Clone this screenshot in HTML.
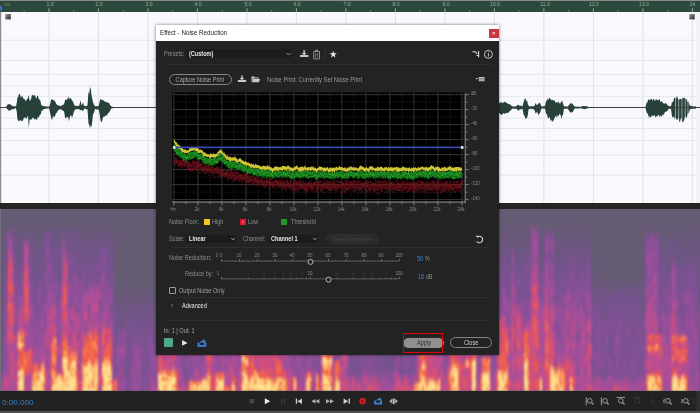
<!DOCTYPE html>
<html lang="en"><head><meta charset="utf-8"><title>Effect - Noise Reduction</title>
<style>
html,body{margin:0;padding:0}
body{width:700px;height:413px;overflow:hidden;position:relative;background:#222;font-family:"Liberation Sans",sans-serif;}
.abs{position:absolute}
.t{position:absolute;white-space:nowrap;line-height:1;transform:scaleX(.87);transform-origin:0 0}
svg{position:absolute;left:0;top:0;overflow:visible}
#ruler{left:0;top:0;width:700px;height:12px;background:#2b493d;border-top:1px solid #8a8a8a;box-sizing:border-box}
#ruler .t{font-size:5.6px;color:#9db0a8;top:1.4px;transform:translateX(-50%) scaleX(.9);transform-origin:50% 0}
#wave{left:0;top:12px;width:700px;height:191px;background:#f8f8fd}
#band{left:0;top:203px;width:700px;height:6px;background:#242424}
#spec{left:0;top:208.5px;width:700px;height:182.5px;background:#655b73;overflow:hidden}
#bar{left:0;top:391px;width:700px;height:22px;background:#222;border-bottom:2px solid #505050;box-sizing:border-box}
#time{left:1.5px;top:398.5px;font-size:8px;color:#2f7fd2;transform:scaleX(1.01)}
#dlg{left:155.7px;top:24.7px;width:343.5px;height:330.3px;background:#232323;box-shadow:0 0 3px rgba(0,0,0,.55)}
#title{left:0;top:0;width:343.5px;height:16px;background:#fff}
#title .t{left:4.4px;top:4.4px;font-size:7.4px;color:#222;transform:scaleX(.845)}
#close{right:0.6px;top:4.2px;width:9.8px;height:9.6px;background:#c8373f;color:#fff;font-size:6px;line-height:9.6px;text-align:center}
.lab{font-size:6.4px;color:#8e8e8e}
.val{font-size:6.4px;color:#e6e6e6;font-weight:bold}
.sep{position:absolute;height:1px;background:#2e2e2e}
.dd{position:absolute;background:#1c1c1c;border-radius:1px}
.pill{position:absolute;box-sizing:border-box;border:1px solid #858585;border-radius:6px;text-align:center;font-size:6.4px;white-space:nowrap}
.pill span{display:inline-block;transform:scaleX(.87)}
.tick{font-size:4.8px;color:#8a8a8a;transform:translateX(-50%) scaleX(.9);transform-origin:50% 0}
#spec i{position:absolute;top:0;width:2px;height:182.5px}
#spec i.h{top:143px;height:39.5px}
</style></head><body>

<div id="ruler" class="abs">
<span class="t" style="left:7px;color:#6f857c">ms</span>
<span class="t" style="left:49.7px">1.0</span>
<span class="t" style="left:99.2px">2.0</span>
<span class="t" style="left:148.7px">3.0</span>
<span class="t" style="left:198.2px">4.0</span>
<span class="t" style="left:247.7px">5.0</span>
<span class="t" style="left:297.2px">6.0</span>
<span class="t" style="left:346.7px">7.0</span>
<span class="t" style="left:396.2px">8.0</span>
<span class="t" style="left:445.7px">9.0</span>
<span class="t" style="left:495.2px">10.0</span>
<span class="t" style="left:544.7px">11.0</span>
<span class="t" style="left:594.2px">12.0</span>
<span class="t" style="left:643.7px">13.0</span>
<span class="t" style="left:693.2px">14.</span>
</div>
<svg width="700" height="13" viewBox="0 0 700 13">
<rect x="0" y="6" width="2" height="4.5" fill="#2f6fd6"/>
<rect x="23.6" y="10" width="1" height="1.7" fill="#6f8a80"/>
<rect x="48.4" y="8.3" width="1" height="3.4" fill="#9db0a8"/>
<rect x="73.2" y="10" width="1" height="1.7" fill="#6f8a80"/>
<rect x="97.9" y="8.3" width="1" height="3.4" fill="#9db0a8"/>
<rect x="122.7" y="10" width="1" height="1.7" fill="#6f8a80"/>
<rect x="147.4" y="8.3" width="1" height="3.4" fill="#9db0a8"/>
<rect x="172.2" y="10" width="1" height="1.7" fill="#6f8a80"/>
<rect x="196.9" y="8.3" width="1" height="3.4" fill="#9db0a8"/>
<rect x="221.7" y="10" width="1" height="1.7" fill="#6f8a80"/>
<rect x="246.4" y="8.3" width="1" height="3.4" fill="#9db0a8"/>
<rect x="271.1" y="10" width="1" height="1.7" fill="#6f8a80"/>
<rect x="295.9" y="8.3" width="1" height="3.4" fill="#9db0a8"/>
<rect x="320.6" y="10" width="1" height="1.7" fill="#6f8a80"/>
<rect x="345.4" y="8.3" width="1" height="3.4" fill="#9db0a8"/>
<rect x="370.1" y="10" width="1" height="1.7" fill="#6f8a80"/>
<rect x="394.9" y="8.3" width="1" height="3.4" fill="#9db0a8"/>
<rect x="419.6" y="10" width="1" height="1.7" fill="#6f8a80"/>
<rect x="444.4" y="8.3" width="1" height="3.4" fill="#9db0a8"/>
<rect x="469.1" y="10" width="1" height="1.7" fill="#6f8a80"/>
<rect x="493.9" y="8.3" width="1" height="3.4" fill="#9db0a8"/>
<rect x="518.6" y="10" width="1" height="1.7" fill="#6f8a80"/>
<rect x="543.4" y="8.3" width="1" height="3.4" fill="#9db0a8"/>
<rect x="568.1" y="10" width="1" height="1.7" fill="#6f8a80"/>
<rect x="592.9" y="8.3" width="1" height="3.4" fill="#9db0a8"/>
<rect x="617.6" y="10" width="1" height="1.7" fill="#6f8a80"/>
<rect x="642.4" y="8.3" width="1" height="3.4" fill="#9db0a8"/>
<rect x="667.1" y="10" width="1" height="1.7" fill="#6f8a80"/>
<rect x="691.9" y="8.3" width="1" height="3.4" fill="#9db0a8"/>
</svg>
<div id="wave" class="abs">
<svg width="700" height="191" viewBox="0 12 700 191">
<rect x="48.4" y="12" width="1" height="191" fill="#dfe2ec"/>
<rect x="97.9" y="12" width="1" height="191" fill="#dfe2ec"/>
<rect x="147.4" y="12" width="1" height="191" fill="#dfe2ec"/>
<rect x="196.9" y="12" width="1" height="191" fill="#dfe2ec"/>
<rect x="246.4" y="12" width="1" height="191" fill="#dfe2ec"/>
<rect x="295.9" y="12" width="1" height="191" fill="#dfe2ec"/>
<rect x="345.4" y="12" width="1" height="191" fill="#dfe2ec"/>
<rect x="394.9" y="12" width="1" height="191" fill="#dfe2ec"/>
<rect x="444.4" y="12" width="1" height="191" fill="#dfe2ec"/>
<rect x="493.9" y="12" width="1" height="191" fill="#dfe2ec"/>
<rect x="543.4" y="12" width="1" height="191" fill="#dfe2ec"/>
<rect x="592.9" y="12" width="1" height="191" fill="#dfe2ec"/>
<rect x="642.4" y="12" width="1" height="191" fill="#dfe2ec"/>
<rect x="691.9" y="12" width="1" height="191" fill="#dfe2ec"/>
<rect x="0" y="39.7" width="700" height="1" fill="#e3e5ef"/>
<rect x="0" y="59.9" width="700" height="1" fill="#e3e5ef"/>
<rect x="0" y="73.9" width="700" height="1" fill="#e3e5ef"/>
<rect x="0" y="85.4" width="700" height="1" fill="#e3e5ef"/>
<rect x="0" y="95.8" width="700" height="1" fill="#e3e5ef"/>
<rect x="0" y="117.6" width="700" height="1" fill="#e3e5ef"/>
<rect x="0" y="128.0" width="700" height="1" fill="#e3e5ef"/>
<rect x="0" y="140.1" width="700" height="1" fill="#e3e5ef"/>
<rect x="0" y="154.6" width="700" height="1" fill="#e3e5ef"/>
<rect x="0" y="174.6" width="700" height="1" fill="#e3e5ef"/>
<rect x="0" y="12" width="1.2" height="191" fill="#8d8d8d"/>
<rect x="696.5" y="12" width="3.5" height="191" fill="#f1f1f6"/>
<defs><linearGradient id="ci" x1="0" y1="0" x2="1" y2="1"><stop offset="0" stop-color="#9a9a9a"/><stop offset="1" stop-color="#2a2a2a"/></linearGradient></defs>
<rect x="5.2" y="14" width="5.6" height="5.4" fill="url(#ci)"/>
<rect x="689.3" y="14" width="5.4" height="5.4" fill="url(#ci)"/>
<rect x="0" y="107" width="700" height="1" fill="#3a3f3c"/>
<polygon fill="#25413a" points="6.0,107.1 7.0,105.4 8.0,104.0 9.0,104.4 10.0,104.1 11.0,105.1 12.0,105.8 12.8,106.2 13.6,106.0 14.4,106.2 15.2,106.2 16.0,106.5 16.8,102.5 17.5,97.2 18.2,97.2 19.0,93.6 20.0,94.6 21.0,97.9 22.0,95.2 23.0,98.0 24.0,99.0 25.0,99.6 25.8,101.2 26.5,100.0 27.2,99.0 28.0,97.9 28.8,95.0 29.6,101.0 31.0,99.4 31.8,95.5 32.5,94.7 33.2,95.4 34.0,95.8 34.8,94.6 35.5,96.8 36.2,99.1 37.0,96.3 37.8,95.7 38.5,98.0 39.2,100.0 40.0,99.5 40.8,102.7 41.5,105.4 42.3,105.4 43.2,106.1 44.0,106.2 44.7,106.1 45.4,106.4 46.1,106.5 46.9,106.2 47.6,106.7 48.3,106.7 49.0,106.6 49.8,105.2 50.5,102.6 51.2,99.5 52.0,99.6 53.0,99.9 54.0,100.2 55.0,101.3 56.0,103.4 57.0,104.7 58.0,105.4 58.8,105.4 59.5,105.5 60.2,106.0 61.0,106.1 61.8,105.8 62.5,104.7 63.2,104.8 64.0,104.2 65.0,100.4 66.0,98.9 66.8,100.2 67.5,98.7 68.2,95.9 69.0,99.5 70.0,97.8 71.0,98.6 72.0,100.4 73.0,101.4 74.0,104.4 75.0,106.0 75.8,105.8 76.6,106.1 77.4,105.8 78.2,105.9 79.0,106.0 79.8,103.5 80.5,100.2 81.5,105.5 82.2,104.4 83.0,102.2 84.0,105.9 84.7,105.8 85.4,106.2 86.1,106.2 86.8,105.7 87.5,105.5 88.5,91.6 89.2,94.6 90.0,86.7 90.8,89.5 91.5,95.0 92.2,98.7 93.0,102.2 94.0,104.8 95.0,106.1 95.7,106.4 96.4,105.9 97.1,106.4 97.8,105.9 98.5,106.3 99.5,102.5 100.2,99.0 101.0,99.6 102.0,100.3 103.0,99.4 104.0,101.4 105.0,101.4 106.0,101.7 107.0,102.5 108.0,102.6 109.0,103.0 110.0,104.8 111.0,106.2 111.8,106.4 112.5,106.7 113.2,107.0 114.0,107.0 114.0,108.0 113.2,108.2 112.5,108.2 111.8,108.3 111.0,108.8 110.0,110.9 109.0,112.7 108.0,113.0 107.0,115.8 106.0,115.0 105.0,116.6 104.0,116.5 103.0,117.2 102.0,121.4 101.0,122.2 100.2,118.2 99.5,113.5 98.5,109.3 97.8,109.4 97.1,109.5 96.4,109.5 95.7,108.9 95.0,109.0 94.0,112.8 93.0,114.1 92.2,121.4 91.5,127.3 90.8,125.1 90.0,128.3 89.2,124.8 88.5,123.4 87.5,109.2 86.8,109.5 86.1,108.8 85.4,108.8 84.7,108.8 84.0,109.1 83.0,110.9 82.2,110.8 81.5,109.8 80.5,110.2 79.8,109.9 79.0,109.0 78.2,109.1 77.4,109.3 76.6,108.9 75.8,109.4 75.0,109.5 74.0,111.6 73.0,115.1 72.0,117.7 71.0,114.9 70.0,116.2 69.0,121.3 68.2,117.0 67.5,117.5 66.8,116.6 66.0,118.7 65.0,117.2 64.0,111.1 63.2,110.9 62.5,110.0 61.8,110.3 61.0,109.1 60.2,109.3 59.5,109.5 58.8,110.0 58.0,110.3 57.0,112.6 56.0,113.3 55.0,116.0 54.0,117.4 53.0,115.7 52.0,120.4 51.2,118.0 50.5,114.7 49.8,111.3 49.0,108.3 48.3,108.4 47.6,108.4 46.9,108.4 46.1,108.8 45.4,108.6 44.7,109.0 44.0,109.0 43.2,109.5 42.3,110.7 41.5,110.6 40.8,114.4 40.0,114.6 39.2,116.5 38.5,117.8 37.8,116.5 37.0,120.4 36.2,119.0 35.5,118.8 34.8,120.2 34.0,117.7 33.2,118.6 32.5,117.4 31.8,119.0 31.0,119.7 29.6,119.6 28.8,128.0 28.0,116.0 27.2,116.7 26.5,119.3 25.8,117.6 25.0,118.0 24.0,117.3 23.0,120.2 22.0,120.9 21.0,120.9 20.0,119.5 19.0,121.4 18.2,120.6 17.5,119.5 16.8,112.1 16.0,108.3 15.2,108.3 14.4,108.7 13.6,109.2 12.8,108.9 12.0,109.5 11.0,109.6 10.0,110.9 9.0,110.6 8.0,109.9 7.0,108.7 6.0,107.9"/>
<polygon fill="#25413a" points="499.0,103.8 500.0,102.2 501.0,102.7 501.8,102.1 502.5,103.3 503.2,102.9 504.0,101.6 504.8,102.3 505.5,101.8 506.2,102.7 507.0,103.1 507.8,103.7 508.5,104.1 509.2,104.2 510.0,104.3 511.0,105.5 512.0,106.0 512.8,106.5 513.6,106.5 514.4,106.6 515.2,106.3 516.0,106.6 517.0,105.5 518.0,104.4 519.0,105.6 520.0,105.8 520.8,105.5 521.7,106.3 522.5,106.2 523.8,101.6 524.6,98.8 525.5,98.6 526.2,101.5 527.0,100.1 527.8,104.1 528.5,105.5 529.3,106.2 530.2,106.4 531.0,106.3 531.8,106.2 532.5,106.0 533.2,106.4 534.0,106.2 534.8,105.2 535.5,102.8 536.2,104.7 537.0,104.7 537.8,104.4 538.5,103.4 539.2,102.8 540.0,103.0 540.8,105.0 541.5,106.2 542.2,106.4 542.9,106.5 543.6,106.3 544.3,106.0 545.0,106.2 546.0,101.1 547.0,100.6 548.0,97.8 548.8,100.3 549.5,97.5 550.2,98.2 551.0,99.7 551.8,100.3 552.5,99.4 553.2,100.9 554.0,99.8 554.8,101.1 555.5,102.4 556.2,102.5 557.0,102.1 557.8,103.0 558.5,101.3 559.2,103.2 560.0,103.6 560.8,102.8 561.5,101.3 562.2,100.6 563.0,103.7 564.0,106.3 564.8,106.5 565.6,106.2 566.4,106.4 567.2,106.5 568.0,106.5 569.0,104.8 570.0,104.0 571.0,103.0 572.0,103.6 573.0,104.6 574.0,105.9 575.0,106.4 575.8,106.6 576.5,106.9 577.2,106.5 578.0,106.6 578.8,106.9 579.5,106.8 580.2,106.7 581.0,106.8 582.0,106.2 583.0,106.0 583.8,106.2 584.5,106.3 585.2,106.0 586.0,106.1 586.8,106.4 587.5,106.5 588.2,106.8 589.0,106.9 589.0,108.1 588.2,108.2 587.5,108.5 586.8,108.3 586.0,108.9 585.2,109.0 584.5,109.3 583.8,109.0 583.0,108.8 582.0,108.8 581.0,108.3 580.2,108.3 579.5,108.4 578.8,108.3 578.0,108.4 577.2,108.4 576.5,108.5 575.8,108.4 575.0,108.2 574.0,109.5 573.0,111.6 572.0,112.2 571.0,112.8 570.0,111.7 569.0,110.8 568.0,108.7 567.2,108.7 566.4,108.8 565.6,108.8 564.8,108.7 564.0,108.7 563.0,115.0 562.2,115.5 561.5,119.2 560.8,115.5 560.0,114.3 559.2,114.0 558.5,116.0 557.8,117.1 557.0,114.8 556.2,117.9 555.5,115.7 554.8,117.4 554.0,119.6 553.2,120.9 552.5,122.0 551.8,119.5 551.0,121.6 550.2,118.9 549.5,116.7 548.8,118.2 548.0,118.2 547.0,114.5 546.0,113.5 545.0,108.6 544.3,108.7 543.6,108.7 542.9,108.6 542.2,108.6 541.5,108.6 540.8,110.2 540.0,113.8 539.2,113.1 538.5,115.7 537.8,113.6 537.0,111.5 536.2,113.3 535.5,113.4 534.8,110.6 534.0,109.4 533.2,109.5 532.5,108.8 531.8,109.2 531.0,108.6 530.2,109.1 529.3,108.9 528.5,109.6 527.8,115.0 527.0,118.0 526.2,117.9 525.5,119.3 524.6,115.5 523.8,115.4 522.5,108.7 521.7,108.9 520.8,109.4 520.0,109.2 519.0,110.2 518.0,110.7 517.0,109.0 516.0,108.7 515.2,108.8 514.4,108.7 513.6,108.6 512.8,108.7 512.0,108.6 511.0,110.4 510.0,110.6 509.2,112.1 508.5,112.8 507.8,112.4 507.0,113.2 506.2,113.0 505.5,113.0 504.8,114.1 504.0,113.6 503.2,113.1 502.5,114.2 501.8,115.2 501.0,114.5 500.0,113.8 499.0,112.7"/>
<polygon fill="#25413a" points="645.5,106.9 646.5,102.7 647.2,103.0 648.0,99.8 648.8,99.5 649.5,100.1 650.2,100.0 651.0,98.7 651.8,99.1 652.6,101.0 653.4,98.8 654.2,99.4 655.0,101.3 655.8,99.2 656.6,99.4 657.4,100.1 658.2,100.5 659.0,99.2 659.8,99.4 660.6,102.7 661.4,100.7 662.2,102.1 663.0,103.0 663.8,103.4 664.5,103.9 665.2,102.7 666.0,103.5 666.8,104.1 667.7,105.5 668.5,105.8 669.3,106.3 670.2,106.1 671.0,106.4 672.0,102.0 673.0,102.2 674.0,98.4 674.8,97.5 675.5,97.1 676.2,98.9 677.0,95.6 677.8,98.6 678.5,99.0 679.2,99.8 680.0,98.9 680.8,99.3 681.5,98.3 682.2,99.1 683.0,97.2 683.8,98.5 684.5,97.5 685.2,98.6 686.0,98.8 686.8,99.7 687.7,102.0 688.5,101.2 689.2,104.1 690.0,105.9 690.8,105.5 691.5,105.9 692.2,106.0 693.0,106.4 693.8,106.5 694.5,106.4 695.2,106.3 696.0,106.5 696.0,108.5 695.2,108.7 694.5,108.4 693.8,108.9 693.0,108.6 692.2,108.8 691.5,108.9 690.8,108.9 690.0,109.4 689.2,111.5 688.5,113.2 687.7,113.9 686.8,117.4 686.0,117.7 685.2,116.0 684.5,119.1 683.8,121.6 683.0,121.5 682.2,122.4 681.5,117.9 680.8,118.3 680.0,122.2 679.2,121.6 678.5,117.0 677.8,119.3 677.0,120.2 676.2,118.6 675.5,117.7 674.8,119.5 674.0,116.0 673.0,117.7 672.0,116.6 671.0,108.7 670.2,108.8 669.3,109.1 668.5,108.8 667.7,110.6 666.8,111.3 666.0,111.9 665.2,111.6 664.5,113.2 663.8,114.1 663.0,116.0 662.2,114.0 661.4,116.9 660.6,115.3 659.8,117.6 659.0,114.9 658.2,114.7 657.4,116.4 656.6,115.8 655.8,117.8 655.0,116.0 654.2,114.8 653.4,116.2 652.6,115.9 651.8,115.1 651.0,117.6 650.2,117.4 649.5,115.7 648.8,117.7 648.0,114.2 647.2,113.3 646.5,112.1 645.5,107.9"/>
<rect x="675.2" y="96" width="0.7" height="26" fill="#f8f8fd" opacity="0.75"/>
<rect x="678.4" y="96" width="0.7" height="26" fill="#f8f8fd" opacity="0.75"/>
<rect x="681.6" y="96" width="0.7" height="26" fill="#f8f8fd" opacity="0.75"/>
<rect x="684.8" y="96" width="0.7" height="26" fill="#f8f8fd" opacity="0.75"/>
<rect x="687.6" y="96" width="0.7" height="26" fill="#f8f8fd" opacity="0.75"/>
<rect x="0" y="107" width="700" height="1" fill="#3a3f3c"/>
</svg></div>
<div id="band" class="abs"></div>
<div id="spec" class="abs">
<div class="abs" style="left:0;top:0;width:700px;height:182.5px;filter:blur(.8px)"><i style="left:0px;background:linear-gradient(#655b73 0.3%,#665a75 76.1%,#685979 80.5%,#655b73 87.6%,#665a75 88.7%,#7d5095 92.0%,#875097 95.3%,#b54e93 98.1%,#ac4e99 99.7%)"></i>
<i style="left:2px;background:linear-gradient(#655b73 0.3%,#69587a 15.7%,#675a76 20.6%,#6b577f 25.5%,#6c5680 36.0%,#715487 39.8%,#6d5682 44.8%,#725488 47.0%,#6b577f 51.4%,#74538b 59.6%,#715487 76.6%,#7a5192 80.5%,#74538a 88.2%,#78528f 89.3%,#a14e9b 91.5%,#a24e9b 99.7%)"></i>
<i style="left:4px;background:linear-gradient(#655b73 0.3%,#655b73 6.9%,#6d5583 15.7%,#6b577f 21.2%,#77528e 31.0%,#78528f 43.1%,#8a4f98 48.1%,#7a5192 50.3%,#974f9a 55.2%,#845097 57.4%,#984f9a 62.4%,#7d5095 66.8%,#a14e9b 73.9%,#9c4f9a 76.6%,#815096 78.3%,#944f99 83.2%,#8a4f98 87.1%,#954f99 89.3%,#d14e7e 93.7%,#b34e94 99.7%)"></i>
<i style="left:6px;background:linear-gradient(#655b73 0.3%,#665b74 7.4%,#715488 15.7%,#6d5681 18.4%,#76538c 23.9%,#715488 26.1%,#795290 30.5%,#76528d 33.8%,#8d4f98 40.9%,#8d4f98 44.8%,#7b5193 49.7%,#9b4f9a 53.0%,#825097 58.0%,#b34e94 68.4%,#934f99 77.2%,#7d5095 78.8%,#9e4e9b 83.8%,#894f98 87.1%,#914f99 90.4%,#cf4e80 95.9%,#b54e93 99.7%)"></i>
<i style="left:8px;background:linear-gradient(#655b73 0.3%,#675a76 9.1%,#a74e9c 17.3%,#904f99 20.1%,#c84e85 24.5%,#b94e90 27.7%,#e6555b 32.7%,#de516d 36.0%,#f05a49 43.7%,#db5073 48.1%,#e6555c 51.4%,#f36a4b 53.0%,#df5269 58.0%,#e25364 60.7%,#c64e86 64.0%,#e05268 69.0%,#d94f76 72.3%,#ac4e99 75.5%,#c04e8a 80.5%,#924f99 86.0%,#bc4e8e 95.3%,#a94e9b 99.7%)"></i>
<i style="left:10px;background:linear-gradient(#655b73 0.3%,#655b73 6.3%,#69587b 10.7%,#9d4f9a 17.3%,#a64e9c 19.0%,#a54e9c 23.9%,#da5073 28.8%,#d74e7a 31.0%,#e25363 32.7%,#d14e7e 37.6%,#ef5a4a 44.2%,#b04e96 49.7%,#ec5850 53.6%,#e15366 58.5%,#f05b48 61.3%,#d24e7e 64.0%,#d24e7d 66.8%,#e35461 69.0%,#db5072 71.7%,#a04e9b 75.5%,#d04e7f 79.9%,#b54e92 83.2%,#d94f77 87.6%,#c14e8a 94.2%,#a54e9c 96.4%,#ae4e98 99.7%)"></i>
<i style="left:12px;background:linear-gradient(#655b73 0.3%,#675a77 9.1%,#77528e 15.7%,#865097 25.5%,#be4e8c 33.8%,#a64e9c 38.2%,#e35462 44.8%,#a94e9b 49.7%,#db5072 54.1%,#d44e7d 59.1%,#e35462 61.8%,#a34e9b 66.8%,#db5073 70.1%,#d74e7a 71.7%,#9f4e9b 75.5%,#c54e87 78.8%,#b84e90 83.2%,#cc4e82 87.1%,#b54e93 90.4%,#ca4e83 92.0%,#a14e9b 97.0%,#c24e89 99.7%)"></i>
<i style="left:14px;background:linear-gradient(#655b73 0.3%,#655b74 7.4%,#6d5583 13.5%,#6a577d 18.4%,#74538b 23.4%,#6f5585 29.4%,#7d5095 36.5%,#7d5095 45.3%,#aa4e9a 56.3%,#954f99 59.1%,#825097 66.8%,#c84e85 71.7%,#9b4f9a 77.2%,#9f4e9b 80.5%,#c24e89 84.9%,#ad4e98 88.2%,#bf4e8b 93.1%,#ad4e98 94.8%,#b54e93 99.7%)"></i>
<i style="left:16px;background:linear-gradient(#655b73 0.3%,#655b74 7.4%,#6d5583 14.6%,#6a587c 21.2%,#6d5583 22.8%,#705486 29.4%,#7a5191 34.9%,#77528f 37.6%,#8a4f98 43.1%,#8b4f98 47.0%,#77528f 51.9%,#77528e 54.7%,#8f4f98 62.9%,#875097 65.7%,#d84f78 73.9%,#9e4e9b 80.5%,#c74e86 85.4%,#a34e9b 88.2%,#be4e8c 93.1%,#c24e89 99.7%)"></i>
<i style="left:18px;background:linear-gradient(#655b73 0.3%,#675a77 12.4%,#6e5584 19.0%,#6e5584 29.4%,#77528e 32.1%,#76538d 36.5%,#7b5193 38.7%,#76528d 41.5%,#9f4e9b 48.6%,#934f99 51.9%,#bf4e8b 56.9%,#cf4e80 60.7%,#b14e95 65.7%,#fdb86d 70.1%,#fdb36a 72.3%,#ffe390 74.5%,#e5555d 78.3%,#d44e7c 79.9%,#f5734c 84.3%,#ec5850 88.2%,#ffe18e 89.8%,#ffe895 90.4%,#fb9c5b 93.7%,#ffe793 95.3%,#fec274 99.7%)"></i>
<i style="left:20px;background:linear-gradient(#655b73 0.3%,#655b73 6.9%,#69587b 13.5%,#725489 18.4%,#6e5584 23.4%,#7a5191 32.1%,#795290 37.1%,#855097 40.4%,#7b5192 45.9%,#835097 48.1%,#a84e9c 50.3%,#a24e9b 55.2%,#c44e88 58.5%,#b54e92 61.3%,#c24e89 66.2%,#f6784d 70.6%,#f8844f 72.8%,#fed482 74.5%,#fecc7b 75.5%,#f46d4b 77.7%,#ea5753 79.4%,#e7565a 84.9%,#f77c4e 87.6%,#ffda88 89.8%,#ffdc8a 90.4%,#fca560 91.5%,#ffe38f 93.7%,#fed382 94.8%,#ffea96 95.9%,#fec375 97.5%,#ffea96 98.6%,#fed886 99.7%)"></i>
<i style="left:22px;background:linear-gradient(#655b73 0.3%,#69587b 14.6%,#75538c 19.0%,#715487 21.7%,#795290 26.1%,#77528f 31.6%,#845097 39.3%,#984f9a 41.5%,#9a4f9a 51.4%,#ba4e8f 56.9%,#9d4f9a 62.9%,#be4e8c 65.7%,#f46c4b 67.9%,#fa9154 70.6%,#f26249 72.3%,#fb9a5a 73.9%,#fb9f5d 75.0%,#e35461 76.6%,#df5269 77.2%,#f36a4a 78.8%,#f15d48 84.9%,#f6794d 87.1%,#fdbb6f 88.7%,#fecc7b 90.9%,#ffe18e 97.0%,#fdb96e 99.2%,#fec878 99.7%)"></i>
<i style="left:24px;background:linear-gradient(#655b73 0.3%,#655b74 7.4%,#6b577e 14.6%,#ae4e98 20.1%,#c34e89 26.1%,#ad4e98 28.8%,#cf4e80 31.0%,#da5073 35.4%,#ed584e 38.2%,#e25364 42.0%,#ed584f 46.4%,#d44e7c 51.4%,#df526b 55.2%,#d94f77 58.0%,#e4545f 60.2%,#a74e9c 63.5%,#a04e9b 65.1%,#d44e7c 68.4%,#b04e96 71.2%,#b54e92 74.5%,#ce4e81 76.1%,#bd4e8d 77.7%,#f3674a 79.9%,#f16049 81.0%,#fa8e51 84.3%,#f77f4e 86.0%,#ec5851 87.6%,#ed594e 88.7%,#b54e93 92.0%,#a34e9b 95.9%,#ba4e8f 97.5%,#bb4e8e 99.7%)"></i>
<i style="left:26px;background:linear-gradient(#655b73 0.3%,#655b73 8.0%,#6c5681 15.1%,#74538a 16.8%,#ac4e99 19.5%,#c24e89 21.2%,#b94e90 28.8%,#e05268 36.5%,#d34e7d 41.5%,#f15e49 46.4%,#e7565a 52.5%,#f05b48 53.6%,#f05a49 56.9%,#b54e92 62.9%,#a94e9b 66.8%,#c04e8b 68.4%,#a74e9c 70.6%,#a04e9b 77.2%,#af4e97 78.3%,#ea5754 79.9%,#f3694a 83.2%,#e5555e 86.0%,#eb5752 89.3%,#a84e9c 93.1%,#a74e9c 96.4%,#be4e8c 98.1%,#b34e94 99.7%)"></i>
<i style="left:28px;background:linear-gradient(#655b73 0.3%,#685979 14.6%,#6d5682 17.3%,#7c5194 19.5%,#924f99 22.3%,#815096 28.8%,#9e4e9b 33.2%,#894f98 38.2%,#b14e95 42.6%,#bc4e8d 45.9%,#ab4e9a 50.8%,#c84e85 59.6%,#9e4e9b 64.0%,#954f99 74.5%,#b44e93 76.6%,#f3674a 78.8%,#e75659 85.4%,#f05a48 87.6%,#a84e9c 92.0%,#ca4e83 96.4%,#a74e9c 99.7%)"></i>
<i style="left:30px;background:linear-gradient(#655b73 0.3%,#675a76 11.8%,#7e5096 28.3%,#78528f 34.9%,#8c4f98 40.9%,#795290 44.8%,#845097 49.2%,#7e5096 50.8%,#b24e95 56.3%,#885097 60.7%,#9f4e9b 65.7%,#934f99 67.3%,#ad4e98 72.3%,#a44e9b 73.9%,#c94e84 77.2%,#ea5754 78.8%,#dc516f 81.6%,#e7565a 84.3%,#e05267 87.6%,#b54e92 90.4%,#a44e9b 94.2%,#bd4e8d 99.7%)"></i>
<i style="left:32px;background:linear-gradient(#655b73 0.3%,#665a75 12.9%,#6c5680 16.2%,#74538b 37.6%,#855097 45.3%,#7a5191 49.7%,#9c4f9a 53.6%,#825097 56.9%,#9b4f9a 59.6%,#885097 64.6%,#9c4f9a 69.5%,#8c4f98 75.0%,#b74e91 79.4%,#a54e9c 83.8%,#df5269 87.1%,#e85658 89.8%,#f6764c 90.9%,#fcb068 95.3%,#fa9355 96.4%,#fece7d 98.1%,#fed180 99.7%)"></i>
<i style="left:34px;background:linear-gradient(#655b73 0.3%,#655b73 7.4%,#6d5682 19.0%,#725489 41.5%,#7f5096 45.9%,#7a5192 54.1%,#934f99 59.1%,#845097 63.5%,#9c4f9a 68.4%,#924f99 72.8%,#ad4e98 77.7%,#a04e9b 82.1%,#f5724c 87.1%,#f46c4b 88.2%,#fcae66 91.5%,#f9874f 94.2%,#fec274 95.9%,#ffea96 99.7%)"></i>
<i style="left:36px;background:linear-gradient(#655b73 0.3%,#685979 15.1%,#705487 22.3%,#6e5583 26.1%,#74538b 28.3%,#6f5585 33.2%,#795290 37.6%,#76538d 39.3%,#815096 45.9%,#815096 50.3%,#725489 54.1%,#77528e 56.9%,#875097 58.5%,#7c5194 60.7%,#a34e9b 65.7%,#7f5096 70.6%,#954f99 76.6%,#ab4e9a 78.3%,#954f99 82.7%,#a54e9c 83.8%,#f16049 86.5%,#f46f4b 89.3%,#fca662 90.4%,#fcad66 90.9%,#f77e4e 92.0%,#fec173 94.2%,#fece7e 96.4%,#fba15e 97.5%,#fed886 98.6%,#fec173 99.7%)"></i>
<i style="left:38px;background:linear-gradient(#655b73 0.3%,#655b73 6.9%,#69587a 11.3%,#675a77 15.1%,#7a5192 34.3%,#74538b 39.3%,#9e4e9b 49.7%,#7c5194 54.7%,#944f99 58.5%,#865097 63.5%,#9d4f9a 67.9%,#924f99 73.4%,#ab4e9a 78.8%,#994f9a 83.8%,#d04e7f 87.1%,#fcab65 91.5%,#f8834f 93.1%,#ffe390 95.3%,#ffde8c 99.7%)"></i>
<i style="left:40px;background:linear-gradient(#655b73 0.3%,#655b73 6.9%,#74538a 21.2%,#6e5584 27.2%,#735389 37.6%,#8b4f98 45.3%,#7d5094 49.2%,#805096 56.3%,#a54e9c 61.8%,#8b4f98 65.1%,#a64e9c 76.1%,#9b4f9a 77.7%,#b14e95 83.8%,#f77b4d 88.7%,#ffdd8b 90.4%,#ffea96 92.6%,#fdb86d 95.3%,#fed684 96.4%,#fec173 98.1%,#fed684 99.7%)"></i>
<i style="left:42px;background:linear-gradient(#655b73 0.3%,#675a76 13.5%,#6f5585 22.3%,#725488 32.1%,#6d5682 37.1%,#7b5193 44.8%,#a54e9c 62.4%,#934f99 67.3%,#a04e9b 69.0%,#944f99 73.9%,#ad4e99 75.5%,#b84e91 82.7%,#fdbb6f 87.1%,#fed381 88.7%,#fdb36a 90.4%,#ffe592 92.0%,#ffe591 94.8%,#f9894f 97.0%,#fed180 99.7%)"></i>
<i style="left:44px;background:linear-gradient(#655b73 0.3%,#665a75 9.6%,#76528d 14.6%,#7c5194 21.2%,#76528d 25.5%,#815096 29.4%,#7c5193 34.3%,#904f99 37.1%,#7b5192 42.6%,#795191 49.2%,#954f99 54.7%,#815096 60.2%,#b44e93 73.4%,#954f99 77.7%,#ba4e8f 81.0%,#d14e7e 87.6%,#f36a4b 89.8%,#f15d48 90.9%,#f67a4d 93.7%,#cf4e80 98.1%,#ed594e 99.7%)"></i>
<i style="left:46px;background:linear-gradient(#655b73 0.3%,#655b74 8.0%,#7e5096 15.1%,#8f4f98 22.3%,#795191 31.0%,#974f9a 36.5%,#885097 44.8%,#894f98 48.1%,#a64e9c 54.1%,#9a4f9a 64.0%,#b74e91 68.4%,#b14e95 70.1%,#cb4e83 71.7%,#c44e88 75.0%,#a04e9b 76.6%,#894f98 86.0%,#b34e94 90.4%,#9d4f9a 99.7%)"></i>
<i style="left:48px;background:linear-gradient(#655b73 0.3%,#655b74 7.4%,#6a587c 10.2%,#7e5096 14.6%,#7d5095 19.5%,#944f99 23.9%,#885097 28.3%,#a64e9c 32.7%,#875097 36.5%,#835097 39.3%,#a44e9b 47.0%,#9c4f9a 55.2%,#c24e89 59.6%,#c84e85 66.8%,#a54e9c 73.4%,#ad4e98 75.5%,#934f99 79.4%,#a44e9b 84.3%,#9b4f9a 92.6%,#ae4e98 94.2%,#a34e9b 99.7%)"></i>
<i style="left:50px;background:linear-gradient(#655b73 0.3%,#675a77 9.6%,#73538a 14.6%,#6d5682 21.7%,#7d5095 26.6%,#77528f 32.1%,#845097 36.0%,#7a5192 40.4%,#a54e9c 47.5%,#974f9a 51.9%,#c54e87 59.1%,#a84e9c 62.4%,#c14e8a 66.8%,#b04e96 70.1%,#dd516e 75.5%,#dc5071 77.7%,#c64e86 79.4%,#db5072 83.2%,#cb4e83 86.5%,#f15e49 89.3%,#c34e88 93.7%,#cf4e80 95.9%,#e95757 98.1%,#e95756 99.7%)"></i>
<i style="left:52px;background:linear-gradient(#655b73 0.3%,#665a75 10.2%,#6e5584 14.0%,#78528f 25.5%,#7e5096 27.2%,#7f5096 33.8%,#8e4f98 35.4%,#855097 37.6%,#8f4f98 41.5%,#7d5095 45.3%,#9e4e9b 47.5%,#984f9a 51.9%,#cd4e81 54.1%,#d84e78 56.3%,#ae4e98 60.7%,#da4f74 65.7%,#bc4e8e 69.5%,#e7565b 71.2%,#f8814e 75.5%,#f5754c 78.3%,#fba15e 82.7%,#fa8c50 83.8%,#dd516f 86.5%,#fba15e 89.3%,#fb9a59 90.4%,#fecc7b 91.5%,#fb9f5d 92.6%,#f77d4e 95.3%,#ffe390 98.6%,#ffd987 99.7%)"></i>
<i style="left:54px;background:linear-gradient(#655b73 0.3%,#655b74 8.0%,#7a5191 23.4%,#75538b 32.1%,#954f99 43.1%,#8d4f98 49.2%,#bb4e8e 54.1%,#a64e9c 61.3%,#d74e7a 66.2%,#d94f75 69.5%,#e05269 70.1%,#fa8d50 71.2%,#fcb169 72.3%,#f77f4e 74.5%,#f8834f 77.7%,#f2644a 78.8%,#f9874f 81.0%,#fa9153 83.8%,#e35463 87.6%,#fa8a50 90.4%,#f77c4e 92.0%,#fec476 93.7%,#fdb56b 95.3%,#fed987 96.4%,#ffdf8c 99.7%)"></i>
<i style="left:56px;background:linear-gradient(#655b73 0.3%,#675a76 10.7%,#6d5682 16.2%,#6d5682 22.3%,#77528e 27.2%,#705486 31.0%,#73538a 38.2%,#924f99 44.2%,#7c5194 49.7%,#7f5096 53.6%,#974f9a 56.9%,#8b4f98 69.0%,#8d4f98 69.5%,#ca4e84 71.2%,#b14e95 73.4%,#e25363 77.7%,#a94e9c 87.1%,#d54e7c 89.8%,#fb9b5a 92.6%,#fed07f 94.8%,#fdba6f 95.9%,#fed987 97.0%,#fdc073 99.7%)"></i>
<i style="left:58px;background:linear-gradient(#655b73 0.3%,#655b73 7.4%,#75538c 29.4%,#705486 38.2%,#894f98 42.6%,#795191 47.5%,#8b4f98 50.8%,#8b4f98 56.3%,#994f9a 58.5%,#8a4f98 63.5%,#984f9a 65.1%,#7e5095 70.1%,#ae4e98 77.2%,#964f99 79.4%,#944f99 82.1%,#a64e9c 83.2%,#ae4e97 89.3%,#c64e86 89.8%,#fcb169 91.5%,#ffe996 93.1%,#ffdf8c 99.7%)"></i>
<i style="left:60px;background:linear-gradient(#655b73 0.3%,#655b73 8.5%,#6c577f 16.2%,#77528e 20.6%,#705487 38.2%,#855097 42.0%,#805096 45.9%,#a84e9c 53.0%,#984f9a 57.4%,#a64e9c 62.4%,#934f99 64.0%,#934f99 66.2%,#a04e9b 72.8%,#c84e85 75.5%,#be4e8c 78.8%,#994f9a 82.7%,#ad4e99 87.6%,#9f4e9b 89.3%,#c24e8a 90.4%,#fb9b5a 92.0%,#fcaf68 92.6%,#ffe793 95.9%,#fec475 97.5%,#ffea96 99.7%)"></i>
<i style="left:62px;background:linear-gradient(#655b73 0.3%,#675a77 10.7%,#a74e9c 23.9%,#9e4e9b 31.6%,#b94e90 37.1%,#b04e96 38.7%,#df526a 44.2%,#cb4e83 47.0%,#e15366 51.4%,#c74e86 56.3%,#dd516e 59.1%,#b04e96 64.0%,#f05b48 74.5%,#e85658 76.1%,#f3694a 78.3%,#f05b48 79.9%,#fdbd71 82.7%,#fdbe71 85.4%,#e7565a 90.9%,#fec878 95.9%,#fed180 99.7%)"></i>
<i style="left:64px;background:linear-gradient(#655b73 0.3%,#69587a 12.9%,#8d4f98 22.3%,#a44e9b 27.2%,#e25363 32.7%,#c34e88 38.7%,#d44e7c 41.5%,#ec5851 43.7%,#f2634a 50.3%,#d94f76 53.6%,#e95755 58.5%,#ba4e8f 64.0%,#b24e95 66.8%,#db5071 69.0%,#da5073 70.1%,#f9854f 75.0%,#f77e4e 76.1%,#ee594b 77.2%,#fcab65 78.3%,#fec174 78.8%,#fba25f 81.0%,#ffea96 82.7%,#ffdd8b 92.0%,#fcb068 94.2%,#ffe08d 98.1%,#ffda88 99.7%)"></i>
<i style="left:66px;background:linear-gradient(#655b73 0.3%,#655b73 7.4%,#6b577e 14.0%,#75538c 21.2%,#c64e86 33.2%,#bb4e8e 39.8%,#cb4e83 48.6%,#b34e94 49.7%,#d24e7e 51.4%,#af4e97 53.6%,#ac4e99 55.2%,#da4f75 60.2%,#bd4e8c 67.9%,#f15d48 73.9%,#f05a48 75.0%,#f67a4d 76.1%,#fa8a50 81.0%,#fed685 82.7%,#fed281 84.3%,#fcaa64 85.4%,#fed180 86.5%,#fec778 88.2%,#ffde8b 90.4%,#fcb169 93.1%,#fed07f 94.2%,#fdb56b 95.9%,#ffe793 98.6%,#ffe390 99.7%)"></i>
<i style="left:68px;background:linear-gradient(#655b73 0.3%,#655b73 8.0%,#715487 17.3%,#7b5193 37.1%,#9b4f9a 47.5%,#8a4f98 51.9%,#a34e9b 56.9%,#8d4f98 61.8%,#aa4e9a 63.5%,#c44e88 66.2%,#9f4e9b 69.5%,#a24e9b 72.3%,#dd516d 76.6%,#da4f74 79.4%,#f5744c 82.1%,#eb5851 83.2%,#f98950 84.3%,#f2644a 87.1%,#f77f4e 88.7%,#ffdf8c 89.8%,#ffe995 90.4%,#fdba6f 93.1%,#ffe693 95.9%,#fdb46b 97.5%,#ffe995 98.6%,#ffea96 99.7%)"></i>
<i style="left:70px;background:linear-gradient(#655b73 0.3%,#655b73 7.4%,#675978 9.6%,#6d5583 11.3%,#7e5095 31.0%,#7b5192 36.0%,#9d4f9a 45.3%,#7d5095 51.4%,#b84e91 56.3%,#a14e9b 58.5%,#a64e9c 60.2%,#914f99 61.8%,#a34e9b 63.5%,#ae4e97 67.3%,#a24e9b 73.4%,#a84e9c 75.0%,#f8824e 79.9%,#fa8b50 81.6%,#f5714c 83.2%,#ffdb89 88.2%,#f9874f 90.4%,#ffe08d 92.0%,#ffea96 99.7%)"></i>
<i style="left:72px;background:linear-gradient(#655b73 0.3%,#655b73 6.3%,#6c5681 11.3%,#725489 23.4%,#8b4f98 28.8%,#7a5192 33.8%,#894f98 37.1%,#894f98 51.4%,#cd4e82 58.0%,#cb4e82 59.6%,#924f99 62.4%,#8b4f98 64.6%,#bb4e8e 67.9%,#cd4e81 77.2%,#f9874f 82.1%,#ffe18e 84.3%,#ffe18e 86.5%,#f6764c 88.2%,#fed886 89.3%,#ffe28f 89.8%,#fba15e 91.5%,#ffdd8a 93.7%,#ffda88 99.7%)"></i>
<i style="left:74px;background:linear-gradient(#655b73 0.3%,#655b74 6.9%,#6e5583 11.8%,#6c5681 17.9%,#77528e 22.3%,#7c5193 34.3%,#9c4f9a 38.7%,#885097 43.7%,#9e4e9b 49.7%,#865097 55.2%,#bb4e8e 60.2%,#a94e9b 66.2%,#db5073 68.4%,#e25363 70.6%,#cd4e81 77.2%,#fb9f5d 81.6%,#f98950 82.7%,#ffe491 84.3%,#fed381 86.0%,#ffe592 87.6%,#fca963 90.4%,#fed785 91.5%,#ffea96 94.2%,#ffe794 96.4%,#fec476 97.5%,#ffdb89 99.7%)"></i>
<i style="left:76px;background:linear-gradient(#655b73 0.3%,#655b73 7.4%,#715488 16.2%,#6d5682 20.1%,#74538b 25.0%,#705487 29.4%,#9c4f9a 43.7%,#875097 48.1%,#984f9a 50.8%,#8d4f98 55.8%,#a34e9b 57.4%,#c74e86 64.0%,#944f99 70.1%,#cb4e82 75.0%,#b74e91 76.6%,#f2654a 81.6%,#f15d49 84.3%,#e15365 86.0%,#f05c48 92.6%,#fa9053 95.9%,#f8804e 99.7%)"></i>
<i style="left:78px;background:linear-gradient(#655b73 0.3%,#655b74 8.0%,#705487 19.0%,#77528e 31.0%,#725488 36.0%,#8e4f98 40.9%,#885097 48.1%,#a34e9b 53.0%,#8f4f98 54.7%,#bd4e8d 59.6%,#ad4e98 61.3%,#b54e93 65.1%,#8f4f98 70.1%,#b74e91 74.5%,#954f99 86.0%,#d54e7c 95.9%,#c34e89 99.7%)"></i>
<i style="left:80px;background:linear-gradient(#655b73 0.3%,#665a75 10.2%,#6a577d 17.3%,#725488 21.2%,#75538c 36.0%,#8c4f98 40.9%,#815096 48.6%,#994f9a 59.1%,#894f98 61.3%,#b04e96 69.5%,#994f9a 82.1%,#bc4e8d 87.1%,#b44e93 93.1%,#d64e7b 96.4%,#d34e7d 99.7%)"></i>
<i style="left:82px;background:linear-gradient(#655b73 0.3%,#685979 13.5%,#76528d 22.3%,#725489 25.5%,#845097 38.7%,#7d5095 42.6%,#8e4f98 45.9%,#a84e9c 47.5%,#b34e94 50.8%,#9a4f9a 55.8%,#bb4e8f 64.6%,#a84e9c 66.8%,#d94f76 70.6%,#c34e89 74.5%,#f36a4b 79.4%,#f15f49 84.3%,#fca863 86.5%,#fa9154 88.2%,#fcab65 89.8%,#f6784d 93.1%,#fca762 95.3%,#fba25f 98.1%,#fec979 99.7%)"></i>
<i style="left:84px;background:linear-gradient(#655b73 0.3%,#69587a 14.6%,#725488 21.2%,#725488 26.6%,#7c5194 29.9%,#845097 34.3%,#7b5192 39.8%,#aa4e9a 48.6%,#994f9a 53.0%,#dc5071 58.5%,#954f99 62.4%,#8d4f98 65.1%,#a04e9b 68.4%,#e15367 70.6%,#e15366 72.3%,#f3674a 73.9%,#ed594e 75.0%,#f6774d 77.7%,#f6774d 79.9%,#ed584e 83.8%,#f16049 84.9%,#ffe793 88.2%,#fec878 90.9%,#ffdd8a 93.1%,#fec777 97.0%,#ffe996 99.7%)"></i>
<i style="left:86px;background:linear-gradient(#655b73 0.3%,#675978 16.2%,#725488 21.2%,#74538b 31.6%,#7d5095 36.0%,#75538b 41.5%,#7a5192 43.7%,#c84e85 48.6%,#c34e89 51.4%,#a34e9b 53.6%,#a54e9c 56.9%,#c34e89 58.5%,#984f9a 65.1%,#a24e9b 67.3%,#f46d4b 75.5%,#f15d49 81.6%,#e25364 82.7%,#e5555d 83.2%,#f8834f 84.3%,#f9864f 86.0%,#ffdc89 87.1%,#ffe592 87.6%,#ffe491 89.3%,#fca963 90.9%,#ffdd8a 92.6%,#ffea96 99.7%)"></i>
<i style="left:88px;background:linear-gradient(#655b73 0.3%,#655b74 11.8%,#74538b 26.6%,#76538c 32.7%,#6f5585 37.6%,#994f9a 45.3%,#a04e9b 51.9%,#885097 54.1%,#835097 56.9%,#994f9a 59.1%,#a14e9b 62.9%,#f26249 70.6%,#e6555c 71.7%,#f46f4b 74.5%,#ec5851 75.5%,#f36b4b 77.2%,#eb5852 79.4%,#f05b48 81.6%,#ffe490 84.9%,#ffe793 87.6%,#fdb76d 88.7%,#ffe28f 89.8%,#fed483 95.3%,#fdb36a 96.4%,#f46c4b 97.5%,#fdb86d 98.6%,#fed180 99.7%)"></i>
<i style="left:90px;background:linear-gradient(#655b73 0.3%,#655b74 7.4%,#6c5681 15.1%,#6a577d 21.2%,#7a5191 36.0%,#78528f 38.2%,#a94e9b 43.7%,#bf4e8c 47.5%,#9c4f9a 54.1%,#bb4e8e 61.3%,#b84e91 65.7%,#f8824e 70.6%,#f36a4b 71.7%,#f5754c 73.9%,#f05a48 75.5%,#f5744c 78.3%,#f16149 83.8%,#fec878 86.5%,#fec274 88.2%,#ffe592 89.8%,#ffe591 92.6%,#fec475 94.8%,#ffe390 99.7%)"></i>
<i style="left:92px;background:linear-gradient(#655b73 0.3%,#655b73 7.4%,#6c5680 11.8%,#6b577e 22.3%,#705586 25.0%,#705487 29.9%,#855097 37.1%,#815096 42.0%,#a14e9b 45.9%,#ab4e99 50.8%,#c64e86 53.0%,#ca4e83 55.8%,#b64e92 56.9%,#9e4e9b 64.0%,#df526a 71.7%,#f9874f 73.9%,#f26349 78.3%,#f6764c 81.0%,#f05b48 82.7%,#f36b4b 85.4%,#feca7a 88.7%,#fca762 90.4%,#fec979 92.0%,#fcab65 93.7%,#f46e4b 95.3%,#f8834e 97.5%,#ffea96 99.7%)"></i>
<i style="left:94px;background:linear-gradient(#655b73 0.3%,#655b73 7.4%,#73538a 21.7%,#715487 26.6%,#7b5193 31.0%,#76528d 38.2%,#a64e9c 45.3%,#9a4f9a 47.5%,#bd4e8d 53.0%,#9c4f9a 57.4%,#bb4e8e 64.0%,#f05a49 67.9%,#df526b 69.0%,#f46e4b 70.1%,#f3684a 71.7%,#fa9355 73.4%,#fa8a50 76.1%,#ef594a 78.3%,#e25364 81.0%,#f77b4d 84.3%,#fec174 86.0%,#fcb169 91.5%,#ffea96 96.4%,#fec476 98.1%,#ffea96 99.7%)"></i>
<i style="left:96px;background:linear-gradient(#655b73 0.3%,#655b73 8.0%,#6d5583 15.1%,#725489 27.2%,#835097 31.6%,#74538a 38.2%,#7b5193 40.9%,#b54e93 45.3%,#a64e9c 49.7%,#d24e7d 53.0%,#d04e7f 55.2%,#a24e9b 59.1%,#a74e9c 62.9%,#b44e93 65.7%,#f15f49 70.1%,#e95657 74.5%,#f9874f 76.6%,#ef5a4a 81.0%,#fecc7c 86.0%,#ffe491 89.3%,#fed180 92.0%,#ffe894 94.2%,#fb9d5b 96.4%,#fdc072 98.1%,#fb9657 99.7%)"></i>
<i style="left:98px;background:linear-gradient(#655b73 0.3%,#675a77 11.3%,#725488 20.1%,#735489 26.6%,#825097 31.6%,#725489 36.5%,#b24e94 47.5%,#855097 51.9%,#934f99 54.7%,#8d4f98 58.0%,#b94e90 62.9%,#9e4e9b 66.2%,#c04e8a 71.7%,#ac4e99 75.5%,#b14e95 84.3%,#c84e85 88.7%,#bc4e8d 90.4%,#d84f78 91.5%,#de516b 93.1%,#d94f76 95.3%,#af4e97 98.1%,#b84e90 99.7%)"></i>
<i style="left:100px;background:linear-gradient(#655b73 0.3%,#655b73 8.0%,#69587b 14.6%,#7a5192 23.9%,#77528e 26.6%,#835097 31.0%,#7a5192 36.0%,#9a4f9a 41.5%,#924f99 43.7%,#a04e9b 48.1%,#805096 53.0%,#a24e9b 62.9%,#934f99 69.0%,#ae4e98 71.2%,#b54e93 73.9%,#a14e9b 75.5%,#b84e91 77.7%,#a04e9b 83.2%,#cb4e83 88.2%,#bb4e8e 90.4%,#cc4e82 92.6%,#ae4e98 97.5%,#b74e91 99.7%)"></i>
<i style="left:102px;background:linear-gradient(#655b73 0.3%,#665a75 11.8%,#6b577f 14.6%,#6d5682 19.5%,#795290 22.3%,#8f4f98 27.7%,#904f99 30.5%,#7d5095 32.7%,#a34e9b 37.6%,#875097 42.6%,#9a4f9a 47.5%,#845097 54.7%,#a54e9c 59.1%,#a04e9b 62.9%,#e45460 65.7%,#f2644a 69.0%,#eb5851 74.5%,#cf4e80 79.9%,#e85658 81.0%,#f2654a 83.8%,#fed281 85.4%,#fec677 86.5%,#ffea96 88.2%,#fec979 91.5%,#f9854f 93.1%,#f6784d 96.4%,#fed583 98.6%,#fecd7c 99.7%)"></i>
<i style="left:104px;background:linear-gradient(#655b73 0.3%,#665a75 10.7%,#7e5096 23.9%,#875097 29.9%,#7d5095 34.3%,#9c4f9a 40.9%,#8c4f98 45.9%,#914f99 51.4%,#be4e8c 59.1%,#aa4e9a 62.9%,#d94f76 66.8%,#d24e7d 76.1%,#f46e4b 81.6%,#fcb168 83.2%,#ffe390 87.6%,#fecb7a 89.8%,#ffea96 92.6%,#fed886 99.7%)"></i>
<i style="left:106px;background:linear-gradient(#655b73 0.3%,#675a76 10.7%,#6f5585 15.7%,#6d5583 17.9%,#78528f 23.4%,#76538d 37.1%,#785290 39.8%,#885097 42.0%,#875097 47.5%,#a74e9c 56.3%,#964f99 63.5%,#d34e7d 66.2%,#ba4e8f 70.1%,#c14e8a 72.3%,#f46c4b 78.3%,#ec584f 80.5%,#f8814e 82.1%,#fdb36a 86.5%,#ffe28f 88.2%,#fec979 89.8%,#ffe693 91.5%,#ffe995 94.2%,#fec375 97.5%,#ffe390 99.7%)"></i>
<i style="left:108px;background:linear-gradient(#655b73 0.3%,#655b73 8.5%,#6b577f 16.8%,#725488 19.0%,#6f5586 23.9%,#795290 27.2%,#73538a 32.1%,#7d5095 36.0%,#845097 43.7%,#984f9a 47.5%,#875097 53.6%,#9b4f9a 58.5%,#8c4f98 62.4%,#9a4f9a 64.6%,#d74e79 66.2%,#e25364 67.3%,#de516c 71.2%,#f2654a 76.6%,#ed584e 79.4%,#fb9556 83.2%,#ffe793 85.4%,#ffe592 90.4%,#fba25f 92.0%,#ffe28f 93.7%,#fb9656 95.3%,#ffe08e 97.0%,#ffea96 99.7%)"></i>
<i style="left:110px;background:linear-gradient(#655b73 0.3%,#6a587c 16.2%,#6e5584 19.0%,#705586 23.4%,#7c5193 27.2%,#795290 31.6%,#815096 36.0%,#795290 40.4%,#984f9a 47.5%,#815096 56.3%,#a04e9b 60.2%,#a44e9b 65.1%,#cf4e7f 66.8%,#c04e8b 69.0%,#e85659 74.5%,#ed594e 78.3%,#df526a 81.0%,#f05c48 84.9%,#fca460 87.6%,#feca79 90.4%,#fec979 93.7%,#f98950 95.3%,#fece7d 96.4%,#ffda88 99.7%)"></i>
<i style="left:112px;background:linear-gradient(#655b73 0.3%,#665a75 12.4%,#725489 24.5%,#6e5583 31.0%,#75538c 36.0%,#76538d 44.8%,#7f5096 49.2%,#7a5192 58.0%,#984f9a 61.3%,#865097 68.4%,#934f99 71.7%,#865097 76.6%,#934f99 85.4%,#7f5096 90.9%,#8a4f98 93.1%,#d94f75 95.3%,#ec5851 99.7%)"></i>
<i style="left:114px;background:linear-gradient(#655b73 0.3%,#6a587c 32.1%,#69597a 45.9%,#705486 50.8%,#7c5193 61.3%,#715487 66.8%,#845097 72.3%,#7b5193 76.6%,#8a4f98 79.4%,#7b5192 84.9%,#7e5096 89.3%,#934f99 92.6%,#f05a48 94.2%,#f8804e 95.3%,#f4704c 99.7%)"></i>
<i style="left:116px;background:linear-gradient(#655b73 0.3%,#665a75 46.4%,#77528e 58.0%,#735489 69.0%,#9a4f9a 81.6%,#7a5191 89.3%,#914f99 92.0%,#dd516f 94.2%,#d94f77 98.1%,#e7565a 99.7%)"></i>
<i style="left:118px;background:linear-gradient(#655b73 0.3%,#655b73 42.6%,#675a76 48.1%,#6e5583 54.1%,#6d5583 61.3%,#7e5096 67.3%,#8c4f98 70.6%,#845097 72.3%,#a54e9c 77.2%,#924f99 87.1%,#974f9a 91.5%,#835097 96.4%,#964f99 99.7%)"></i>
<i style="left:120px;background:linear-gradient(#655b73 0.3%,#655b73 42.0%,#74538b 66.8%,#7f5096 69.5%,#845097 73.4%,#a94e9b 77.7%,#7e5096 84.3%,#994f9a 89.3%,#875097 92.6%,#9f4e9b 96.4%,#9f4e9b 99.7%)"></i>
<i style="left:122px;background:linear-gradient(#655b73 0.3%,#665a75 45.9%,#6d5583 53.6%,#6d5682 63.5%,#74538b 66.2%,#984f9a 69.0%,#845097 73.4%,#b54e93 77.7%,#825097 85.4%,#994f9a 89.8%,#a14e9b 99.7%)"></i>
<i style="left:124px;background:linear-gradient(#655b73 0.3%,#655b73 41.5%,#685979 51.9%,#8d4f98 70.6%,#894f98 82.7%,#795290 87.6%,#7d5095 93.1%,#8e4f98 94.8%,#8d4f98 99.7%)"></i>
<i style="left:126px;background:linear-gradient(#655b73 0.3%,#655b73 42.0%,#69587a 51.4%,#725489 56.9%,#725488 60.7%,#7a5191 65.7%,#7c5094 72.8%,#77528e 76.1%,#815096 81.0%,#73538a 84.9%,#7f5096 94.8%,#7e5096 99.7%)"></i>
<i style="left:128px;background:linear-gradient(#655b73 0.3%,#655b73 42.0%,#6b577f 47.5%,#6d5583 56.9%,#7d5095 65.7%,#74538b 75.0%,#7b5193 79.9%,#725488 83.8%,#795290 88.2%,#75538c 91.5%,#8a4f98 96.4%,#7b5193 99.7%)"></i>
<i style="left:130px;background:linear-gradient(#655b73 0.3%,#665a75 46.4%,#705486 53.6%,#7b5193 64.0%,#76528d 70.1%,#815096 72.3%,#7b5192 77.2%,#835097 79.9%,#7e5096 84.9%,#964f99 88.7%,#78528f 94.2%,#994f9a 99.7%)"></i>
<i style="left:132px;background:linear-gradient(#655b73 0.3%,#655b73 40.9%,#76538d 60.7%,#74538b 69.5%,#865097 76.1%,#7f5096 84.9%,#a04e9b 89.8%,#8f4f98 99.7%)"></i>
<i style="left:134px;background:linear-gradient(#655b73 0.3%,#655b73 40.4%,#6c5780 48.6%,#6a587c 53.0%,#6f5585 55.2%,#76538d 61.3%,#73538a 66.8%,#a14e9b 79.9%,#8c4f98 92.6%,#a74e9c 97.5%,#9d4f9a 99.7%)"></i>
<i style="left:136px;background:linear-gradient(#655b73 0.3%,#655b73 40.9%,#685979 49.2%,#715488 54.7%,#6c5680 60.2%,#78528f 64.0%,#7c5193 72.8%,#a74e9c 78.3%,#9b4f9a 79.9%,#9a4f9a 88.7%,#7c5194 93.7%,#ae4e98 98.1%,#aa4e9a 99.7%)"></i>
<i style="left:138px;background:linear-gradient(#655b73 0.3%,#655b73 48.6%,#6e5583 53.0%,#6c577f 58.5%,#75538c 63.5%,#75538c 69.5%,#8f4f98 76.1%,#875097 81.0%,#a74e9c 85.4%,#a84e9c 88.2%,#875097 93.1%,#8f4f98 99.7%)"></i>
<i style="left:140px;background:linear-gradient(#655b73 0.3%,#655b73 40.4%,#76538d 68.4%,#825097 70.6%,#7c5194 75.0%,#8f4f98 79.4%,#865097 90.4%,#954f99 94.2%,#8a4f98 99.7%)"></i>
<i style="left:142px;background:linear-gradient(#655b73 0.3%,#655b73 41.5%,#6b577e 47.0%,#6a587d 51.4%,#715488 60.2%,#7e5095 65.1%,#795290 67.9%,#875097 72.8%,#855097 76.1%,#75538b 89.3%,#7d5095 99.7%)"></i>
<i style="left:144px;background:linear-gradient(#655b73 0.3%,#655b73 42.0%,#675a76 44.8%,#6c5680 47.0%,#69587b 51.4%,#78528f 60.7%,#76528d 72.8%,#7e5096 76.1%,#78528f 84.9%,#8c4f98 99.7%)"></i>
<i style="left:146px;background:linear-gradient(#655b73 0.3%,#655b73 42.0%,#69587a 50.3%,#76528d 56.9%,#6d5583 61.8%,#805096 71.2%,#7b5193 77.2%,#835097 79.9%,#7a5191 84.3%,#805096 87.1%,#885097 99.7%)"></i>
<i style="left:148px;background:linear-gradient(#655b73 0.3%,#655b73 40.9%,#73538a 55.8%,#705486 62.9%,#805096 67.9%,#865097 70.6%,#7a5192 83.8%,#8b4f98 90.9%,#7b5193 95.9%,#8b4f98 99.7%)"></i>
<i style="left:150px;background:linear-gradient(#655b73 0.3%,#655b73 42.0%,#6c577f 53.0%,#795290 61.3%,#74538b 66.2%,#8f4f98 73.9%,#805096 76.1%,#904f99 82.1%,#805096 88.2%,#ab4e9a 99.7%)"></i>
<i style="left:152px;background:linear-gradient(#655b73 0.3%,#655b73 43.7%,#6c5681 54.1%,#6c5780 57.4%,#74538b 61.3%,#78528f 72.3%,#8f4f98 75.0%,#9a4f9a 77.7%,#9d4f9a 86.5%,#8e4f98 91.5%,#bd4e8c 98.1%,#b84e90 99.7%)"></i>
<i style="left:154px;background:linear-gradient(#655b73 0.3%,#655b73 42.6%,#6c5681 50.8%,#6d5681 59.6%,#77528f 65.1%,#705486 71.7%,#8b4f98 75.5%,#7d5094 79.4%,#944f99 81.6%,#984f9a 84.3%,#7f5096 90.9%,#aa4e9a 99.7%)"></i>
<i style="left:156px;background:linear-gradient(#655b73 0.3%,#655b73 41.5%,#6d5583 51.9%,#6b577f 58.0%,#77528e 63.5%,#715487 69.0%,#76528d 71.7%,#924f99 73.4%,#924f99 75.5%,#7d5095 77.2%,#7a5192 79.9%,#8e4f98 82.1%,#805096 87.1%,#a24e9b 92.6%,#8f4f98 97.0%,#ab4e9a 99.7%)"></i>
<i class="h" style="left:158px;background:linear-gradient(#e5555e 1.3%,#dc5071 9.0%,#e95755 24.4%,#e6555c 47.4%,#f3694a 52.6%,#fed684 60.3%,#ffea96 65.4%,#fec979 78.2%,#ffdb88 91.0%,#fb9c5a 96.2%,#fba15e 98.7%)"></i>
<i class="h" style="left:160px;background:linear-gradient(#c24e89 1.3%,#e45460 19.2%,#de516d 42.3%,#ffde8b 65.4%,#fdb36a 73.1%,#ffe390 78.2%,#ffe692 98.7%)"></i>
<i class="h" style="left:162px;background:linear-gradient(#b94e90 1.3%,#ba4e8f 16.7%,#d44e7c 32.1%,#c94e84 42.3%,#fcae66 60.3%,#fdb46b 62.8%,#f77c4d 67.9%,#fed685 78.2%,#fed786 98.7%)"></i>
<i class="h" style="left:164px;background:linear-gradient(#b64e92 1.3%,#a34e9b 9.0%,#b14e95 26.9%,#e15366 42.3%,#f6784d 47.4%,#fecc7b 57.7%,#fdbd71 65.4%,#f77f4e 70.5%,#ffe28f 78.2%,#fb9757 91.0%,#fdb56b 98.7%)"></i>
<i class="h" style="left:166px;background:linear-gradient(#b74e91 1.3%,#d64e7b 21.8%,#c14e8a 39.7%,#ee594c 55.1%,#fcaf68 62.8%,#fa8f52 70.5%,#fec677 75.6%,#fec274 88.5%,#ffe895 98.7%)"></i>
<i class="h" style="left:168px;background:linear-gradient(#cb4e82 1.3%,#c04e8b 39.7%,#f5744c 52.6%,#f6764c 60.3%,#ffdb89 65.4%,#fcad66 73.1%,#ffdd8a 78.2%,#ffea96 98.7%)"></i>
<i class="h" style="left:170px;background:linear-gradient(#c24e89 1.3%,#ad4e98 39.7%,#d14e7e 47.4%,#fa8c50 57.7%,#fca762 65.4%,#ffdc89 70.5%,#ffe894 98.7%)"></i>
<i class="h" style="left:172px;background:linear-gradient(#bc4e8d 1.3%,#d94f77 11.5%,#c44e88 34.6%,#fcab65 57.7%,#ffe793 70.5%,#ffe18e 80.8%,#fca762 85.9%,#fecd7d 93.6%,#fec576 98.7%)"></i>
<i class="h" style="left:174px;background:linear-gradient(#d24e7d 1.3%,#d94f76 11.5%,#984f9a 26.9%,#984f9a 34.6%,#f5734c 50.0%,#f9884f 60.3%,#fed785 67.9%,#ffe592 75.6%,#f9874f 88.5%,#fec878 93.6%,#fdba6f 98.7%)"></i>
<i class="h" style="left:176px;background:linear-gradient(#a94e9b 1.3%,#934f99 21.8%,#a34e9b 37.2%,#ec5850 65.4%,#ef5a4a 78.2%,#e45461 88.5%,#f6784d 98.7%)"></i>
<i class="h" style="left:178px;background:linear-gradient(#a94e9b 1.3%,#9b4f9a 24.4%,#a24e9b 34.6%,#c34e88 44.9%,#af4e97 52.6%,#b94e90 62.8%,#914f99 80.8%,#d54e7c 98.7%)"></i>
<i class="h" style="left:180px;background:linear-gradient(#a64e9c 1.3%,#845097 32.1%,#a84e9c 65.4%,#a44e9b 80.8%,#cc4e82 98.7%)"></i>
<i class="h" style="left:182px;background:linear-gradient(#904f99 1.3%,#7b5192 14.1%,#934f99 32.1%,#865097 44.9%,#ba4e8f 98.7%)"></i>
<i class="h" style="left:184px;background:linear-gradient(#7c5094 1.3%,#845097 24.4%,#73538a 47.4%,#815096 75.6%,#994f9a 80.8%,#c64e86 98.7%)"></i>
<i class="h" style="left:186px;background:linear-gradient(#7f5096 1.3%,#8f4f98 24.4%,#7b5192 52.6%,#865097 78.2%,#b74e91 98.7%)"></i>
<i class="h" style="left:188px;background:linear-gradient(#904f99 1.3%,#964f99 37.2%,#7b5193 50.0%,#7a5191 62.8%,#825097 67.9%,#e25365 83.3%,#f46c4b 98.7%)"></i>
<i class="h" style="left:190px;background:linear-gradient(#8d4f98 1.3%,#944f99 11.5%,#7f5096 21.8%,#805096 37.2%,#964f99 65.4%,#9f4e9b 67.9%,#fb9758 78.2%,#fecd7d 98.7%)"></i>
<i class="h" style="left:192px;background:linear-gradient(#894f98 1.3%,#9c4f9a 16.7%,#845097 39.7%,#964f99 67.9%,#a44e9b 70.5%,#f46d4b 78.2%,#fcaa64 83.3%,#fdb46a 98.7%)"></i>
<i class="h" style="left:194px;background:linear-gradient(#af4e97 1.3%,#825097 24.4%,#b04e96 44.9%,#9c4f9a 67.9%,#a44e9b 70.5%,#f46d4b 78.2%,#fed583 85.9%,#ffe794 91.0%,#fecd7c 98.7%)"></i>
<i class="h" style="left:196px;background:linear-gradient(#a34e9b 1.3%,#ad4e99 9.0%,#924f99 26.9%,#9c4f9a 37.2%,#c84e85 57.7%,#cf4e80 70.5%,#f26249 78.2%,#f2644a 83.3%,#fca963 88.5%,#fb9f5d 98.7%)"></i>
<i class="h" style="left:198px;background:linear-gradient(#885097 1.3%,#994f9a 9.0%,#9a4f9a 24.4%,#835097 37.2%,#a24e9b 55.1%,#9b4f9a 67.9%,#a34e9b 70.5%,#fecf7e 85.9%,#ffe692 98.7%)"></i>
<i class="h" style="left:200px;background:linear-gradient(#8e4f98 1.3%,#865097 19.2%,#9e4e9b 34.6%,#8c4f98 62.8%,#9e4e9b 67.9%,#f26249 75.6%,#fcad66 83.3%,#fed281 98.7%)"></i>
<i class="h" style="left:202px;background:linear-gradient(#885097 1.3%,#894f98 19.2%,#a14e9b 32.1%,#9f4e9b 52.6%,#ca4e83 65.4%,#fed886 75.6%,#feca7a 98.7%)"></i>
<i class="h" style="left:204px;background:linear-gradient(#b04e96 1.3%,#9a4f9a 21.8%,#a84e9c 52.6%,#c04e8a 62.8%,#fcaa64 73.1%,#fed785 78.2%,#fed685 98.7%)"></i>
<i class="h" style="left:206px;background:linear-gradient(#cc4e82 1.3%,#e05268 14.1%,#ba4e8f 34.6%,#bc4e8d 52.6%,#fed381 80.8%,#fec778 98.7%)"></i>
<i class="h" style="left:208px;background:linear-gradient(#ed594d 1.3%,#f67a4d 9.0%,#e95755 16.7%,#e85659 24.4%,#d24e7e 29.5%,#d94f76 39.7%,#f46e4b 55.1%,#fdbe71 62.8%,#fcab64 75.6%,#fed685 98.7%)"></i>
<i class="h" style="left:210px;background:linear-gradient(#bf4e8b 1.3%,#da4f74 9.0%,#db5072 19.2%,#c24e89 29.5%,#bf4e8b 42.3%,#d14e7f 55.1%,#f05a48 65.4%,#f05a48 98.7%)"></i>
<i class="h" style="left:212px;background:linear-gradient(#934f99 1.3%,#b24e95 11.5%,#9c4f9a 50.0%,#c64e86 67.9%,#cf4e80 98.7%)"></i>
<i class="h" style="left:214px;background:linear-gradient(#a84e9c 1.3%,#a94e9b 39.7%,#9c4f9a 47.4%,#de516c 67.9%,#e05268 88.5%,#f05c48 98.7%)"></i>
<i class="h" style="left:216px;background:linear-gradient(#9b4f9a 1.3%,#984f9a 44.9%,#a34e9b 47.4%,#f05a48 55.1%,#fec274 73.1%,#fec576 75.6%,#f6794d 80.8%,#fed483 88.5%,#fecf7e 98.7%)"></i>
<i class="h" style="left:218px;background:linear-gradient(#7f5096 1.3%,#904f99 19.2%,#835097 29.5%,#964f99 47.4%,#dd516d 55.1%,#f3694a 65.4%,#ffea96 78.2%,#fdbb6f 98.7%)"></i>
<i class="h" style="left:220px;background:linear-gradient(#8f4f98 1.3%,#ae4e98 16.7%,#9b4f9a 32.1%,#9d4f9a 47.4%,#e45460 55.1%,#f6794d 62.8%,#f8844f 65.4%,#f46c4b 70.5%,#ffe491 78.2%,#fed382 98.7%)"></i>
<i class="h" style="left:222px;background:linear-gradient(#a04e9b 1.3%,#b04e96 24.4%,#934f99 44.9%,#9a4f9a 47.4%,#f5724c 57.7%,#ffe18e 75.6%,#ffe693 88.5%,#fdb76d 93.6%,#fed583 98.7%)"></i>
<i class="h" style="left:224px;background:linear-gradient(#9a4f9a 1.3%,#954f99 29.5%,#a04e9b 50.0%,#b64e92 57.7%,#ae4e98 67.9%,#c34e88 83.3%,#f05c48 93.6%,#f05b48 98.7%)"></i>
<i class="h" style="left:226px;background:linear-gradient(#944f99 1.3%,#a64e9c 24.4%,#904f99 47.4%,#bc4e8d 57.7%,#be4e8c 80.8%,#d84e79 85.9%,#f8804e 93.6%,#fa8c50 98.7%)"></i>
<i class="h" style="left:228px;background:linear-gradient(#954f99 1.3%,#8b4f98 16.7%,#b84e91 39.7%,#a44e9b 50.0%,#c54e87 57.7%,#a44e9b 83.3%,#eb5753 93.6%,#f2664a 98.7%)"></i>
<i class="h" style="left:230px;background:linear-gradient(#964f99 1.3%,#a84e9c 32.1%,#d04e7f 47.4%,#af4e97 70.5%,#c74e86 78.2%,#be4e8c 83.3%,#e7565a 91.0%,#f15d48 98.7%)"></i>
<i class="h" style="left:232px;background:linear-gradient(#b04e96 1.3%,#b94e90 9.0%,#a24e9b 19.2%,#c54e87 55.1%,#f15e49 73.1%,#ffe592 88.5%,#ffe794 98.7%)"></i>
<i class="h" style="left:234px;background:linear-gradient(#a94e9b 1.3%,#c64e86 21.8%,#9f4e9b 39.7%,#9a4f9a 57.7%,#af4e97 62.8%,#ef5a4a 70.5%,#eb5852 83.3%,#f9874f 91.0%,#f8824e 98.7%)"></i>
<i class="h" style="left:236px;background:linear-gradient(#9e4e9b 1.3%,#984f9a 83.3%,#b54e92 98.7%)"></i>
<i class="h" style="left:238px;background:linear-gradient(#984f9a 1.3%,#964f99 37.2%,#cc4e82 60.3%,#bb4e8e 67.9%,#c54e87 98.7%)"></i>
<i class="h" style="left:240px;background:linear-gradient(#ac4e99 1.3%,#a14e9b 21.8%,#c44e87 47.4%,#b74e91 67.9%,#e15365 85.9%,#dd516d 98.7%)"></i>
<i class="h" style="left:242px;background:linear-gradient(#fdb36a 1.3%,#ffe592 11.5%,#ffdd8a 21.8%,#f9874f 29.5%,#f6774d 34.6%,#fa9254 39.7%,#f8824e 47.4%,#fece7d 55.1%,#fed07f 57.7%,#f9884f 62.8%,#ffea96 91.0%,#ffea96 98.7%)"></i>
<i class="h" style="left:244px;background:linear-gradient(#f3694a 1.3%,#ec5850 6.4%,#fcb068 21.8%,#f3694a 42.3%,#ffe18e 60.3%,#fed482 98.7%)"></i>
<i class="h" style="left:246px;background:linear-gradient(#f6764c 1.3%,#f36a4b 11.5%,#ffe491 24.4%,#ffe692 26.9%,#fcad66 34.6%,#f8844f 37.2%,#e5555f 39.7%,#da5073 42.3%,#f46e4b 47.4%,#f77c4d 57.7%,#fdbd71 62.8%,#ffe08e 70.5%,#ffe793 78.2%,#fdbe71 85.9%,#fec777 98.7%)"></i>
<i class="h" style="left:248px;background:linear-gradient(#c44e88 1.3%,#e95756 24.4%,#d34e7d 47.4%,#db5072 57.7%,#f15f49 70.5%,#fcad66 78.2%,#fdbf72 88.5%,#fb9e5c 98.7%)"></i>
<i class="h" style="left:250px;background:linear-gradient(#cc4e82 1.3%,#c64e86 19.2%,#f05a48 34.6%,#f15e49 57.7%,#ffdc89 75.6%,#fece7d 83.3%,#ffe18e 88.5%,#fec475 98.7%)"></i>
<i class="h" style="left:252px;background:linear-gradient(#f16149 1.3%,#eb5753 24.4%,#f5714c 34.6%,#ef5a4a 42.3%,#f3694a 57.7%,#fed786 67.9%,#ffe894 73.1%,#fec677 83.3%,#ffea96 91.0%,#fb9a59 98.7%)"></i>
<i class="h" style="left:254px;background:linear-gradient(#b14e95 1.3%,#b84e91 32.1%,#dd516f 42.3%,#fcac65 52.6%,#fb9958 73.1%,#f6774d 78.2%,#fed483 85.9%,#ffe390 91.0%,#fcb068 98.7%)"></i>
<i class="h" style="left:256px;background:linear-gradient(#ad4e98 1.3%,#ce4e81 19.2%,#b44e93 29.5%,#b74e91 39.7%,#ea5754 50.0%,#fdb46a 57.7%,#fed382 67.9%,#fec274 78.2%,#ffea96 85.9%,#fed281 98.7%)"></i>
<i class="h" style="left:258px;background:linear-gradient(#ca4e83 1.3%,#db5071 16.7%,#bf4e8b 39.7%,#d04e7f 50.0%,#f5734c 62.8%,#ffe592 73.1%,#ffe794 88.5%,#fecc7c 93.6%,#ffd987 98.7%)"></i>
<i class="h" style="left:260px;background:linear-gradient(#c44e88 1.3%,#ba4e8f 14.1%,#d14e7f 21.8%,#c04e8b 29.5%,#d24e7d 42.3%,#ef594a 52.6%,#f15d48 62.8%,#fecb7b 73.1%,#fdb56b 78.2%,#ffea96 88.5%,#ffe490 98.7%)"></i>
<i class="h" style="left:262px;background:linear-gradient(#b34e94 1.3%,#dc516f 21.8%,#d34e7d 37.2%,#f5744c 57.7%,#f46d4b 65.4%,#ffda88 73.1%,#ffea96 98.7%)"></i>
<i class="h" style="left:264px;background:linear-gradient(#c34e88 1.3%,#ca4e84 42.3%,#db5072 55.1%,#e5555d 62.8%,#fa8a50 70.5%,#f9884f 80.8%,#fdba6f 85.9%,#ffe491 98.7%)"></i>
<i class="h" style="left:266px;background:linear-gradient(#bc4e8e 1.3%,#d74e7a 32.1%,#c34e88 39.7%,#e25463 47.4%,#f16049 62.8%,#fed583 73.1%,#fec677 78.2%,#ffe28f 85.9%,#ffdf8d 98.7%)"></i>
<i class="h" style="left:268px;background:linear-gradient(#c64e86 1.3%,#db5072 19.2%,#d24e7d 39.7%,#e5555d 47.4%,#dc516f 57.7%,#f5744c 67.9%,#ffe18e 75.6%,#ffea96 98.7%)"></i>
<i class="h" style="left:270px;background:linear-gradient(#c44e87 1.3%,#d84e78 16.7%,#c44e88 39.7%,#dd516d 50.0%,#d64e7b 62.8%,#fca963 73.1%,#fed886 91.0%,#fec576 98.7%)"></i>
<i class="h" style="left:272px;background:linear-gradient(#d24e7d 1.3%,#b34e94 32.1%,#c54e87 44.9%,#e15366 52.6%,#c54e87 62.8%,#fcad66 83.3%,#ffe491 98.7%)"></i>
<i class="h" style="left:274px;background:linear-gradient(#c44e88 1.3%,#e95657 16.7%,#c94e84 39.7%,#e5555d 52.6%,#ca4e83 60.3%,#dc5070 65.4%,#f46f4b 70.5%,#e95756 75.6%,#fdbc70 83.3%,#ffe08d 98.7%)"></i>
<i class="h" style="left:276px;background:linear-gradient(#c54e87 1.3%,#cb4e83 14.1%,#ec5850 21.8%,#ee594b 37.2%,#f4704c 42.3%,#e5555f 62.8%,#fdbd71 73.1%,#ffdf8c 78.2%,#ffe491 85.9%,#fecb7a 91.0%,#ffe591 98.7%)"></i>
<i class="h" style="left:278px;background:linear-gradient(#cf4e80 1.3%,#a44e9b 14.1%,#ec5851 21.8%,#e15367 26.9%,#f5714c 39.7%,#ec5850 60.3%,#fca561 67.9%,#fdc073 73.1%,#fa8d51 85.9%,#fba05d 91.0%,#f5734c 98.7%)"></i>
<i class="h" style="left:280px;background:linear-gradient(#b64e92 1.3%,#aa4e9a 11.5%,#f15e49 37.2%,#e7565a 60.3%,#ed584f 62.8%,#fecd7c 70.5%,#fec777 73.1%,#f16149 78.2%,#fa8b50 83.3%,#fca662 91.0%,#f8804e 98.7%)"></i>
<i class="h" style="left:282px;background:linear-gradient(#c14e8a 1.3%,#a34e9b 24.4%,#b84e91 42.3%,#d94f77 50.0%,#d14e7e 60.3%,#fdbf72 75.6%,#fece7d 85.9%,#fcb169 91.0%,#ffdb89 98.7%)"></i>
<i class="h" style="left:284px;background:linear-gradient(#da4f74 1.3%,#d64e7b 11.5%,#9d4f9a 29.5%,#ab4e9a 42.3%,#e05269 50.0%,#e25364 62.8%,#fdbb6f 78.2%,#fa9355 85.9%,#fca561 98.7%)"></i>
<i class="h" style="left:286px;background:linear-gradient(#964f99 1.3%,#a24e9b 11.5%,#964f99 34.6%,#b84e90 60.3%,#f2644a 78.2%,#e75659 85.9%,#f5734c 91.0%,#f5724c 98.7%)"></i>
<i class="h" style="left:288px;background:linear-gradient(#a14e9b 1.3%,#a74e9c 19.2%,#9a4f9a 29.5%,#aa4e9a 34.6%,#b44e93 50.0%,#a54e9c 60.3%,#d94f75 80.8%,#c84e85 88.5%,#cf4e80 98.7%)"></i>
<i class="h" style="left:290px;background:linear-gradient(#ac4e99 1.3%,#924f99 26.9%,#a84e9c 37.2%,#b24e95 60.3%,#c74e86 65.4%,#c04e8b 83.3%,#a94e9b 88.5%,#b34e94 98.7%)"></i>
<i class="h" style="left:292px;background:linear-gradient(#805096 1.3%,#7b5192 14.1%,#8c4f98 44.9%,#a04e9b 60.3%,#e7565a 70.5%,#e15366 80.8%,#f05c48 88.5%,#eb5852 98.7%)"></i>
<i class="h" style="left:294px;background:linear-gradient(#7b5193 1.3%,#914f99 21.8%,#9a4f9a 57.7%,#a04e9b 60.3%,#c14e8a 62.8%,#fa9154 67.9%,#fec576 70.5%,#fdb56b 75.6%,#ffe18e 80.8%,#ffe390 85.9%,#fdb66c 96.2%,#fec374 98.7%)"></i>
<i class="h" style="left:296px;background:linear-gradient(#954f99 1.3%,#a34e9b 19.2%,#885097 47.4%,#964f99 65.4%,#cd4e81 80.8%,#cd4e81 98.7%)"></i>
<i class="h" style="left:298px;background:linear-gradient(#994f9a 1.3%,#984f9a 42.3%,#855097 65.4%,#bd4e8d 98.7%)"></i>
<i class="h" style="left:300px;background:linear-gradient(#934f99 1.3%,#a04e9b 19.2%,#914f99 42.3%,#a54e9c 52.6%,#984f9a 73.1%,#af4e97 85.9%,#af4e97 98.7%)"></i>
<i class="h" style="left:302px;background:linear-gradient(#7e5096 1.3%,#9b4f9a 62.8%,#8e4f98 73.1%,#c04e8b 98.7%)"></i>
<i class="h" style="left:304px;background:linear-gradient(#964f99 1.3%,#835097 24.4%,#ba4e8f 98.7%)"></i>
<i class="h" style="left:306px;background:linear-gradient(#825097 1.3%,#7d5095 11.5%,#a04e9b 34.6%,#8e4f98 47.4%,#e4545f 60.3%,#fece7e 80.8%,#fdba6f 98.7%)"></i>
<i class="h" style="left:308px;background:linear-gradient(#964f99 1.3%,#a74e9c 34.6%,#9b4f9a 44.9%,#a54e9c 47.4%,#f5754c 55.1%,#ffe894 70.5%,#fecb7a 83.3%,#ffe18e 98.7%)"></i>
<i class="h" style="left:310px;background:linear-gradient(#904f99 1.3%,#974f9a 26.9%,#8a4f98 47.4%,#ce4e80 55.1%,#dc5070 60.3%,#f5754c 65.4%,#fa8e51 70.5%,#ed584e 78.2%,#ea5754 91.0%,#d14e7e 96.2%,#dc516f 98.7%)"></i>
<i class="h" style="left:312px;background:linear-gradient(#8a4f98 1.3%,#7d5095 37.2%,#954f99 44.9%,#b74e91 73.1%,#934f99 88.5%,#924f99 98.7%)"></i>
<i class="h" style="left:314px;background:linear-gradient(#7d5095 1.3%,#8c4f98 14.1%,#7d5095 37.2%,#944f99 44.9%,#9c4f9a 57.7%,#8e4f98 83.3%,#ab4e9a 98.7%)"></i>
<i class="h" style="left:316px;background:linear-gradient(#904f99 1.3%,#805096 26.9%,#904f99 47.4%,#9e4e9b 50.0%,#f3694a 57.7%,#fcab65 65.4%,#fdb269 75.6%,#f6784d 83.3%,#fb9e5c 91.0%,#fb9e5c 98.7%)"></i>
<i class="h" style="left:318px;background:linear-gradient(#8f4f98 1.3%,#7d5095 50.0%,#944f99 55.1%,#db5072 62.8%,#d64e7b 73.1%,#ec584f 78.2%,#e6555b 85.9%,#f26249 93.6%,#e6555c 98.7%)"></i>
<i class="h" style="left:320px;background:linear-gradient(#a34e9b 1.3%,#a94e9b 16.7%,#894f98 50.0%,#c04e8a 78.2%,#c84e85 98.7%)"></i>
<i class="h" style="left:322px;background:linear-gradient(#f6784d 1.3%,#f3694a 9.0%,#fdbb6f 16.7%,#fed382 24.4%,#fb9b5a 37.2%,#ef594b 42.3%,#e7565a 47.4%,#fcb068 62.8%,#fba15e 67.9%,#feca7a 78.2%,#fca762 85.9%,#fcab65 98.7%)"></i>
<i class="h" style="left:324px;background:linear-gradient(#f5714c 1.3%,#ffe995 19.2%,#ffde8c 26.9%,#fdb46a 32.1%,#fed684 39.7%,#f5724c 52.6%,#ffe793 65.4%,#fec777 91.0%,#fed482 98.7%)"></i>
<i class="h" style="left:326px;background:linear-gradient(#e45460 1.3%,#ee594c 11.5%,#fecb7b 21.8%,#ffdc8a 29.5%,#f05c48 50.0%,#f2644a 57.7%,#ffe995 70.5%,#fdbf72 83.3%,#fdbf72 98.7%)"></i>
<i class="h" style="left:328px;background:linear-gradient(#e6555b 1.3%,#f16149 16.7%,#fdbe71 24.4%,#fa9153 34.6%,#fca964 47.4%,#f77d4e 52.6%,#fcac65 65.4%,#f8804e 70.5%,#ffe08d 78.2%,#fdbc70 85.9%,#ffea96 93.6%,#ffe692 98.7%)"></i>
<i class="h" style="left:330px;background:linear-gradient(#ed584e 1.3%,#ef594b 9.0%,#fec878 16.7%,#ffe08d 21.8%,#f05a49 50.0%,#f05b48 57.7%,#fb9f5d 67.9%,#fb9f5d 75.6%,#f46d4b 83.3%,#fecb7b 93.6%,#fed281 98.7%)"></i>
<i class="h" style="left:332px;background:linear-gradient(#994f9a 1.3%,#af4e97 26.9%,#9e4e9b 34.6%,#b44e94 98.7%)"></i>
<i class="h" style="left:334px;background:linear-gradient(#964f99 1.3%,#8b4f98 19.2%,#d14e7e 26.9%,#d84e78 29.5%,#f2634a 52.6%,#e6555b 70.5%,#f77d4e 78.2%,#f6764d 88.5%,#fca561 93.6%,#fcb169 98.7%)"></i>
<i class="h" style="left:336px;background:linear-gradient(#885097 1.3%,#8c4f98 16.7%,#ed584f 24.4%,#f3674a 26.9%,#f6774d 47.4%,#e6555c 55.1%,#ffe591 80.8%,#ffea96 98.7%)"></i>
<i class="h" style="left:338px;background:linear-gradient(#934f99 1.3%,#914f99 14.1%,#994f9a 16.7%,#d44e7c 21.8%,#e5555f 26.9%,#f2634a 47.4%,#e5555f 62.8%,#ee594c 70.5%,#fdb96e 78.2%,#fed180 98.7%)"></i>
<i class="h" style="left:340px;background:linear-gradient(#9b4f9a 1.3%,#9a4f9a 24.4%,#ba4e8f 44.9%,#a94e9b 62.8%,#c94e84 85.9%,#c24e89 98.7%)"></i>
<i class="h" style="left:342px;background:linear-gradient(#d54e7b 1.3%,#b24e95 26.9%,#cd4e81 52.6%,#b34e94 60.3%,#d74e7a 98.7%)"></i>
<i class="h" style="left:344px;background:linear-gradient(#e15365 1.3%,#e25364 16.7%,#c44e88 24.4%,#a54e9c 60.3%,#c84e85 70.5%,#cc4e82 98.7%)"></i>
<i class="h" style="left:346px;background:linear-gradient(#b24e95 1.3%,#c34e89 16.7%,#a24e9b 42.3%,#a24e9b 60.3%,#c84e85 70.5%,#d54e7b 98.7%)"></i>
<i class="h" style="left:348px;background:linear-gradient(#7a5192 1.3%,#7f5096 55.1%,#c24e89 83.3%,#b84e90 98.7%)"></i>
<i class="h" style="left:350px;background:linear-gradient(#74538b 1.3%,#825097 57.7%,#a04e9b 73.1%,#b84e90 98.7%)"></i>
<i class="h" style="left:352px;background:linear-gradient(#7c5194 1.3%,#7b5193 50.0%,#ca4e83 73.1%,#d14e7e 98.7%)"></i>
<i class="h" style="left:354px;background:linear-gradient(#865097 1.3%,#76528d 37.2%,#785290 52.6%,#a04e9b 67.9%,#d04e7f 98.7%)"></i>
<i class="h" style="left:356px;background:linear-gradient(#77528e 1.3%,#75538c 55.1%,#a94e9b 85.9%,#b24e95 98.7%)"></i>
<i class="h" style="left:358px;background:linear-gradient(#7b5193 1.3%,#7c5194 57.7%,#d84e79 88.5%,#cb4e83 98.7%)"></i>
<i class="h" style="left:360px;background:linear-gradient(#7c5194 1.3%,#845097 26.9%,#7b5193 62.8%,#c84e85 98.7%)"></i>
<i class="h" style="left:362px;background:linear-gradient(#795290 1.3%,#9d4f9a 26.9%,#7c5194 50.0%,#b34e94 70.5%,#984f9a 85.9%,#a94e9b 98.7%)"></i>
<i class="h" style="left:364px;background:linear-gradient(#795191 1.3%,#815096 11.5%,#795291 37.2%,#c94e84 67.9%,#ba4e8f 98.7%)"></i>
<i class="h" style="left:366px;background:linear-gradient(#8e4f98 1.3%,#7e5096 24.4%,#875097 52.6%,#c14e8a 70.5%,#ad4e98 85.9%,#c64e86 98.7%)"></i>
<i class="h" style="left:368px;background:linear-gradient(#855097 1.3%,#924f99 37.2%,#894f98 57.7%,#b34e94 67.9%,#ca4e83 85.9%,#e85657 98.7%)"></i>
<i class="h" style="left:370px;background:linear-gradient(#825097 1.3%,#795290 34.6%,#7c5094 47.4%,#9d4f9a 62.8%,#984f9a 75.6%,#e95756 98.7%)"></i>
<i class="h" style="left:372px;background:linear-gradient(#7d5094 1.3%,#8d4f98 24.4%,#7e5096 44.9%,#af4e97 60.3%,#d24e7d 83.3%,#cb4e82 98.7%)"></i>
<i class="h" style="left:374px;background:linear-gradient(#805096 1.3%,#795191 44.9%,#c14e8a 78.2%,#b14e95 98.7%)"></i>
<i class="h" style="left:376px;background:linear-gradient(#77528e 1.3%,#875097 32.1%,#795290 55.1%,#d64e7a 88.5%,#dc5070 98.7%)"></i>
<i class="h" style="left:378px;background:linear-gradient(#725488 1.3%,#725488 19.2%,#805096 42.3%,#815096 60.3%,#b84e90 98.7%)"></i>
<i class="h" style="left:380px;background:linear-gradient(#705487 1.3%,#7a5191 32.1%,#77528e 47.4%,#b24e95 98.7%)"></i>
<i class="h" style="left:382px;background:linear-gradient(#76528d 1.3%,#7d5095 34.6%,#7a5192 44.9%,#aa4e9a 78.2%,#9a4f9a 98.7%)"></i>
<i class="h" style="left:384px;background:linear-gradient(#715487 1.3%,#725488 32.1%,#9b4f9a 67.9%,#a24e9b 98.7%)"></i>
<i class="h" style="left:386px;background:linear-gradient(#77528e 1.3%,#76528d 47.4%,#9a4f9a 67.9%,#914f99 75.6%,#b24e95 98.7%)"></i>
<i class="h" style="left:388px;background:linear-gradient(#795290 1.3%,#78528f 34.6%,#865097 50.0%,#7d5095 62.8%,#ac4e99 83.3%,#ac4e99 98.7%)"></i>
<i class="h" style="left:390px;background:linear-gradient(#6f5585 1.3%,#74538a 39.7%,#8a4f98 73.1%,#a74e9c 83.3%,#ac4e99 98.7%)"></i>
<i class="h" style="left:392px;background:linear-gradient(#6f5585 1.3%,#7b5193 44.9%,#9f4e9b 62.8%,#845097 75.6%,#894f98 83.3%,#b54e93 98.7%)"></i>
<i class="h" style="left:394px;background:linear-gradient(#7a5192 1.3%,#77528f 16.7%,#9e4e9b 62.8%,#994f9a 73.1%,#d64e7b 98.7%)"></i>
<i class="h" style="left:396px;background:linear-gradient(#8b4f98 1.3%,#964f99 19.2%,#8a4f98 37.2%,#934f99 47.4%,#ce4e81 60.3%,#c34e88 73.1%,#e25364 98.7%)"></i>
<i class="h" style="left:398px;background:linear-gradient(#7b5192 1.3%,#7a5192 9.0%,#964f99 26.9%,#7a5191 50.0%,#ab4e99 62.8%,#d84e78 78.2%,#bd4e8d 98.7%)"></i>
<i class="h" style="left:400px;background:linear-gradient(#75538c 1.3%,#715487 9.0%,#855097 32.1%,#75538c 55.1%,#815096 65.4%,#b44e93 75.6%,#ba4e8f 83.3%,#dc516f 91.0%,#dd516d 98.7%)"></i>
<i class="h" style="left:402px;background:linear-gradient(#76538d 1.3%,#7e5096 55.1%,#b04e96 75.6%,#ab4e9a 83.3%,#da4f75 93.6%,#d94f77 98.7%)"></i>
<i class="h" style="left:404px;background:linear-gradient(#865097 1.3%,#8e4f98 26.9%,#7e5096 50.0%,#ae4e98 62.8%,#cf4e80 75.6%,#c34e89 83.3%,#db5073 91.0%,#d94f76 98.7%)"></i>
<i class="h" style="left:406px;background:linear-gradient(#7b5193 1.3%,#7b5192 14.1%,#9b4f9a 29.5%,#7b5193 50.0%,#8f4f98 60.3%,#d44e7c 73.1%,#df526a 98.7%)"></i>
<i class="h" style="left:408px;background:linear-gradient(#805096 1.3%,#815096 26.9%,#74538b 52.6%,#944f99 65.4%,#a44e9b 75.6%,#994f9a 83.3%,#c44e88 91.0%,#ce4e81 98.7%)"></i>
<i class="h" style="left:410px;background:linear-gradient(#795290 1.3%,#77528e 19.2%,#855097 42.3%,#7c5194 55.1%,#9e4e9b 80.8%,#d84e78 93.6%,#d94f76 98.7%)"></i>
<i class="h" style="left:412px;background:linear-gradient(#7f5096 1.3%,#795290 21.8%,#7c5194 52.6%,#a14e9b 65.4%,#9c4f9a 85.9%,#d34e7d 98.7%)"></i>
<i class="h" style="left:414px;background:linear-gradient(#8a4f98 1.3%,#795290 52.6%,#ac4e99 65.4%,#c04e8b 75.6%,#f9864f 83.3%,#f9874f 93.6%,#fdb56b 98.7%)"></i>
<i class="h" style="left:416px;background:linear-gradient(#855097 1.3%,#9e4e9b 37.2%,#954f99 70.5%,#a64e9c 75.6%,#fb9e5c 83.3%,#fa8b50 93.6%,#fecd7c 98.7%)"></i>
<i class="h" style="left:418px;background:linear-gradient(#db5072 1.3%,#e6555b 6.4%,#e5555f 24.4%,#d84e79 29.5%,#eb5852 57.7%,#e15367 65.4%,#f5714c 75.6%,#fece7d 83.3%,#fecb7b 98.7%)"></i>
<i class="h" style="left:420px;background:linear-gradient(#f2664a 1.3%,#f5734c 6.4%,#d84f77 21.8%,#d04e7f 29.5%,#fb9455 57.7%,#fca762 75.6%,#ffda88 83.3%,#ffde8c 98.7%)"></i>
<i class="h" style="left:422px;background:linear-gradient(#f46d4b 1.3%,#f36a4b 19.2%,#ffea96 37.2%,#ffe08d 42.3%,#f8824e 47.4%,#f5714c 52.6%,#ffea96 70.5%,#ffe894 80.8%,#f67a4d 93.6%,#f77d4e 98.7%)"></i>
<i class="h" style="left:424px;background:linear-gradient(#ec584f 1.3%,#e5555e 19.2%,#f5734c 26.9%,#fca863 42.3%,#f26249 47.4%,#f16149 60.3%,#fca963 67.9%,#fa9053 73.1%,#ffd987 80.8%,#ffe28f 98.7%)"></i>
<i class="h" style="left:426px;background:linear-gradient(#e05268 1.3%,#e85658 6.4%,#cd4e81 16.7%,#cd4e81 29.5%,#e5555e 42.3%,#ce4e81 52.6%,#e6555c 57.7%,#df526a 65.4%,#f46f4b 78.2%,#f46d4b 83.3%,#fece7d 93.6%,#fed685 98.7%)"></i>
<i class="h" style="left:428px;background:linear-gradient(#d04e7f 1.3%,#da4f75 6.4%,#c04e8b 32.1%,#d94f76 62.8%,#fed180 80.8%,#ffdc8a 98.7%)"></i>
<i class="h" style="left:430px;background:linear-gradient(#cd4e81 1.3%,#cb4e83 9.0%,#e15365 19.2%,#c94e84 47.4%,#d44e7c 62.8%,#fed785 80.8%,#ffdf8c 98.7%)"></i>
<i class="h" style="left:432px;background:linear-gradient(#b54e93 1.3%,#c64e87 11.5%,#ad4e98 29.5%,#bb4e8f 39.7%,#e6555d 65.4%,#ffd987 78.2%,#ffea96 91.0%,#fec476 98.7%)"></i>
<i class="h" style="left:434px;background:linear-gradient(#e05367 1.3%,#b14e96 26.9%,#c64e86 39.7%,#e6555c 50.0%,#d74e79 67.9%,#ffdc8a 85.9%,#fca964 98.7%)"></i>
<i class="h" style="left:436px;background:linear-gradient(#c54e87 1.3%,#af4e97 11.5%,#d14e7f 50.0%,#b64e92 57.7%,#b54e92 65.4%,#d34e7d 70.5%,#f77f4e 78.2%,#fa8e52 85.9%,#fec676 91.0%,#fecd7c 98.7%)"></i>
<i class="h" style="left:438px;background:linear-gradient(#c94e84 1.3%,#b24e94 11.5%,#c74e86 24.4%,#b34e94 60.3%,#ba4e8f 62.8%,#fdbe71 75.6%,#ffe592 91.0%,#fed483 98.7%)"></i>
<i class="h" style="left:440px;background:linear-gradient(#9d4f9a 1.3%,#c24e89 16.7%,#a14e9b 39.7%,#da5073 65.4%,#c64e87 80.8%,#cf4e80 98.7%)"></i>
<i class="h" style="left:442px;background:linear-gradient(#9c4f9a 1.3%,#a64e9c 19.2%,#894f98 34.6%,#c24e8a 60.3%,#b84e90 80.8%,#d84e79 98.7%)"></i>
<i class="h" style="left:444px;background:linear-gradient(#914f99 1.3%,#9a4f9a 14.1%,#894f98 34.6%,#d14e7e 98.7%)"></i>
<i class="h" style="left:446px;background:linear-gradient(#815096 1.3%,#7e5096 21.8%,#9c4f9a 34.6%,#ae4e97 65.4%,#a24e9b 78.2%,#c24e8a 98.7%)"></i>
<i class="h" style="left:448px;background:linear-gradient(#b54e93 1.3%,#924f99 29.5%,#cb4e83 42.3%,#f46c4b 65.4%,#ed594e 78.2%,#da4f75 85.9%,#eb5851 98.7%)"></i>
<i class="h" style="left:450px;background:linear-gradient(#df526b 1.3%,#e25463 29.5%,#fcb168 55.1%,#fdb46a 67.9%,#fa9254 73.1%,#fca460 78.2%,#f46d4b 88.5%,#f6784d 98.7%)"></i>
<i class="h" style="left:452px;background:linear-gradient(#e35462 1.3%,#e95755 19.2%,#ffe18e 55.1%,#f77b4d 65.4%,#f3684a 75.6%,#fec174 83.3%,#fed180 98.7%)"></i>
<i class="h" style="left:454px;background:linear-gradient(#d14e7f 1.3%,#f15d48 26.9%,#fcaa64 34.6%,#ffe894 44.9%,#fec878 52.6%,#ffe390 57.7%,#fed07f 75.6%,#ffe995 85.9%,#f9864f 93.6%,#ffd987 98.7%)"></i>
<i class="h" style="left:456px;background:linear-gradient(#df526b 1.3%,#d74e79 19.2%,#f46d4b 37.2%,#fecf7e 47.4%,#ffdf8d 55.1%,#ffea96 75.6%,#fecc7b 88.5%,#ffe28f 98.7%)"></i>
<i class="h" style="left:458px;background:linear-gradient(#d34e7d 1.3%,#c54e87 19.2%,#f46d4b 42.3%,#f5754c 57.7%,#ef594a 70.5%,#f5714c 98.7%)"></i>
<i class="h" style="left:460px;background:linear-gradient(#c24e89 1.3%,#b54e92 16.7%,#d34e7d 24.4%,#cf4e7f 34.6%,#dd516d 39.7%,#c44e88 50.0%,#c44e88 98.7%)"></i>
<i class="h" style="left:462px;background:linear-gradient(#d04e7f 1.3%,#a14e9b 16.7%,#e45461 39.7%,#c34e88 55.1%,#e35463 75.6%,#c64e87 91.0%,#ca4e84 98.7%)"></i>
<i class="h" style="left:464px;background:linear-gradient(#b04e96 1.3%,#ac4e99 11.5%,#dc5071 37.2%,#b84e90 44.9%,#ac4e99 55.1%,#e5555e 78.2%,#d44e7c 98.7%)"></i>
<i class="h" style="left:466px;background:linear-gradient(#a84e9c 1.3%,#cb4e83 14.1%,#dd516e 16.7%,#fca560 21.8%,#fece7d 26.9%,#fecb7b 34.6%,#fcb169 37.2%,#e35463 42.3%,#d44e7c 47.4%,#d94f75 98.7%)"></i>
<i class="h" style="left:468px;background:linear-gradient(#d44e7c 1.3%,#cc4e82 11.5%,#ee594c 19.2%,#eb5753 24.4%,#f9854f 32.1%,#cd4e81 42.3%,#b64e92 50.0%,#d24e7e 75.6%,#be4e8c 83.3%,#bc4e8e 98.7%)"></i>
<i class="h" style="left:470px;background:linear-gradient(#bf4e8b 1.3%,#ba4e8f 14.1%,#ed594e 26.9%,#f2664a 34.6%,#e15366 50.0%,#e05268 73.1%,#cc4e82 78.2%,#de516c 98.7%)"></i>
<i class="h" style="left:472px;background:linear-gradient(#f5734c 1.3%,#f05a48 9.0%,#f15e49 16.7%,#ffdd8a 26.9%,#ffe592 29.5%,#fed482 44.9%,#ffea96 52.6%,#fed583 78.2%,#ffe995 83.3%,#ffe28f 98.7%)"></i>
<i class="h" style="left:474px;background:linear-gradient(#f6774d 1.3%,#f16149 11.5%,#ffe592 29.5%,#fed281 37.2%,#ffdf8c 44.9%,#fec174 52.6%,#fed685 60.3%,#fdb269 65.4%,#ffe996 78.2%,#fb9f5d 98.7%)"></i>
<i class="h" style="left:476px;background:linear-gradient(#954f99 1.3%,#a34e9b 57.7%,#984f9a 70.5%,#b74e91 85.9%,#b54e93 98.7%)"></i>
<i class="h" style="left:478px;background:linear-gradient(#815096 1.3%,#934f99 26.9%,#835097 39.7%,#b04e96 85.9%,#af4e97 98.7%)"></i>
<i class="h" style="left:480px;background:linear-gradient(#8d4f98 1.3%,#8c4f98 11.5%,#a14e9b 19.2%,#a34e9b 42.3%,#c64e86 57.7%,#f3694a 73.1%,#ef5a4a 98.7%)"></i>
<i class="h" style="left:482px;background:linear-gradient(#a44e9b 1.3%,#aa4e9b 11.5%,#f36b4b 16.7%,#fa8c50 19.2%,#eb5851 42.3%,#f46d4b 50.0%,#fed785 60.3%,#ffe895 78.2%,#fdb96e 85.9%,#ffe18e 91.0%,#ffea96 98.7%)"></i>
<i class="h" style="left:484px;background:linear-gradient(#885097 1.3%,#914f99 9.0%,#f46c4b 16.7%,#f77c4d 19.2%,#f6784d 32.1%,#ed594e 39.7%,#ffea96 65.4%,#fed07f 78.2%,#ffe693 91.0%,#fed786 98.7%)"></i>
<i class="h" style="left:486px;background:linear-gradient(#994f9a 1.3%,#9d4f9a 9.0%,#e05268 16.7%,#dd516e 21.8%,#f5734c 26.9%,#fa8b50 32.1%,#f46e4b 50.0%,#fed886 57.7%,#ffe894 62.8%,#ffdd8b 85.9%,#fb9556 93.6%,#fec677 98.7%)"></i>
<i class="h" style="left:488px;background:linear-gradient(#865097 1.3%,#934f99 9.0%,#aa4e9b 11.5%,#f46d4b 16.7%,#fa9355 21.8%,#fba05d 26.9%,#f77c4d 32.1%,#f6764c 39.7%,#fdb66c 52.6%,#fdb36a 65.4%,#ffe490 78.2%,#fec374 85.9%,#ffea96 91.0%,#fdb269 98.7%)"></i>
<i class="h" style="left:490px;background:linear-gradient(#7e5096 1.3%,#a34e9b 24.4%,#855097 50.0%,#bb4e8e 80.8%,#be4e8c 98.7%)"></i>
<i class="h" style="left:492px;background:linear-gradient(#7b5193 1.3%,#9e4e9b 50.0%,#994f9a 73.1%,#b24e94 98.7%)"></i>
<i class="h" style="left:494px;background:linear-gradient(#8d4f98 1.3%,#7f5096 39.7%,#ae4e98 65.4%,#a34e9b 85.9%,#b84e90 98.7%)"></i>
<i class="h" style="left:496px;background:linear-gradient(#a84e9c 1.3%,#b64e92 14.1%,#9e4e9b 39.7%,#db5073 55.1%,#e85657 67.9%,#d84e79 88.5%,#ea5753 98.7%)"></i>
<i style="left:498px;background:linear-gradient(#655b73 0.3%,#665b74 13.5%,#6d5583 19.5%,#6b577f 23.9%,#725488 27.2%,#78528f 39.3%,#875097 43.7%,#7d5095 47.5%,#835097 50.8%,#76538d 55.8%,#7d5095 58.5%,#9e4e9b 60.2%,#d54e7b 64.0%,#da4f75 66.2%,#c74e86 68.4%,#ea5755 72.8%,#da5073 78.3%,#eb5852 83.2%,#e05268 87.1%,#ffe995 90.9%,#ffe793 93.1%,#fcac66 94.8%,#fecd7c 95.9%,#fcab65 97.0%,#ffe793 98.6%,#fed281 99.7%)"></i>
<i style="left:500px;background:linear-gradient(#655b73 0.3%,#655b73 9.6%,#725489 25.5%,#705486 29.9%,#7c5094 34.9%,#7d5095 45.3%,#894f98 51.9%,#9a4f9a 54.1%,#8d4f98 58.0%,#944f99 59.1%,#d34e7d 61.3%,#d84f78 67.9%,#c04e8a 70.6%,#e95756 75.0%,#d64e7b 78.3%,#f46c4b 82.7%,#dd516f 87.1%,#e05267 87.6%,#fdb269 89.8%,#ffe592 92.6%,#ffea96 95.9%,#fecb7a 97.5%,#ffe995 98.6%,#ffe692 99.7%)"></i>
<i style="left:502px;background:linear-gradient(#655b73 0.3%,#655b73 9.1%,#6f5585 18.4%,#6d5682 22.3%,#75538c 26.6%,#76538d 34.9%,#8e4f98 39.8%,#875097 44.2%,#9a4f9a 47.5%,#8d4f98 53.6%,#a64e9c 58.5%,#d54e7c 60.7%,#c94e84 63.5%,#ef594a 68.4%,#e6555c 71.7%,#d54e7b 73.4%,#d94f77 76.6%,#f2644a 78.8%,#f05b48 85.4%,#e6555d 87.1%,#f5724c 88.2%,#fba15e 92.0%,#fb9757 93.1%,#ffe693 95.3%,#ffde8b 97.5%,#fcb169 98.6%,#fec878 99.7%)"></i>
<i style="left:504px;background:linear-gradient(#655b73 0.3%,#655b73 8.5%,#6e5584 18.4%,#6d5682 23.9%,#7a5191 32.1%,#74538a 37.1%,#7d5095 43.1%,#974f9a 45.9%,#a84e9c 52.5%,#8c4f98 57.4%,#b84e90 59.6%,#b94e8f 62.4%,#a34e9b 64.0%,#cb4e83 65.7%,#e05268 68.4%,#f16049 88.7%,#f36a4b 89.3%,#ffda88 90.9%,#ffe894 92.6%,#fcab65 97.0%,#f77e4e 98.1%,#fed583 99.7%)"></i>
<i style="left:506px;background:linear-gradient(#655b73 0.3%,#655b74 9.1%,#74538a 30.5%,#7a5191 32.1%,#705486 38.7%,#7b5193 42.0%,#7b5193 47.0%,#994f9a 55.2%,#825097 57.4%,#815096 60.7%,#984f9a 63.5%,#d54e7b 65.7%,#df5269 70.1%,#f9854f 75.0%,#f46d4b 78.8%,#c04e8b 82.1%,#f3684a 87.6%,#fb9858 88.7%,#fdbe72 91.5%,#fa8a50 95.9%,#ec5851 97.5%,#fba25e 99.7%)"></i>
<i style="left:508px;background:linear-gradient(#655b73 0.3%,#675a76 15.1%,#6b577f 20.1%,#6f5585 30.5%,#795191 33.8%,#7c5194 47.0%,#9f4e9b 54.1%,#855097 62.4%,#9c4f9a 65.1%,#9e4e9b 69.5%,#bb4e8e 71.2%,#d24e7e 74.5%,#ad4e98 81.6%,#c34e88 86.5%,#ad4e98 90.4%,#ef594a 95.9%,#d04e7f 99.7%)"></i>
<i style="left:510px;background:linear-gradient(#655b73 0.3%,#685979 17.9%,#6e5583 21.7%,#77528e 23.4%,#785290 26.6%,#735489 28.8%,#875097 36.5%,#845097 48.6%,#974f9a 53.6%,#8a4f98 55.2%,#ac4e99 59.6%,#984f9a 61.8%,#bb4e8e 66.2%,#a14e9b 69.5%,#b94e90 74.5%,#b54e93 78.3%,#9f4e9b 81.0%,#b04e96 82.1%,#ba4e8f 86.0%,#a14e9b 88.2%,#b24e95 89.8%,#bd4e8d 96.4%,#a44e9b 99.7%)"></i>
<i style="left:512px;background:linear-gradient(#655b73 0.3%,#69587a 18.4%,#855097 23.4%,#9d4f9a 26.6%,#7e5096 31.6%,#a04e9b 36.0%,#984f9a 40.9%,#ad4e99 42.6%,#bb4e8e 46.4%,#a04e9b 50.8%,#cb4e83 53.6%,#bf4e8c 59.6%,#e95657 68.4%,#b74e91 81.0%,#c84e85 86.5%,#aa4e9b 91.5%,#ab4e9a 94.2%,#ca4e83 96.4%,#d74e79 99.7%)"></i>
<i style="left:514px;background:linear-gradient(#655b73 0.3%,#69587a 21.7%,#725489 27.7%,#7f5096 41.5%,#9c4f9a 46.4%,#875097 51.4%,#a74e9c 54.7%,#934f99 63.5%,#b04e96 70.1%,#8a4f98 75.0%,#a34e9b 81.0%,#c74e86 83.2%,#d44e7c 86.0%,#a74e9c 90.9%,#ab4e9a 94.2%,#c64e86 96.4%,#be4e8c 99.7%)"></i>
<i style="left:516px;background:linear-gradient(#655b73 0.3%,#665a75 13.5%,#705486 25.5%,#6d5583 28.3%,#77528f 31.6%,#74538b 36.0%,#855097 40.4%,#795291 44.2%,#805096 47.0%,#7d5095 49.7%,#c44e88 56.9%,#df526a 64.0%,#c34e89 69.0%,#dc5071 70.1%,#e05268 72.3%,#c54e87 78.3%,#d74e7a 82.7%,#9e4e9b 87.1%,#a74e9c 92.6%,#e5555e 97.5%,#db5073 99.7%)"></i>
<i style="left:518px;background:linear-gradient(#655b73 0.3%,#69587b 21.2%,#715487 25.5%,#6e5584 30.5%,#894f98 39.8%,#77528e 45.3%,#885097 52.5%,#d84e78 61.3%,#c14e8a 70.6%,#ea5755 74.5%,#b04e96 78.8%,#bd4e8d 81.0%,#da5073 82.7%,#da4f75 85.4%,#b24e95 90.9%,#da4f75 95.9%,#cb4e83 99.7%)"></i>
<i style="left:520px;background:linear-gradient(#655b73 0.3%,#655b73 9.1%,#74538b 31.0%,#705486 32.7%,#795290 37.1%,#78528f 47.5%,#894f98 49.7%,#924f99 54.7%,#b74e91 59.6%,#cb4e83 69.0%,#bc4e8e 72.8%,#d64e7b 74.5%,#bb4e8e 79.4%,#e45461 82.7%,#ca4e83 88.7%,#a74e9c 90.9%,#d14e7e 95.9%,#b94e90 99.7%)"></i>
<i style="left:522px;background:linear-gradient(#655b73 0.3%,#655b73 9.1%,#76538d 30.5%,#73538a 36.0%,#7b5192 43.1%,#77528e 47.5%,#904f99 56.9%,#9a4f9a 65.7%,#c84e85 70.6%,#964f99 75.5%,#bb4e8e 80.5%,#b54e93 86.5%,#9f4e9b 89.3%,#b34e94 93.1%,#a24e9b 99.7%)"></i>
<i style="left:524px;background:linear-gradient(#655b73 0.3%,#655b73 8.5%,#6b577e 22.3%,#74538b 26.6%,#7b5193 47.5%,#904f99 52.5%,#894f98 55.8%,#7b5193 57.4%,#994f9a 63.5%,#ca4e83 66.8%,#ea5754 68.4%,#f3684a 70.6%,#f5744c 78.3%,#fb9c5b 79.9%,#f9884f 82.7%,#ffdf8c 85.4%,#ffe591 87.6%,#fdbf72 89.3%,#ffe591 93.7%,#fec274 95.3%,#fed886 96.4%,#fdb76c 98.6%,#fec274 99.7%)"></i>
<i style="left:526px;background:linear-gradient(#655b73 0.3%,#6a587c 21.7%,#805096 33.8%,#795290 39.8%,#845097 42.6%,#7c5193 47.5%,#855097 52.5%,#7e5096 58.0%,#c34e88 65.7%,#f3684a 68.4%,#eb5753 73.4%,#f26249 74.5%,#ec5850 77.7%,#f46c4b 79.9%,#f05a48 81.0%,#fb9657 82.1%,#fed483 84.9%,#fdb86d 90.4%,#ffe894 95.3%,#ffe692 99.7%)"></i>
<i style="left:528px;background:linear-gradient(#655b73 0.3%,#665a76 13.5%,#805096 34.9%,#7d5095 42.6%,#8b4f98 45.3%,#7f5096 49.2%,#934f99 55.8%,#8b4f98 59.1%,#b44e93 65.7%,#dc5071 68.4%,#ce4e80 69.5%,#d34e7d 72.8%,#f46f4b 77.2%,#e35463 81.6%,#e25363 82.7%,#f36b4b 84.9%,#da5074 87.1%,#f46d4b 90.9%,#e6555c 92.6%,#f6784d 95.9%,#f2664a 97.0%,#f5724c 99.7%)"></i>
<i style="left:530px;background:linear-gradient(#655b73 0.3%,#665b74 6.9%,#795290 15.1%,#705486 20.1%,#7d5095 23.9%,#77528f 27.7%,#835097 32.1%,#7b5193 35.4%,#964f99 39.3%,#8e4f98 48.1%,#b84e90 51.9%,#9d4f9a 58.5%,#cb4e82 68.4%,#ab4e9a 82.1%,#d84e78 96.4%,#cb4e83 99.7%)"></i>
<i style="left:532px;background:linear-gradient(#655b73 0.3%,#665b74 6.3%,#a64e9c 15.7%,#a74e9c 23.9%,#934f99 26.6%,#c74e86 36.5%,#b64e92 38.7%,#c24e89 41.5%,#e5555e 43.7%,#c84e85 48.1%,#df5269 52.5%,#ad4e99 55.8%,#ed584e 60.7%,#e05367 64.0%,#e7565a 71.7%,#cc4e82 76.1%,#eb5852 80.5%,#e05269 88.2%,#c04e8b 92.0%,#db5071 97.0%,#ce4e80 99.7%)"></i>
<i style="left:534px;background:linear-gradient(#655b73 0.3%,#665b74 8.5%,#9f4e9b 15.1%,#a24e9b 23.9%,#875097 28.3%,#a24e9b 31.6%,#b44e93 40.4%,#e35463 44.2%,#c44e88 48.1%,#e85659 53.0%,#c64e86 57.4%,#f2664a 65.1%,#d84f77 69.5%,#dd516d 72.3%,#be4e8c 79.9%,#d64e7a 83.2%,#ec5850 85.4%,#ca4e83 91.5%,#e95756 96.4%,#d74e7a 99.7%)"></i>
<i style="left:536px;background:linear-gradient(#655b73 0.3%,#665a75 8.0%,#904f99 14.6%,#a14e9b 18.4%,#ae4e98 22.8%,#934f99 25.5%,#904f99 28.3%,#ab4e9a 30.5%,#ad4e98 37.6%,#d64e7b 44.8%,#c74e86 47.0%,#e85657 53.0%,#c14e8a 58.0%,#c64e86 59.6%,#e45461 61.8%,#df526a 63.5%,#ea5754 64.6%,#de516c 65.7%,#ef5a4a 68.4%,#f16049 73.9%,#e5555f 76.1%,#b74e91 78.3%,#a34e9b 80.5%,#e45461 83.8%,#f05a48 86.0%,#c44e87 91.5%,#ea5755 96.4%,#d84e78 99.7%)"></i>
<i style="left:538px;background:linear-gradient(#655b73 0.3%,#665b74 10.2%,#6e5583 15.7%,#715487 19.5%,#6e5584 27.7%,#7b5193 32.7%,#7c5193 38.2%,#8e4f98 41.5%,#7d5095 45.3%,#a64e9c 50.3%,#a34e9b 59.6%,#b84e90 61.3%,#a74e9c 66.8%,#ce4e80 78.8%,#be4e8c 83.2%,#d84f78 86.0%,#cd4e81 92.6%,#f2644a 95.9%,#e5555e 98.6%,#ea5755 99.7%)"></i>
<i style="left:540px;background:linear-gradient(#655b73 0.3%,#675a76 14.6%,#6e5584 21.7%,#6b577e 24.5%,#6f5585 28.8%,#6c5681 31.6%,#77528f 35.4%,#77528f 38.2%,#8a4f98 42.6%,#7a5192 47.5%,#a64e9c 57.4%,#9f4e9b 62.4%,#ae4e98 65.1%,#994f9a 79.4%,#c14e8a 84.9%,#9f4e9b 88.7%,#c44e87 91.5%,#fba25f 93.7%,#fed785 94.8%,#fecd7d 96.4%,#ffe692 97.5%,#fed684 99.7%)"></i>
<i style="left:542px;background:linear-gradient(#655b73 0.3%,#655b73 8.0%,#6d5682 17.3%,#6d5682 26.6%,#8b4f98 45.3%,#7e5096 50.8%,#a84e9c 53.6%,#b74e91 56.9%,#b84e91 61.8%,#9e4e9b 64.6%,#a94e9b 65.7%,#9c4f9a 67.3%,#b64e92 73.9%,#a34e9b 79.4%,#c74e85 87.1%,#aa4e9b 99.7%)"></i>
<i style="left:544px;background:linear-gradient(#655b73 0.3%,#665a75 10.2%,#715487 14.6%,#7d5095 21.2%,#76528d 23.9%,#934f99 36.5%,#8a4f98 40.9%,#a94e9b 45.9%,#a14e9b 50.8%,#ab4e9a 53.0%,#cb4e83 54.7%,#d14e7e 57.4%,#c44e87 59.6%,#da4f74 63.5%,#d74e7a 66.8%,#b54e93 68.4%,#ce4e80 73.9%,#c24e89 81.0%,#eb5852 86.0%,#c94e84 90.9%,#c14e8a 99.7%)"></i>
<i style="left:546px;background:linear-gradient(#655b73 0.3%,#675a77 10.2%,#9b4f9a 15.7%,#8e4f98 17.3%,#ae4e98 21.7%,#8b4f98 26.1%,#a44e9b 29.9%,#b34e94 38.2%,#9d4f9a 43.1%,#c94e84 48.6%,#c24e89 50.8%,#d94f75 55.2%,#cb4e82 56.9%,#da5073 58.5%,#cb4e83 59.6%,#f46f4b 64.6%,#dc5071 69.5%,#f6764c 75.5%,#f46c4b 78.8%,#e45461 81.0%,#f9874f 86.0%,#ef5a49 87.1%,#f05c48 88.2%,#cc4e82 90.9%,#d14e7e 99.7%)"></i>
<i style="left:548px;background:linear-gradient(#655b73 0.3%,#665b74 9.6%,#725488 14.0%,#8b4f98 16.2%,#76528d 26.6%,#815096 29.4%,#7c5194 33.8%,#934f99 39.3%,#8f4f98 51.4%,#ab4e9a 58.5%,#a14e9b 60.7%,#dc516f 71.2%,#ca4e84 84.9%,#e7565a 88.7%,#e05269 93.7%,#eb5851 95.3%,#d14e7f 97.0%,#e6555b 98.1%,#e95657 99.7%)"></i>
<i style="left:550px;background:linear-gradient(#655b73 0.3%,#655b74 8.5%,#805096 15.7%,#934f99 19.0%,#7c5193 28.8%,#9d4f9a 33.8%,#885097 38.7%,#ba4e8f 45.3%,#944f99 50.3%,#a84e9c 51.9%,#c24e89 58.5%,#b84e90 66.8%,#e05268 72.8%,#da5074 83.8%,#fecf7e 89.3%,#fdb46b 90.4%,#fed281 92.0%,#fec677 93.7%,#ffdf8c 97.0%,#fec174 98.6%,#fed785 99.7%)"></i>
<i style="left:552px;background:linear-gradient(#655b73 0.3%,#655b73 8.5%,#964f99 21.2%,#7d5095 28.3%,#984f9a 32.7%,#8c4f98 35.4%,#a74e9c 44.8%,#894f98 49.2%,#ba4e8f 54.1%,#d74e7a 60.2%,#a54e9c 65.1%,#d94f76 77.2%,#e6555b 78.8%,#d34e7d 83.8%,#ec5851 86.0%,#fec174 88.2%,#ffe692 89.8%,#ffe390 99.7%)"></i>
<i style="left:554px;background:linear-gradient(#655b73 0.3%,#675977 12.9%,#73538a 19.5%,#6d5682 28.3%,#8a4f98 43.7%,#76538c 49.7%,#a74e9c 57.4%,#7f5096 65.1%,#a64e9c 69.0%,#ae4e97 71.7%,#a34e9b 80.5%,#835097 85.4%,#e05268 88.2%,#fdbb6f 91.5%,#ffea96 94.2%,#fdc072 98.1%,#ffea96 99.7%)"></i>
<i style="left:556px;background:linear-gradient(#655b73 0.3%,#675977 13.5%,#6f5585 20.6%,#6c5681 25.5%,#78528f 32.7%,#73538a 37.6%,#7d5095 44.2%,#795191 50.3%,#954f99 55.8%,#825097 61.3%,#8d4f98 64.0%,#845097 69.5%,#994f9a 74.5%,#8c4f98 76.1%,#9c4f9a 79.4%,#b74e91 81.0%,#984f9a 85.4%,#fb9e5c 90.4%,#fecd7c 92.6%,#fed886 95.3%,#f4704c 97.5%,#fb9656 98.6%,#fb9a5a 99.7%)"></i>
<i style="left:558px;background:linear-gradient(#655b73 0.3%,#675a76 12.9%,#6e5584 21.7%,#6c5681 25.5%,#75538c 29.9%,#74538a 36.0%,#994f9a 54.7%,#815096 68.4%,#a64e9c 71.7%,#9b4f9a 73.9%,#b14e95 83.2%,#e6555c 85.4%,#eb5753 86.5%,#fec274 90.4%,#fcb169 94.8%,#fece7d 95.9%,#fdb66c 99.7%)"></i>
<i style="left:560px;background:linear-gradient(#655b73 0.3%,#675977 14.6%,#6f5585 20.6%,#6a587d 25.5%,#77528e 31.6%,#76528d 36.0%,#7f5096 40.4%,#795191 42.6%,#7f5096 51.4%,#974f9a 55.2%,#904f99 62.9%,#9f4e9b 65.7%,#7d5095 70.6%,#8c4f98 72.3%,#845097 73.9%,#aa4e9b 84.9%,#f77f4e 89.8%,#f8834f 93.1%,#f36a4a 95.3%,#fed482 99.7%)"></i>
<i style="left:562px;background:linear-gradient(#655b73 0.3%,#655b73 9.6%,#705486 22.3%,#76528d 37.1%,#835097 39.8%,#7d5095 46.4%,#9a4f9a 51.4%,#855097 60.7%,#a94e9b 65.7%,#9a4f9a 70.6%,#a64e9c 72.3%,#9a4f9a 74.5%,#a44e9b 81.0%,#db5072 87.1%,#f9884f 89.3%,#fdbe71 91.5%,#fca561 92.6%,#fecd7c 94.2%,#fb9758 95.3%,#fecb7b 97.0%,#fca460 98.1%,#ffe894 99.7%)"></i>
<i style="left:564px;background:linear-gradient(#655b73 0.3%,#685978 15.7%,#705486 21.7%,#75538c 28.3%,#6f5585 36.0%,#73538a 38.7%,#7f5096 40.4%,#7a5192 44.8%,#944f99 49.2%,#825097 53.6%,#b34e94 58.5%,#8e4f98 63.5%,#ad4e99 68.4%,#ad4e98 72.3%,#924f99 74.5%,#a34e9b 76.1%,#924f99 77.7%,#aa4e9b 79.4%,#9b4f9a 81.6%,#b04e96 82.7%,#b54e92 84.9%,#d74e79 86.5%,#cf4e80 87.6%,#f05c48 92.6%,#e35462 93.7%,#f2654a 95.9%,#e35462 97.5%,#e35462 99.7%)"></i>
<i style="left:566px;background:linear-gradient(#655b73 0.3%,#69597a 16.2%,#6c5680 22.3%,#795290 27.2%,#75538c 29.4%,#7c5194 34.3%,#78528f 36.0%,#8d4f98 40.4%,#7e5096 44.2%,#a94e9c 49.2%,#9c4f9a 53.6%,#be4e8c 58.0%,#9b4f9a 66.8%,#9f4e9b 70.6%,#c94e84 76.1%,#b34e94 77.7%,#c14e8a 81.6%,#da4f74 82.7%,#e15366 86.5%,#d14e7e 90.4%,#de526b 93.1%,#cf4e80 99.7%)"></i>
<i style="left:568px;background:linear-gradient(#655b73 0.3%,#655b73 8.5%,#6a587c 13.5%,#6a577d 20.1%,#76538d 28.8%,#7e5096 31.0%,#7d5094 41.5%,#b64e92 48.6%,#8e4f98 53.6%,#af4e97 57.4%,#994f9a 67.3%,#c24e89 75.5%,#9f4e9b 78.3%,#9b4f9a 80.5%,#e05268 85.4%,#c24e89 90.4%,#d04e7f 93.7%,#b54e93 96.4%,#b84e91 99.7%)"></i>
<i style="left:570px;background:linear-gradient(#655b73 0.3%,#655b74 9.6%,#7b5193 31.6%,#815096 44.8%,#a04e9b 49.7%,#8e4f98 53.6%,#ad4e98 58.5%,#9c4f9a 62.9%,#a94e9b 65.1%,#964f99 70.6%,#974f9a 78.3%,#ce4e81 88.7%,#c94e84 90.9%,#d64e7b 91.5%,#fb9f5d 93.1%,#fdb96e 93.7%,#fec979 94.2%,#fb9657 95.9%,#ffdc8a 97.5%,#ffe18e 99.7%)"></i>
<i style="left:572px;background:linear-gradient(#655b73 0.3%,#6a587c 20.1%,#944f99 40.4%,#7d5095 48.6%,#a34e9b 53.0%,#944f99 58.0%,#c04e8b 66.8%,#bd4e8d 68.4%,#9a4f9a 71.2%,#c64e87 75.5%,#aa4e9a 77.7%,#af4e97 83.8%,#de526b 88.2%,#d74e7a 91.5%,#f16149 94.2%,#eb5753 97.0%,#f6764d 98.1%,#f6774d 99.7%)"></i>
<i style="left:574px;background:linear-gradient(#655b73 0.3%,#655b74 8.5%,#6e5583 17.3%,#6c5681 20.6%,#7e5096 33.8%,#7b5192 39.3%,#8b4f98 40.9%,#805096 42.6%,#984f9a 53.0%,#894f98 55.2%,#bc4e8e 60.2%,#9e4e9b 71.2%,#b44e93 75.5%,#964f99 83.2%,#b14e95 86.0%,#9e4e9b 89.8%,#db5073 94.2%,#af4e97 99.7%)"></i>
<i style="left:576px;background:linear-gradient(#655b73 0.3%,#655b74 8.0%,#6f5585 19.0%,#6a587d 24.5%,#77528e 29.9%,#74538b 36.0%,#934f99 47.0%,#914f99 55.2%,#b64e92 58.5%,#855097 63.5%,#954f99 66.2%,#7f5096 70.6%,#a54e9c 75.5%,#904f99 80.5%,#a24e9b 84.9%,#894f98 88.7%,#b24e95 93.7%,#9b4f9a 96.4%,#9e4e9b 99.7%)"></i>
<i style="left:578px;background:linear-gradient(#655b73 0.3%,#655b73 8.5%,#6c5681 19.0%,#725489 34.9%,#924f99 47.0%,#7d5095 52.5%,#9b4f9a 57.4%,#914f99 61.3%,#9d4f9a 64.6%,#7c5193 70.1%,#a84e9c 76.1%,#9e4e9b 81.0%,#a94e9b 84.3%,#845097 89.8%,#b84e90 94.2%,#a24e9b 95.9%,#a94e9b 99.7%)"></i>
<i style="left:580px;background:linear-gradient(#655b73 0.3%,#675a76 12.9%,#6e5584 22.3%,#795290 25.5%,#75538b 32.1%,#8e4f98 42.6%,#8b4f98 46.4%,#ac4e99 55.8%,#a54e9c 67.9%,#984f9a 69.5%,#ab4e9a 71.7%,#aa4e9a 74.5%,#974f9a 78.3%,#b24e95 83.2%,#a64e9c 95.9%,#ba4e8f 99.7%)"></i>
<i style="left:582px;background:linear-gradient(#655b73 0.3%,#655b73 8.5%,#73538a 26.1%,#725488 30.5%,#885097 36.0%,#7a5191 40.9%,#855097 45.9%,#7b5193 50.3%,#924f99 57.4%,#b84e90 60.2%,#bd4e8d 62.9%,#a84e9c 65.1%,#c84e85 69.0%,#b94e90 76.1%,#a04e9b 78.8%,#bf4e8b 89.3%,#a04e9b 94.2%,#c14e8a 99.7%)"></i>
<i style="left:584px;background:linear-gradient(#655b73 0.3%,#69587b 20.1%,#715487 25.0%,#715487 29.9%,#77528e 32.7%,#75538c 37.6%,#934f99 48.1%,#7e5095 54.1%,#a34e9b 58.5%,#8d4f98 63.5%,#aa4e9b 68.4%,#9b4f9a 71.7%,#ba4e8f 84.3%,#894f98 89.8%,#c24e89 95.3%,#9c4f9a 99.7%)"></i>
<i style="left:586px;background:linear-gradient(#655b73 0.3%,#655b74 9.6%,#6d5583 17.3%,#6c5680 22.3%,#7a5192 28.8%,#7d5095 37.6%,#9a4f9a 45.9%,#994f9a 51.4%,#835097 57.4%,#914f99 60.7%,#b34e94 63.5%,#bb4e8e 66.2%,#9e4e9b 68.4%,#974f9a 71.2%,#a54e9c 72.8%,#a14e9b 77.7%,#bf4e8b 79.9%,#c54e87 83.2%,#a04e9b 88.7%,#b54e93 99.7%)"></i>
<i style="left:588px;background:linear-gradient(#655b73 0.3%,#655b73 10.2%,#8a4f98 38.7%,#805096 43.1%,#ae4e98 53.6%,#994f9a 57.4%,#da5073 66.2%,#a34e9b 71.2%,#e15365 76.1%,#c24e89 82.7%,#d64e7b 90.4%,#bb4e8f 94.2%,#e6555c 99.7%)"></i>
<i style="left:590px;background:linear-gradient(#655b73 0.3%,#665b74 9.6%,#6b577f 21.7%,#74538b 26.6%,#725488 33.2%,#7d5095 38.7%,#7a5191 45.3%,#9b4f9a 53.0%,#8a4f98 55.8%,#ad4e98 64.0%,#914f99 71.7%,#d64e7b 77.2%,#cf4e80 79.4%,#8d4f98 84.3%,#ad4e99 88.2%,#9f4e9b 95.3%,#e05268 99.7%)"></i>
<i style="left:592px;background:linear-gradient(#655b73 0.3%,#675a77 35.4%,#705486 47.0%,#705486 51.9%,#7c5194 59.1%,#77528e 64.0%,#815096 66.8%,#7a5192 71.2%,#815096 78.3%,#74538b 88.7%,#b24e95 99.7%)"></i>
<i style="left:594px;background:linear-gradient(#655b73 0.3%,#655b73 37.6%,#6b577e 44.2%,#795290 49.2%,#76538d 54.7%,#845097 59.1%,#77528e 64.6%,#7d5095 77.2%,#8c4f98 79.9%,#76528d 88.7%,#ba4e8f 99.7%)"></i>
<i style="left:596px;background:linear-gradient(#655b73 0.3%,#655b73 37.1%,#7b5192 51.4%,#875097 58.0%,#7c5193 62.4%,#904f99 66.2%,#914f99 72.8%,#7c5193 75.0%,#934f99 80.5%,#885097 90.9%,#a34e9b 93.7%,#c14e8a 99.7%)"></i>
<i style="left:598px;background:linear-gradient(#655b73 0.3%,#655b73 37.1%,#69597a 42.0%,#705486 44.8%,#6e5584 50.3%,#885097 59.6%,#845097 77.7%,#944f99 82.1%,#7c5094 90.4%,#bd4e8d 95.3%,#b94e90 99.7%)"></i>
<i style="left:600px;background:linear-gradient(#655b73 0.3%,#655b73 37.6%,#6b577e 45.3%,#7c5194 53.6%,#75538c 58.5%,#894f98 65.7%,#7c5193 76.1%,#8e4f98 86.5%,#795290 90.9%,#9f4e9b 94.8%,#a44e9b 99.7%)"></i>
<i style="left:602px;background:linear-gradient(#655b73 0.3%,#655b73 37.1%,#6d5682 47.0%,#795290 51.4%,#74538b 59.1%,#855097 65.1%,#77528e 71.7%,#7d5095 73.4%,#885097 77.2%,#7e5096 78.3%,#8f4f98 81.0%,#7b5192 91.5%,#934f99 94.8%,#a94e9b 99.7%)"></i>
<i style="left:604px;background:linear-gradient(#655b73 0.3%,#655b73 38.2%,#6d5682 43.7%,#6c5780 48.1%,#76528d 53.6%,#73538a 59.6%,#845097 66.2%,#7b5193 77.7%,#805096 80.5%,#76538d 86.0%,#7a5192 87.6%,#795290 92.0%,#b04e96 97.0%,#af4e97 99.7%)"></i>
<i style="left:606px;background:linear-gradient(#655b73 0.3%,#655b73 38.7%,#785290 50.3%,#725489 54.7%,#74538b 59.1%,#934f99 73.9%,#76528d 77.7%,#894f98 82.1%,#7c5193 90.9%,#a94e9b 99.7%)"></i>
<i style="left:608px;background:linear-gradient(#655b73 0.3%,#655b73 38.2%,#77528e 51.4%,#74538a 58.5%,#7c5194 61.3%,#845097 67.3%,#78528f 71.7%,#7d5095 73.9%,#78528f 78.8%,#8f4f98 81.6%,#924f99 83.8%,#7b5193 88.2%,#9f4e9b 93.1%,#aa4e9b 99.7%)"></i>
<i style="left:610px;background:linear-gradient(#655b73 0.3%,#655b73 38.2%,#6a577d 44.8%,#77528f 50.3%,#77528e 54.1%,#7e5096 57.4%,#885097 65.7%,#795191 68.4%,#73538a 76.1%,#7a5191 82.7%,#914f99 86.0%,#914f99 90.9%,#a84e9c 92.6%,#9e4e9b 99.7%)"></i>
<i style="left:612px;background:linear-gradient(#655b73 0.3%,#655b73 39.3%,#78528f 52.5%,#7d5095 62.9%,#75538b 67.9%,#7e5096 72.3%,#7a5192 73.9%,#835097 78.3%,#78528f 81.6%,#785290 84.9%,#8c4f98 94.2%,#b94e90 99.7%)"></i>
<i style="left:614px;background:linear-gradient(#655b73 0.3%,#655b73 38.2%,#685979 43.1%,#805096 53.0%,#7b5192 57.4%,#855097 61.8%,#78528f 67.3%,#8f4f98 72.8%,#78528f 82.1%,#8b4f98 93.1%,#db5072 98.1%,#da5073 99.7%)"></i>
<i style="left:616px;background:linear-gradient(#655b73 0.3%,#655b73 38.7%,#6d5682 45.3%,#7d5095 50.3%,#7b5192 64.0%,#994f9a 72.3%,#845097 80.5%,#9c4f9a 84.9%,#815096 89.8%,#865097 93.7%,#dd516e 99.7%)"></i>
<i style="left:618px;background:linear-gradient(#655b73 0.3%,#655b73 37.1%,#6c577f 43.1%,#7b5193 47.5%,#76528d 51.9%,#825097 58.5%,#7d5095 68.4%,#9d4f9a 73.9%,#815096 79.4%,#8a4f98 81.6%,#7c5194 83.2%,#855097 88.7%,#7c5193 90.9%,#cd4e81 99.7%)"></i>
<i style="left:620px;background:linear-gradient(#655b73 0.3%,#655b73 36.0%,#76528d 46.4%,#6e5584 50.8%,#7a5192 54.1%,#785290 56.9%,#8f4f98 61.8%,#78528f 76.1%,#805096 79.9%,#7f5096 92.6%,#b94e90 97.5%,#bd4e8d 99.7%)"></i>
<i style="left:622px;background:linear-gradient(#655b73 0.3%,#655b73 37.1%,#6d5583 44.8%,#7e5095 59.6%,#76528d 65.7%,#7e5096 74.5%,#77528e 78.8%,#914f99 89.8%,#7d5095 92.0%,#894f98 94.8%,#af4e97 97.0%,#bb4e8e 99.7%)"></i>
<i style="left:624px;background:linear-gradient(#655b73 0.3%,#655b73 37.6%,#6c5681 46.4%,#7e5096 51.9%,#78528f 56.9%,#7b5192 60.2%,#715488 65.1%,#7b5193 68.4%,#76538d 72.8%,#7c5194 75.0%,#795290 79.4%,#904f99 83.8%,#7b5192 88.7%,#7f5096 91.5%,#c04e8a 95.9%,#bc4e8e 99.7%)"></i>
<i style="left:626px;background:linear-gradient(#655b73 0.3%,#655b73 37.6%,#6b577e 46.4%,#7b5192 50.8%,#77528e 59.6%,#7a5191 62.9%,#974f9a 67.9%,#795290 73.4%,#805096 79.4%,#795191 87.6%,#7d5095 90.4%,#9f4e9b 92.6%,#c44e87 99.7%)"></i>
<i style="left:628px;background:linear-gradient(#655b73 0.3%,#655b73 37.1%,#78528f 49.7%,#73538a 54.1%,#894f98 68.4%,#845097 71.7%,#795290 73.4%,#805096 77.7%,#7a5191 87.1%,#8e4f98 94.8%,#b34e94 99.7%)"></i>
<i style="left:630px;background:linear-gradient(#655b73 0.3%,#655b73 38.2%,#75538c 49.7%,#725488 57.4%,#7b5193 67.3%,#7a5192 75.0%,#75538c 76.6%,#835097 91.5%,#a44e9b 96.4%,#a94e9b 99.7%)"></i>
<i style="left:632px;background:linear-gradient(#655b73 0.3%,#655b73 38.2%,#6a577d 41.5%,#6b577f 47.0%,#7a5192 53.0%,#735489 62.4%,#8e4f98 86.5%,#885097 89.8%,#795290 92.6%,#9c4f9a 97.0%,#a34e9b 99.7%)"></i>
<i style="left:634px;background:linear-gradient(#655b73 0.3%,#655b73 38.2%,#735489 47.0%,#725489 51.9%,#7c5194 55.2%,#76528d 59.1%,#7e5095 61.3%,#7d5095 64.0%,#74538b 67.3%,#865097 73.4%,#825097 94.2%,#924f99 97.5%,#b34e94 99.7%)"></i>
<i style="left:636px;background:linear-gradient(#655b73 0.3%,#655b73 37.6%,#78528f 47.0%,#795290 58.5%,#845097 63.5%,#77528e 76.6%,#8a4f98 82.1%,#7a5191 89.8%,#9d4f9a 94.2%,#b24e95 99.7%)"></i>
<i style="left:638px;background:linear-gradient(#655b73 0.3%,#655b73 37.6%,#73538a 46.4%,#7b5192 59.6%,#77528e 62.4%,#8c4f98 67.3%,#795191 76.6%,#845097 81.6%,#7a5191 89.8%,#a84e9c 99.7%)"></i>
<i style="left:640px;background:linear-gradient(#655b73 0.3%,#655b74 38.2%,#675977 41.5%,#6e5584 44.2%,#705486 54.7%,#815096 64.0%,#785290 69.5%,#8d4f98 75.0%,#75538c 81.0%,#7a5191 88.2%,#ab4e9a 97.5%,#ab4e9a 99.7%)"></i>
<i style="left:642px;background:linear-gradient(#655b73 0.3%,#685978 33.8%,#705486 51.4%,#6c5680 58.5%,#7e5096 63.5%,#705586 69.0%,#7f5096 75.0%,#77528e 79.9%,#7e5096 81.6%,#7d5095 84.9%,#76528d 87.1%,#7c5094 91.5%,#ac4e99 96.4%,#9e4e9b 99.7%)"></i>
<i style="left:644px;background:linear-gradient(#655b73 0.3%,#655b73 9.1%,#6f5585 19.5%,#6c5680 28.3%,#715488 33.2%,#6f5585 38.7%,#795290 47.0%,#74538b 53.0%,#974f9a 64.0%,#75538c 69.0%,#994f9a 76.6%,#924f99 79.4%,#a64e9c 84.3%,#904f99 86.0%,#974f9a 87.6%,#8a4f98 89.3%,#9f4e9b 94.2%,#9f4e9b 99.7%)"></i>
<i style="left:646px;background:linear-gradient(#655b73 0.3%,#655b73 10.2%,#73538a 13.5%,#7c5193 16.2%,#aa4e9b 29.4%,#8a4f98 32.1%,#835097 39.3%,#b44e93 44.8%,#914f99 49.7%,#b94e8f 58.0%,#ae4e98 60.2%,#c14e8a 64.6%,#aa4e9a 68.4%,#cf4e80 70.6%,#ad4e98 72.8%,#db5071 76.6%,#a94e9b 78.8%,#994f9a 81.6%,#cb4e83 84.9%,#a44e9b 89.3%,#f77d4e 93.7%,#f15f49 99.7%)"></i>
<i style="left:648px;background:linear-gradient(#655b73 0.3%,#655b73 11.3%,#715488 14.0%,#9b4f9a 22.8%,#944f99 29.9%,#a64e9c 35.4%,#8d4f98 40.9%,#9c4f9a 44.2%,#934f99 47.5%,#be4e8c 52.5%,#b74e91 59.6%,#c64e86 61.3%,#a34e9b 66.2%,#c04e8a 69.0%,#f2644a 70.6%,#d84e78 72.8%,#e25365 74.5%,#fb9d5b 76.6%,#f9864f 77.7%,#db5072 79.4%,#c24e89 81.0%,#bc4e8d 82.1%,#dc5070 84.3%,#de516d 86.0%,#ba4e8f 89.3%,#ce4e80 90.4%,#fdb36a 92.6%,#fb9e5c 93.7%,#ffea96 95.3%,#fed381 97.5%,#ffdf8c 99.7%)"></i>
<i style="left:650px;background:linear-gradient(#655b73 0.3%,#655b74 10.7%,#875097 16.8%,#865097 21.2%,#a54e9c 25.5%,#a74e9c 28.3%,#944f99 29.9%,#a04e9b 32.1%,#815096 37.6%,#9f4e9b 42.0%,#875097 47.0%,#a44e9b 48.6%,#bf4e8b 51.9%,#a34e9b 55.8%,#c14e8a 61.3%,#bf4e8c 65.1%,#ad4e98 66.2%,#cb4e83 67.9%,#f2644a 69.5%,#db5073 72.8%,#e05269 73.9%,#f6774d 75.5%,#f5714c 76.6%,#c34e88 79.9%,#ad4e99 82.7%,#c14e8a 84.9%,#b84e91 88.7%,#bf4e8c 89.3%,#f05a48 90.4%,#fed685 93.1%,#ffe491 98.1%,#fcab64 99.7%)"></i>
<i style="left:652px;background:linear-gradient(#655b73 0.3%,#665a75 9.6%,#964f99 17.3%,#8a4f98 20.6%,#9d4f9a 24.5%,#8b4f98 30.5%,#974f9a 37.1%,#ae4e98 39.8%,#924f99 44.2%,#b24e94 48.6%,#a34e9b 51.9%,#b04e96 56.9%,#9e4e9b 59.1%,#b54e93 62.4%,#af4e97 64.6%,#954f99 66.8%,#a04e9b 67.9%,#e15367 69.5%,#bf4e8c 73.9%,#f16049 76.6%,#da5074 78.3%,#c54e87 80.5%,#b64e92 88.7%,#ef5a4a 90.9%,#fec777 92.6%,#ffe692 93.7%,#f9884f 97.5%,#fed785 99.7%)"></i>
<i style="left:654px;background:linear-gradient(#655b73 0.3%,#665a76 11.3%,#7c5194 16.2%,#954f99 22.3%,#875097 29.4%,#8b4f98 32.7%,#af4e97 37.6%,#9e4e9b 42.0%,#b34e94 46.4%,#994f9a 51.9%,#cb4e83 61.8%,#aa4e9b 66.8%,#c14e8a 69.0%,#f2644a 70.6%,#e45460 73.9%,#f9874f 76.1%,#f77b4d 77.2%,#c74e86 79.9%,#aa4e9a 86.0%,#c64e87 89.8%,#fdbb6f 94.2%,#fcab65 95.3%,#ffe18e 97.0%,#fecd7c 98.6%,#ffe491 99.7%)"></i>
<i style="left:656px;background:linear-gradient(#655b73 0.3%,#665b74 10.7%,#875097 17.9%,#964f99 20.6%,#9e4e9b 26.1%,#8c4f98 31.0%,#9b4f9a 35.4%,#954f99 48.1%,#a24e9b 52.5%,#8c4f98 55.2%,#954f99 58.5%,#aa4e9b 60.2%,#ac4e99 62.9%,#c64e87 64.0%,#ba4e8f 67.9%,#e95755 70.1%,#da4f74 71.7%,#e35462 73.4%,#fcb068 75.5%,#f77d4e 77.2%,#c64e86 79.4%,#bd4e8d 87.1%,#c94e84 89.3%,#f15f49 91.5%,#f77e4e 93.7%,#f5724c 95.9%,#fdb76c 97.5%,#fdb66c 99.7%)"></i>
<i style="left:658px;background:linear-gradient(#655b73 0.3%,#655b73 9.6%,#725488 17.3%,#7c5194 31.6%,#77528e 36.5%,#815096 42.0%,#77528e 45.3%,#835097 51.4%,#77528e 56.3%,#904f99 61.8%,#7d5095 66.8%,#904f99 67.9%,#e7565b 70.1%,#d74e7a 71.7%,#d74e7a 73.4%,#ee594c 76.1%,#c14e8a 78.8%,#d24e7e 81.0%,#b04e96 84.9%,#d44e7c 89.3%,#ef594a 90.9%,#fec677 92.6%,#fec878 94.8%,#f77d4e 96.4%,#fa8c50 98.1%,#fed685 99.7%)"></i>
<i style="left:660px;background:linear-gradient(#655b73 0.3%,#665a75 15.1%,#6e5584 21.7%,#6c5780 26.6%,#74538b 32.1%,#74538a 37.1%,#7b5193 39.3%,#76528d 45.3%,#8b4f98 55.2%,#8a4f98 61.8%,#7a5191 65.7%,#835097 67.9%,#d84f77 70.6%,#c34e88 74.5%,#f15f49 77.2%,#a14e9b 85.4%,#cc4e82 88.7%,#c34e88 89.8%,#d74e7a 91.5%,#f98950 94.8%,#f6774d 97.5%,#fb9d5b 99.7%)"></i>
<i style="left:662px;background:linear-gradient(#655b73 0.3%,#655b73 11.3%,#6d5682 21.2%,#6b577f 25.5%,#795291 31.6%,#715487 37.1%,#7f5096 45.9%,#845097 55.8%,#a54e9c 60.7%,#8e4f98 65.1%,#ad4e98 73.4%,#984f9a 75.5%,#b74e91 81.0%,#9d4f9a 90.9%,#b04e96 93.7%,#ac4e99 99.7%)"></i>
<i style="left:664px;background:linear-gradient(#655b73 0.3%,#655b73 10.2%,#6b577f 15.7%,#75538c 37.6%,#825097 43.1%,#7b5193 48.1%,#835097 50.3%,#77528e 54.7%,#a44e9b 61.3%,#a14e9b 67.3%,#924f99 69.0%,#b64e92 73.4%,#9e4e9b 79.9%,#c94e84 84.9%,#9d4f9a 90.4%,#b14e96 92.6%,#9d4f9a 97.5%,#b64e92 99.7%)"></i>
<i style="left:666px;background:linear-gradient(#655b73 0.3%,#655b73 10.2%,#6b577f 15.1%,#6a587d 19.0%,#725488 23.9%,#705586 32.7%,#795290 37.1%,#74538b 41.5%,#954f99 47.0%,#7e5096 56.3%,#9f4e9b 61.8%,#894f98 66.2%,#964f99 67.9%,#885097 72.3%,#bf4e8c 76.6%,#aa4e9b 83.2%,#b34e94 90.4%,#9d4f9a 94.8%,#a84e9c 99.7%)"></i>
<i style="left:668px;background:linear-gradient(#655b73 0.3%,#655b73 10.2%,#6d5583 21.7%,#6e5583 33.2%,#954f99 51.4%,#865097 54.1%,#994f9a 59.6%,#8e4f98 66.8%,#a64e9c 75.5%,#984f9a 81.0%,#ba4e8f 86.0%,#a14e9b 88.7%,#ad4e99 93.7%,#9c4f9a 99.7%)"></i>
<i style="left:670px;background:linear-gradient(#655b73 0.3%,#655b74 10.7%,#725489 22.8%,#705486 30.5%,#7d5095 36.0%,#7b5192 44.8%,#8f4f98 49.7%,#845097 58.0%,#be4e8c 62.9%,#ac4e99 64.6%,#c04e8a 70.6%,#af4e97 77.7%,#ca4e83 82.7%,#b74e91 87.6%,#c94e84 89.8%,#b44e93 94.8%,#ba4e8f 99.7%)"></i>
<i style="left:672px;background:linear-gradient(#655b73 0.3%,#655b73 11.3%,#705487 19.5%,#705487 25.0%,#9d4f9a 31.6%,#ac4e99 34.3%,#a64e9c 42.6%,#964f99 44.8%,#9f4e9b 50.8%,#d44e7c 60.2%,#b54e93 64.6%,#bd4e8d 67.9%,#d44e7d 69.0%,#f77b4d 70.6%,#e05268 75.5%,#ee594c 77.7%,#d44e7c 79.4%,#e7565a 81.0%,#f67a4d 82.1%,#f6794d 82.7%,#c64e86 84.9%,#c14e8a 86.5%,#e35462 90.9%,#fed583 93.7%,#ffe995 97.0%,#fed785 99.7%)"></i>
<i style="left:674px;background:linear-gradient(#655b73 0.3%,#665b74 14.0%,#6e5584 19.0%,#6c577f 24.5%,#6d5583 26.6%,#8c4f98 31.6%,#9c4f9a 45.3%,#8e4f98 48.1%,#c44e87 52.5%,#914f99 57.4%,#cc4e82 61.8%,#b24e95 67.3%,#ee594b 70.1%,#de516c 71.7%,#e5555e 73.9%,#dc516f 75.0%,#f15f49 76.6%,#cf4e80 78.3%,#ce4e80 78.8%,#f2664a 81.0%,#f15f49 81.6%,#b84e90 83.2%,#ad4e98 84.9%,#ea5754 89.3%,#fba15e 90.9%,#ffea96 93.1%,#fecd7c 94.8%,#ffe995 99.7%)"></i>
<i style="left:676px;background:linear-gradient(#655b73 0.3%,#655b73 10.2%,#6e5584 24.5%,#6b577e 29.4%,#7f5096 34.3%,#77528e 37.1%,#78528f 40.4%,#7d5095 46.4%,#a14e9b 51.9%,#7e5096 57.4%,#944f99 59.6%,#865097 61.3%,#b24e95 68.4%,#f36b4b 71.2%,#da4f74 73.4%,#d84e79 75.0%,#f6774d 78.3%,#e6555d 80.5%,#e35463 82.7%,#b44e93 84.3%,#ac4e99 85.4%,#d74e7a 90.4%,#fec576 93.7%,#ffe592 95.3%,#ffdf8c 97.5%,#fec173 98.6%,#fecd7d 99.7%)"></i>
<i style="left:678px;background:linear-gradient(#655b73 0.3%,#655b73 9.6%,#6d5583 19.0%,#6c5681 29.4%,#7c5193 36.0%,#74538b 41.5%,#7d5095 51.4%,#7b5193 56.3%,#904f99 58.5%,#8e4f98 64.6%,#a54e9c 69.5%,#ee594b 72.3%,#c64e86 73.9%,#c14e8a 76.6%,#da5073 77.7%,#f46f4b 78.8%,#cc4e82 81.6%,#f15d49 83.8%,#d94f75 85.4%,#c34e89 91.5%,#fa8f52 95.3%,#f9854f 96.4%,#ffe592 99.7%)"></i>
<i style="left:680px;background:linear-gradient(#655b73 0.3%,#655b74 10.2%,#6c5681 16.8%,#6b577e 23.4%,#74538b 37.6%,#725489 42.6%,#805096 48.1%,#75538c 54.1%,#8f4f98 64.6%,#885097 67.9%,#a14e9b 69.0%,#f2644a 70.6%,#f9874f 71.7%,#d84f77 73.9%,#be4e8c 76.1%,#f26249 78.3%,#e7565a 79.9%,#f46e4b 83.2%,#c54e87 85.4%,#a94e9c 88.7%,#c14e8a 90.9%,#fa8f52 93.1%,#fed785 94.8%,#ffea96 99.7%)"></i>
<i style="left:682px;background:linear-gradient(#655b73 0.3%,#655b73 10.2%,#6f5585 29.9%,#77528e 32.7%,#73538a 37.6%,#7d5095 42.6%,#795191 45.3%,#825097 49.7%,#78528f 54.1%,#77528e 59.1%,#7a5191 62.4%,#8b4f98 64.0%,#805096 66.8%,#924f99 67.9%,#f6794d 70.6%,#cb4e82 75.0%,#ec584f 77.2%,#e45461 79.4%,#f77b4d 82.1%,#d04e7f 84.3%,#9e4e9b 87.6%,#c84e85 89.8%,#ffdf8c 93.1%,#fec375 94.8%,#ffe390 95.9%,#fec677 97.5%,#ffe592 99.7%)"></i>
<i style="left:684px;background:linear-gradient(#655b73 0.3%,#685978 20.1%,#6f5586 25.0%,#6d5681 27.7%,#705486 30.5%,#7d5094 35.4%,#78528f 43.7%,#a14e9b 49.2%,#984f9a 51.9%,#7c5194 54.1%,#8b4f98 58.5%,#894f98 66.2%,#a84e9c 69.0%,#f9864f 71.2%,#f8844f 71.7%,#db5071 73.4%,#c64e87 75.5%,#cd4e81 76.6%,#f2654a 77.7%,#f4704b 78.3%,#e95657 80.5%,#f2644a 82.7%,#ce4e81 84.3%,#a64e9c 87.1%,#c04e8a 90.4%,#ea5754 91.5%,#f4704b 93.1%,#fecb7b 94.2%,#fecf7e 94.8%,#fb9757 95.9%,#ffe28f 97.0%,#fdb36a 99.7%)"></i>
<i style="left:686px;background:linear-gradient(#655b73 0.3%,#655b73 10.2%,#6e5585 26.1%,#6c5681 28.8%,#7d5095 33.8%,#76538d 38.7%,#795290 43.7%,#9e4e9b 49.7%,#7c5194 54.1%,#964f99 60.7%,#954f99 66.8%,#894f98 68.4%,#c44e88 71.2%,#b24e95 75.0%,#e05267 78.3%,#b74e91 81.0%,#d14e7e 82.7%,#ae4e98 84.9%,#b24e95 90.4%,#e25364 92.0%,#f3684a 94.8%,#f05a49 97.0%,#f3674a 99.7%)"></i>
<i style="left:688px;background:linear-gradient(#655b73 0.3%,#655b74 9.6%,#6f5586 17.9%,#6b577f 21.7%,#6d5682 29.4%,#7e5096 34.3%,#7a5191 38.7%,#974f9a 48.1%,#875097 61.3%,#944f99 66.8%,#845097 67.9%,#855097 71.2%,#a64e9c 75.5%,#994f9a 79.9%,#ac4e99 86.0%,#924f99 90.4%,#9b4f9a 92.6%,#994f9a 95.3%,#875097 97.0%,#8e4f98 99.7%)"></i>
<i style="left:690px;background:linear-gradient(#655b73 0.3%,#655b74 14.6%,#705486 29.9%,#7e5096 34.9%,#855097 38.7%,#7a5192 43.1%,#984f9a 50.3%,#7e5096 55.2%,#9d4f9a 62.9%,#865097 70.1%,#a84e9c 85.4%,#914f99 90.9%,#b14e96 99.7%)"></i>
<i style="left:692px;background:linear-gradient(#655b73 0.3%,#655b73 10.2%,#6d5681 22.8%,#6a587c 26.6%,#7b5193 32.1%,#875097 39.8%,#7d5095 42.0%,#8c4f98 44.2%,#855097 49.2%,#9d4f9a 54.1%,#994f9a 59.1%,#ab4e9a 62.9%,#8d4f98 75.5%,#a34e9b 81.0%,#7a5191 87.6%,#7d5095 90.4%,#984f9a 92.6%,#a34e9b 99.7%)"></i>
<i style="left:694px;background:linear-gradient(#655b73 0.3%,#675a77 14.0%,#705486 19.0%,#6d5682 28.3%,#845097 38.7%,#7b5192 41.5%,#8b4f98 51.9%,#7e5096 54.7%,#845097 59.1%,#795191 61.8%,#a84e9c 67.3%,#924f99 75.0%,#9c4f9a 86.0%,#875097 88.2%,#9f4e9b 99.7%)"></i>
<i style="left:696px;background:linear-gradient(#655b73 0.3%,#655b73 9.1%,#6b577e 15.1%,#795191 38.7%,#75538c 43.1%,#7e5096 48.1%,#7b5193 55.8%,#964f99 59.6%,#825097 64.0%,#9a4f9a 69.0%,#9d4f9a 75.5%,#8b4f98 80.5%,#9f4e9b 83.2%,#9b4f9a 87.6%,#b44e93 92.0%,#a24e9b 94.2%,#a74e9c 99.7%)"></i>
<i style="left:698px;background:linear-gradient(#655b73 0.3%,#69587a 19.5%,#75538c 32.1%,#77528e 40.4%,#6f5585 45.3%,#715487 49.2%,#8a4f98 56.3%,#944f99 62.9%,#7b5193 77.2%,#894f98 82.7%,#815096 86.0%,#9b4f9a 93.1%,#8e4f98 99.7%)"></i></div>
<div class="abs" style="left:0;top:0;width:1px;height:183px;background:#77717f"></div></div>
<div id="bar" class="abs"></div>
<span id="time" class="t">0:00.000</span>
<svg width="700" height="413" viewBox="0 0 700 413">
<rect x="696.4" y="391" width="3.6" height="20" fill="#303030"/>
<rect x="249.4" y="398.9" width="4.8" height="4.6" fill="#454545"/>
<path d="M264.8 398.2l5.4 3l-5.4 3z" fill="#f0f0f0"/>
<path d="M281.2 398.8h1.4v4.8h-1.4zM284 398.8h1.4v4.8h-1.4z" fill="#3c3c3c"/>
<path d="M295.8 398.59999999999997h1.3v5.2h-1.3zM302 398.5v5.4l-4.6-2.7z" fill="#d0d0d0"/>
<path d="M315.4 398.9v4.6l-4-2.3zM319.4 398.9v4.6l-4-2.3z" fill="#b0b0b0"/>
<path d="M326 398.9v4.6l4-2.3zM330 398.9v4.6l4-2.3z" fill="#b0b0b0"/>
<path d="M343.6 398.5v5.4l4.6-2.7zM348.6 398.59999999999997h1.3v5.2h-1.3z" fill="#d0d0d0"/>
<circle cx="362.5" cy="401.2" r="2.4" fill="none" stroke="#e0262c" stroke-width="1.5"/><circle cx="362.5" cy="401.2" r=".9" fill="#e0262c"/>
<path d="M374.2 400.59999999999997h1.8v2.2h4.2v-2.2h1.8v4h-7.8z" fill="#3a86dc"/><path d="M376.2 401.4c.2-2.2 1.6-3.1 3.2-3v-1.2l2.4 2l-2.4 2v-1.2c-1.2-.1-2.3.3-3.2 1.4z" fill="#3a86dc"/>
<path d="M389.4 401.2l2.4-2.4v4.8zM397.8 401.2l-2.4-2.4v4.8zM392.6 398.4h2v5.6h-2z" fill="#c8c8c8"/>
<circle cx="589.8000000000001" cy="400.8" r="2.3" fill="none" stroke="#9a9a9a" stroke-width="1"/><path d="M591.5 402.5l2 2" stroke="#9a9a9a" stroke-width="1.2"/><path d="M586.2 397.2v8" stroke="#9a9a9a" stroke-width="1"/>
<circle cx="605.0" cy="400.8" r="2.3" fill="none" stroke="#9a9a9a" stroke-width="1"/><path d="M606.6999999999999 402.5l2 2" stroke="#9a9a9a" stroke-width="1.2"/><path d="M601.4 397.2v8" stroke="#9a9a9a" stroke-width="1"/>
<circle cx="620.8000000000001" cy="400.8" r="2.3" fill="none" stroke="#9a9a9a" stroke-width="1"/><path d="M622.5 402.5l2 2" stroke="#9a9a9a" stroke-width="1.2"/><path d="M616.4 397.4h8.6" stroke="#9a9a9a" stroke-width="1"/>
<circle cx="637.2" cy="400.8" r="2.3" fill="none" stroke="#363636" stroke-width="1"/><path d="M638.9 402.5l2 2" stroke="#363636" stroke-width="1.2"/><path d="M633 397.4h8.4" stroke="#363636" stroke-width="1"/>
<path d="M652.8 397.2v8M649.4 401.2h6.8" stroke="#343434" stroke-width="1"/>
<circle cx="668.0" cy="400.8" r="2.3" fill="none" stroke="#9a9a9a" stroke-width="1"/><path d="M669.6999999999999 402.5l2 2" stroke="#9a9a9a" stroke-width="1.2"/><path d="M664.4 398.8q-1.4 2.2 0 4.4" stroke="#9a9a9a" stroke-width="1" fill="none"/>
<circle cx="685.8000000000001" cy="400.8" r="2.3" fill="none" stroke="#9a9a9a" stroke-width="1"/><path d="M687.5 402.5l2 2" stroke="#9a9a9a" stroke-width="1.2"/><path d="M681.6 398.8q1.4 2.2 0 4.4" stroke="#9a9a9a" stroke-width="1" fill="none"/>
<path d="M694.2 398.59999999999997v1.2M694.2 400.59999999999997v1.2M694.2 402.59999999999997v1.2" stroke="#4a4a4a" stroke-width="1"/>
</svg>
<div id="dlg" class="abs">
<div id="title" class="abs"><span class="t">Effect - Noise Reduction</span><div id="close" class="abs">&#215;</div></div>
<span class="t lab" style="left:7.9px;top:25.9px">Presets:</span>
<div class="dd" style="left:30.8px;top:23.9px;width:105px;height:9.6px"></div>
<span class="t val" style="left:32.9px;top:25.9px">(Custom)</span>
<div class="sep" style="left:10.0px;top:39.1px;width:326px"></div>
<div class="pill" style="left:12.9px;top:48.9px;width:63.6px;height:11.2px;line-height:9.4px;color:#a8a8a8"><span>Capture Noise Print</span></div>
<span class="t lab" style="left:111.6px;top:52.1px;color:#9a9a9a;transform:scaleX(.905)">Noise Print: Currently Set Noise Print</span>
<svg width="343.5" height="330.3" viewBox="155.7 24.7 343.5 330.3">
<rect x="171.8" y="92.2" width="291.4" height="109.4" fill="#000"/>
<rect x="173.1" y="92.2" width="1" height="109.4" fill="#343434"/>
<line x1="185.6" y1="92.2" x2="185.6" y2="201.6" stroke="#282828" stroke-width="1" stroke-dasharray="1 1.5"/>
<rect x="197.1" y="92.2" width="1" height="109.4" fill="#343434"/>
<line x1="209.6" y1="92.2" x2="209.6" y2="201.6" stroke="#282828" stroke-width="1" stroke-dasharray="1 1.5"/>
<rect x="221.1" y="92.2" width="1" height="109.4" fill="#343434"/>
<line x1="233.6" y1="92.2" x2="233.6" y2="201.6" stroke="#282828" stroke-width="1" stroke-dasharray="1 1.5"/>
<rect x="245.1" y="92.2" width="1" height="109.4" fill="#343434"/>
<line x1="257.6" y1="92.2" x2="257.6" y2="201.6" stroke="#282828" stroke-width="1" stroke-dasharray="1 1.5"/>
<rect x="269.1" y="92.2" width="1" height="109.4" fill="#343434"/>
<line x1="281.6" y1="92.2" x2="281.6" y2="201.6" stroke="#282828" stroke-width="1" stroke-dasharray="1 1.5"/>
<rect x="293.1" y="92.2" width="1" height="109.4" fill="#343434"/>
<line x1="305.6" y1="92.2" x2="305.6" y2="201.6" stroke="#282828" stroke-width="1" stroke-dasharray="1 1.5"/>
<rect x="317.1" y="92.2" width="1" height="109.4" fill="#343434"/>
<line x1="329.6" y1="92.2" x2="329.6" y2="201.6" stroke="#282828" stroke-width="1" stroke-dasharray="1 1.5"/>
<rect x="341.1" y="92.2" width="1" height="109.4" fill="#343434"/>
<line x1="353.6" y1="92.2" x2="353.6" y2="201.6" stroke="#282828" stroke-width="1" stroke-dasharray="1 1.5"/>
<rect x="365.1" y="92.2" width="1" height="109.4" fill="#343434"/>
<line x1="377.6" y1="92.2" x2="377.6" y2="201.6" stroke="#282828" stroke-width="1" stroke-dasharray="1 1.5"/>
<rect x="389.1" y="92.2" width="1" height="109.4" fill="#343434"/>
<line x1="401.6" y1="92.2" x2="401.6" y2="201.6" stroke="#282828" stroke-width="1" stroke-dasharray="1 1.5"/>
<rect x="413.1" y="92.2" width="1" height="109.4" fill="#343434"/>
<line x1="425.6" y1="92.2" x2="425.6" y2="201.6" stroke="#282828" stroke-width="1" stroke-dasharray="1 1.5"/>
<rect x="437.1" y="92.2" width="1" height="109.4" fill="#343434"/>
<line x1="449.6" y1="92.2" x2="449.6" y2="201.6" stroke="#282828" stroke-width="1" stroke-dasharray="1 1.5"/>
<rect x="461.1" y="92.2" width="1" height="109.4" fill="#343434"/>
<rect x="171.8" y="93.8" width="291.4" height="1" fill="#343434"/>
<line x1="171.8" y1="101.8" x2="463.2" y2="101.8" stroke="#262626" stroke-width="1" stroke-dasharray="1 1.5"/>
<rect x="171.8" y="108.8" width="291.4" height="1" fill="#343434"/>
<line x1="171.8" y1="116.8" x2="463.2" y2="116.8" stroke="#262626" stroke-width="1" stroke-dasharray="1 1.5"/>
<rect x="171.8" y="123.8" width="291.4" height="1" fill="#343434"/>
<line x1="171.8" y1="131.8" x2="463.2" y2="131.8" stroke="#262626" stroke-width="1" stroke-dasharray="1 1.5"/>
<rect x="171.8" y="138.8" width="291.4" height="1" fill="#343434"/>
<line x1="171.8" y1="146.8" x2="463.2" y2="146.8" stroke="#262626" stroke-width="1" stroke-dasharray="1 1.5"/>
<rect x="171.8" y="153.8" width="291.4" height="1" fill="#343434"/>
<line x1="171.8" y1="161.8" x2="463.2" y2="161.8" stroke="#262626" stroke-width="1" stroke-dasharray="1 1.5"/>
<rect x="171.8" y="168.8" width="291.4" height="1" fill="#343434"/>
<line x1="171.8" y1="176.8" x2="463.2" y2="176.8" stroke="#262626" stroke-width="1" stroke-dasharray="1 1.5"/>
<rect x="171.8" y="183.8" width="291.4" height="1" fill="#343434"/>
<line x1="171.8" y1="191.8" x2="463.2" y2="191.8" stroke="#262626" stroke-width="1" stroke-dasharray="1 1.5"/>
<rect x="171.8" y="198.8" width="291.4" height="1" fill="#343434"/>
<path d="M173.5 159.8h.9M173.8 161.8h.9M173.6 161.6h.9M173.8 162.4h.9M174.2 164.4h.9M174.4 157.8h.9M174.4 165.4h.9M174.1 157.6h.9M174.7 161.3h.9M174.5 163.4h.9M175.0 158.8h.9M174.9 157.8h.9M175.1 159.5h.9M175.4 164.3h.9M175.4 161.2h.9M175.7 157.9h.9M176.0 159.7h.9M176.0 162.2h.9M176.2 161.5h.9M176.3 160.2h.9M176.8 161.2h.9M176.3 162.5h.9M176.4 160.0h.9M176.8 157.6h.9M177.5 165.9h.9M177.5 164.5h.9M177.1 162.5h.9M177.0 158.8h.9M177.9 165.2h.9M177.8 162.7h.9M178.1 164.8h.9M177.6 165.2h.9M178.4 161.8h.9M178.3 160.2h.9M178.2 165.2h.9M178.3 162.7h.9M179.2 159.7h.9M179.3 161.6h.9M179.3 162.6h.9M179.3 163.7h.9M179.6 163.8h.9M179.5 162.7h.9M179.6 162.2h.9M179.8 160.0h.9M180.0 163.2h.9M180.5 161.4h.9M180.0 163.7h.9M180.1 165.7h.9M180.9 163.6h.9M181.0 162.7h.9M181.0 164.8h.9M180.6 167.4h.9M181.6 164.2h.9M181.4 167.6h.9M181.4 166.0h.9M181.4 160.4h.9M182.3 159.7h.9M182.3 165.2h.9M181.7 165.3h.9M181.8 160.5h.9M182.3 160.4h.9M182.7 163.7h.9M182.5 163.7h.9M182.6 160.3h.9M183.2 161.4h.9M183.1 161.6h.9M183.4 166.1h.9M183.5 160.1h.9M183.9 161.7h.9M183.7 161.7h.9M183.5 166.1h.9M183.5 161.9h.9M184.3 163.4h.9M184.2 164.7h.9M184.6 169.1h.9M184.3 159.4h.9M185.0 162.8h.9M185.0 162.0h.9M185.0 169.5h.9M184.9 161.4h.9M185.4 162.3h.9M185.6 159.7h.9M185.5 160.6h.9M185.5 163.7h.9M186.2 162.2h.9M186.2 162.3h.9M186.1 161.1h.9M186.2 162.0h.9M186.9 167.2h.9M187.0 164.7h.9M187.0 162.2h.9M186.8 166.6h.9M187.3 163.3h.9M187.6 165.1h.9M187.6 168.0h.9M187.2 164.5h.9M188.3 168.0h.9M187.8 169.4h.9M187.7 168.1h.9M188.2 162.0h.9M188.5 167.5h.9M188.5 169.0h.9M188.7 165.1h.9M188.4 164.0h.9M189.2 168.2h.9M189.3 163.8h.9M189.3 165.1h.9M189.1 162.8h.9M190.0 164.3h.9M189.9 169.4h.9M189.5 165.2h.9M189.6 170.6h.9M190.2 170.7h.9M190.5 164.8h.9M190.6 166.1h.9M190.3 165.6h.9M191.2 168.4h.9M190.8 165.9h.9M191.2 170.2h.9M191.2 168.1h.9M191.6 168.9h.9M191.8 163.7h.9M191.6 162.9h.9M191.7 169.9h.9M192.5 169.4h.9M192.4 161.7h.9M192.0 160.4h.9M191.9 161.7h.9M192.6 163.5h.9M192.8 165.1h.9M192.5 169.6h.9M192.8 163.0h.9M193.4 162.3h.9M193.3 172.1h.9M193.3 164.9h.9M193.5 160.6h.9M193.7 167.4h.9M193.7 168.9h.9M194.0 162.1h.9M194.0 168.0h.9M194.3 161.3h.9M194.9 169.0h.9M194.4 162.2h.9M194.5 168.2h.9M195.1 163.9h.9M195.1 166.4h.9M195.4 166.0h.9M195.2 161.8h.9M195.7 164.1h.9M195.8 162.7h.9M195.9 167.2h.9M196.0 165.3h.9M196.4 164.2h.9M196.2 169.8h.9M196.3 169.7h.9M196.7 162.7h.9M197.2 164.9h.9M197.1 161.7h.9M197.1 165.9h.9M197.3 164.8h.9M197.6 165.6h.9M197.8 164.9h.9M197.3 163.3h.9M197.6 162.2h.9M198.2 165.7h.9M198.0 165.7h.9M198.0 163.3h.9M198.5 172.5h.9M199.0 170.6h.9M198.7 164.8h.9M199.1 166.2h.9M198.8 163.4h.9M199.5 172.8h.9M199.5 164.6h.9M199.6 165.6h.9M199.7 165.6h.9M200.1 167.0h.9M200.2 164.1h.9M200.1 164.2h.9M200.2 168.4h.9M200.5 166.8h.9M200.5 169.3h.9M200.7 163.0h.9M200.7 163.5h.9M201.1 168.3h.9M200.9 171.9h.9M201.3 169.4h.9M201.1 164.2h.9M201.9 170.3h.9M201.6 162.1h.9M201.5 164.7h.9M201.8 170.9h.9M202.4 168.3h.9M202.3 168.3h.9M202.4 169.7h.9M202.3 168.1h.9M203.0 171.0h.9M203.0 163.7h.9M203.1 168.5h.9M203.3 167.2h.9M203.7 173.3h.9M203.8 167.6h.9M203.9 166.7h.9M203.6 166.1h.9M204.4 170.7h.9M203.9 170.2h.9M204.3 165.7h.9M204.5 164.8h.9M204.7 168.9h.9M204.9 173.4h.9M204.6 172.0h.9M204.9 167.1h.9M205.2 169.8h.9M205.7 168.1h.9M205.3 167.9h.9M205.6 165.8h.9M206.0 165.4h.9M206.3 169.8h.9M206.3 169.2h.9M206.0 172.3h.9M206.6 168.5h.9M206.4 163.8h.9M206.9 164.8h.9M206.5 171.2h.9M207.4 166.8h.9M207.2 170.5h.9M207.2 171.0h.9M207.0 166.4h.9M208.0 165.2h.9M207.9 168.7h.9M207.9 164.8h.9M207.9 168.5h.9M208.5 165.4h.9M208.5 171.1h.9M208.3 174.3h.9M208.2 165.0h.9M209.0 167.7h.9M209.2 171.1h.9M208.7 165.9h.9M209.0 170.9h.9M209.8 164.7h.9M209.6 170.4h.9M209.4 172.7h.9M209.9 167.9h.9M210.2 170.1h.9M210.3 166.0h.9M210.4 171.8h.9M209.9 171.2h.9M210.8 167.1h.9M211.0 167.0h.9M210.5 167.8h.9M210.7 173.7h.9M211.6 169.7h.9M211.2 169.6h.9M211.2 168.7h.9M211.5 167.2h.9M211.8 169.7h.9M212.1 172.8h.9M211.9 172.9h.9M212.0 167.3h.9M212.4 171.6h.9M212.8 167.5h.9M212.3 175.0h.9M212.5 169.4h.9M213.0 171.4h.9M213.3 173.0h.9M213.3 171.3h.9M212.9 174.8h.9M214.0 169.3h.9M213.8 168.1h.9M213.7 176.9h.9M213.7 171.0h.9M214.7 169.6h.9M214.2 170.2h.9M214.5 168.5h.9M214.4 172.2h.9M214.9 169.6h.9M214.9 168.0h.9M215.2 167.9h.9M215.1 176.1h.9M215.5 172.3h.9M215.6 168.8h.9M215.5 167.8h.9M215.7 171.4h.9M216.3 167.6h.9M216.1 166.4h.9M216.2 167.7h.9M215.9 168.0h.9M216.7 167.9h.9M216.6 171.9h.9M216.7 176.1h.9M216.8 171.4h.9M217.1 169.9h.9M217.3 172.3h.9M217.5 167.3h.9M217.6 168.5h.9M217.9 169.4h.9M217.9 167.1h.9M218.2 170.1h.9M217.8 170.7h.9M218.8 169.5h.9M218.8 172.0h.9M218.3 175.6h.9M218.8 178.0h.9M219.0 167.6h.9M219.5 173.6h.9M219.0 173.6h.9M219.3 169.0h.9M220.0 174.0h.9M220.1 176.0h.9M219.7 175.6h.9M219.9 170.6h.9M220.4 170.4h.9M220.6 167.5h.9M220.6 174.4h.9M220.2 175.5h.9M220.8 169.1h.9M220.7 170.7h.9M220.9 171.3h.9M220.9 170.1h.9M221.4 173.4h.9M221.3 174.5h.9M221.8 174.1h.9M221.7 171.9h.9M222.4 170.4h.9M222.1 169.3h.9M222.4 172.7h.9M222.3 173.7h.9M222.6 173.0h.9M223.0 175.4h.9M222.8 174.9h.9M223.0 175.4h.9M223.1 170.8h.9M223.3 176.4h.9M223.5 173.7h.9M223.2 175.2h.9M224.0 174.5h.9M223.8 176.4h.9M223.7 173.4h.9M224.0 173.2h.9M224.5 174.7h.9M224.9 172.1h.9M224.4 173.7h.9M224.8 173.5h.9M225.4 171.3h.9M225.0 174.6h.9M225.0 169.2h.9M225.2 174.3h.9M225.9 175.1h.9M225.8 171.7h.9M225.9 169.8h.9M226.0 173.2h.9M226.3 172.6h.9M226.5 178.1h.9M226.3 170.8h.9M226.4 173.3h.9M227.2 170.4h.9M227.2 179.6h.9M226.9 175.0h.9M226.7 171.6h.9M227.9 176.2h.9M227.5 178.0h.9M227.6 177.6h.9M227.3 173.4h.9M228.2 170.2h.9M228.3 176.9h.9M228.2 175.2h.9M228.2 178.0h.9M228.8 175.4h.9M228.9 170.8h.9M228.8 173.5h.9M228.7 170.3h.9M229.3 173.3h.9M229.5 172.0h.9M229.2 169.6h.9M229.6 175.3h.9M229.8 172.4h.9M229.8 170.8h.9M230.2 172.6h.9M230.1 177.8h.9M230.3 173.7h.9M230.4 171.1h.9M230.5 170.3h.9M230.6 176.9h.9M231.1 171.6h.9M231.5 175.4h.9M231.4 171.7h.9M231.0 173.7h.9M231.8 178.8h.9M231.6 173.2h.9M232.1 175.2h.9M231.8 173.9h.9M232.3 174.7h.9M232.2 180.9h.9M232.7 174.5h.9M232.6 175.1h.9M233.2 177.9h.9M233.2 181.4h.9M232.7 172.2h.9M232.9 172.1h.9M233.4 173.2h.9M233.9 175.3h.9M233.4 172.4h.9M233.6 179.9h.9M234.4 174.4h.9M233.9 177.4h.9M233.9 177.0h.9M234.2 174.1h.9M234.5 179.7h.9M234.8 172.9h.9M234.6 173.0h.9M234.8 177.6h.9M235.2 170.8h.9M235.3 179.1h.9M235.5 179.6h.9M235.6 173.0h.9M236.3 172.4h.9M236.1 172.5h.9M236.0 178.6h.9M235.8 171.2h.9M236.4 173.5h.9M236.4 174.3h.9M236.9 173.3h.9M236.4 177.2h.9M237.2 178.0h.9M237.1 172.2h.9M237.0 175.7h.9M237.0 176.2h.9M237.9 177.4h.9M238.1 173.7h.9M237.8 177.2h.9M238.0 179.5h.9M238.4 174.0h.9M238.5 175.3h.9M238.6 176.2h.9M238.6 181.1h.9M239.1 174.6h.9M239.3 179.3h.9M239.0 173.9h.9M239.3 179.6h.9M239.4 177.3h.9M239.7 174.7h.9M239.7 174.9h.9M239.4 180.5h.9M240.0 178.2h.9M240.3 176.1h.9M240.2 175.2h.9M240.4 175.9h.9M241.1 174.0h.9M240.8 176.1h.9M240.6 178.6h.9M240.6 174.8h.9M241.5 177.6h.9M241.3 176.2h.9M241.3 180.4h.9M241.3 182.4h.9M241.9 182.1h.9M242.0 180.8h.9M242.1 177.1h.9M241.8 178.5h.9M242.5 174.7h.9M242.7 177.4h.9M242.4 175.0h.9M242.3 176.8h.9M243.0 177.7h.9M243.4 173.8h.9M243.0 178.3h.9M243.5 175.5h.9M244.0 173.2h.9M243.6 174.5h.9M243.5 177.9h.9M243.7 179.3h.9M244.3 175.9h.9M244.4 178.0h.9M244.6 181.5h.9M244.5 174.5h.9M245.0 180.4h.9M245.3 176.9h.9M245.3 175.2h.9M245.2 175.9h.9M245.6 181.6h.9M245.6 174.5h.9M245.4 176.7h.9M245.4 176.7h.9M246.0 180.4h.9M246.2 174.3h.9M246.1 174.4h.9M246.3 182.5h.9M247.0 174.6h.9M246.7 176.3h.9M246.8 178.0h.9M246.7 180.9h.9M247.5 182.3h.9M247.7 184.2h.9M247.5 177.5h.9M247.7 180.3h.9M248.1 178.0h.9M247.8 182.1h.9M247.8 175.6h.9M247.8 181.6h.9M248.6 178.1h.9M248.7 180.4h.9M248.6 182.4h.9M248.8 180.9h.9M249.3 178.2h.9M248.9 176.7h.9M249.1 179.2h.9M249.5 180.6h.9M250.0 176.1h.9M249.9 180.1h.9M249.8 180.5h.9M249.9 177.3h.9M250.2 184.3h.9M250.3 178.9h.9M250.4 176.0h.9M250.7 180.3h.9M250.9 176.3h.9M251.3 176.4h.9M250.8 179.8h.9M251.0 179.3h.9M251.8 181.2h.9M251.6 177.7h.9M251.4 181.5h.9M251.3 182.7h.9M252.3 184.7h.9M252.0 180.7h.9M251.9 183.1h.9M252.0 175.9h.9M252.9 178.0h.9M252.6 180.9h.9M252.9 174.7h.9M252.7 177.8h.9M253.3 183.1h.9M253.6 178.4h.9M253.7 181.1h.9M253.5 178.1h.9M254.3 178.6h.9M254.1 176.5h.9M254.1 180.3h.9M253.8 183.2h.9M254.4 178.7h.9M254.7 181.5h.9M254.4 179.4h.9M254.9 182.1h.9M255.3 177.1h.9M255.0 179.6h.9M255.3 177.2h.9M255.2 177.9h.9M255.7 184.0h.9M255.8 180.9h.9M255.6 176.7h.9M256.0 185.8h.9M256.1 181.5h.9M256.5 180.6h.9M256.3 181.2h.9M256.7 177.5h.9M257.0 182.9h.9M256.8 179.5h.9M257.3 181.2h.9M256.8 182.3h.9M257.8 180.0h.9M257.4 182.9h.9M257.5 177.5h.9M257.8 181.4h.9M258.0 184.9h.9M258.3 179.6h.9M258.4 180.3h.9M258.2 182.3h.9M258.6 181.1h.9M258.8 183.9h.9M258.6 179.0h.9M259.0 179.6h.9M259.4 180.5h.9M259.5 186.3h.9M259.3 182.4h.9M259.4 182.3h.9M260.2 178.8h.9M260.1 178.1h.9M259.9 181.4h.9M259.8 182.0h.9M260.9 181.5h.9M260.6 181.1h.9M260.7 179.7h.9M260.6 181.8h.9M261.3 180.7h.9M261.0 182.7h.9M261.4 185.4h.9M261.4 184.0h.9M262.0 184.3h.9M261.5 181.6h.9M262.0 178.5h.9M262.0 183.5h.9M262.1 179.8h.9M262.5 182.2h.9M262.5 185.3h.9M262.2 180.3h.9M262.7 185.6h.9M263.1 178.1h.9M263.0 180.7h.9M262.7 183.9h.9M263.7 182.5h.9M263.4 177.3h.9M263.6 185.2h.9M263.5 181.8h.9M264.2 178.7h.9M264.0 186.3h.9M264.4 186.9h.9M264.0 185.8h.9M265.1 179.7h.9M264.9 180.8h.9M265.1 182.3h.9M265.1 180.0h.9M265.6 184.3h.9M265.4 185.2h.9M265.6 179.9h.9M265.3 184.8h.9M266.3 182.2h.9M266.2 181.1h.9M265.7 181.1h.9M266.0 181.3h.9M266.5 183.6h.9M266.3 181.3h.9M266.4 179.5h.9M266.3 186.3h.9M267.1 183.4h.9M267.2 180.7h.9M267.0 182.8h.9M267.3 182.3h.9M267.7 181.0h.9M267.8 184.4h.9M267.9 187.7h.9M268.1 181.8h.9M268.6 181.7h.9M268.6 181.0h.9M268.6 181.8h.9M268.3 178.7h.9M268.8 184.1h.9M268.8 187.5h.9M268.8 183.6h.9M268.7 183.0h.9M269.3 186.0h.9M269.3 183.0h.9M269.8 182.3h.9M269.5 182.9h.9M269.9 179.2h.9M270.4 178.9h.9M270.3 179.5h.9M270.2 184.8h.9M270.6 182.8h.9M270.6 182.3h.9M270.6 182.4h.9M270.7 184.8h.9M271.3 182.3h.9M271.7 185.0h.9M271.2 178.8h.9M271.3 184.8h.9M272.2 187.1h.9M272.1 182.5h.9M271.7 186.5h.9M272.3 182.1h.9M272.4 181.4h.9M272.6 186.4h.9M272.7 184.0h.9M272.8 184.1h.9M272.9 185.9h.9M273.2 184.3h.9M273.3 184.7h.9M273.3 181.2h.9M274.1 180.1h.9M274.1 188.2h.9M273.9 184.2h.9M274.0 181.8h.9M274.4 180.6h.9M274.4 180.9h.9M274.1 184.1h.9M274.6 180.8h.9M275.0 181.1h.9M274.9 184.6h.9M275.2 180.9h.9M274.8 180.4h.9M275.6 179.4h.9M275.6 180.9h.9M275.8 181.3h.9M275.5 180.1h.9M276.2 186.0h.9M276.1 182.8h.9M276.2 182.3h.9M276.3 183.4h.9M277.0 182.7h.9M276.7 182.4h.9M276.8 185.5h.9M276.9 181.3h.9M277.7 186.4h.9M277.2 186.2h.9M277.3 182.0h.9M277.2 186.7h.9M278.0 183.5h.9M278.2 180.4h.9M278.0 182.5h.9M277.9 184.2h.9M278.8 186.3h.9M278.6 179.8h.9M278.9 182.8h.9M278.6 185.7h.9M279.1 188.5h.9M279.4 185.2h.9M279.3 182.6h.9M279.1 181.9h.9M279.7 182.9h.9M279.5 180.0h.9M280.0 186.2h.9M279.9 184.9h.9M280.4 184.9h.9M280.1 181.6h.9M280.3 182.1h.9M280.2 183.3h.9M281.1 182.4h.9M280.8 183.2h.9M281.0 187.0h.9M281.2 188.0h.9M281.7 179.5h.9M281.7 189.3h.9M281.4 188.9h.9M281.5 186.9h.9M282.2 182.8h.9M282.3 182.9h.9M281.9 180.1h.9M282.5 185.1h.9M283.0 181.0h.9M282.7 184.5h.9M282.6 182.4h.9M282.7 185.6h.9M283.6 182.1h.9M283.4 182.0h.9M283.4 187.3h.9M283.4 185.8h.9M284.1 184.6h.9M283.8 188.1h.9M284.0 185.1h.9M284.0 185.6h.9M284.5 184.1h.9M284.6 180.6h.9M284.6 186.7h.9M284.8 189.3h.9M285.3 183.1h.9M284.9 189.3h.9M285.3 189.6h.9M285.1 185.5h.9M285.7 181.3h.9M285.7 188.6h.9M286.0 183.7h.9M285.8 180.9h.9M286.2 181.3h.9M286.4 183.7h.9M286.3 185.4h.9M286.1 184.9h.9M286.7 187.0h.9M287.3 183.0h.9M286.8 181.2h.9M286.9 180.3h.9M287.8 185.3h.9M287.6 186.2h.9M287.5 184.1h.9M287.7 184.4h.9M288.2 186.6h.9M288.4 186.2h.9M288.4 185.5h.9M288.4 183.4h.9M288.7 183.0h.9M288.6 187.8h.9M288.8 188.3h.9M288.9 181.0h.9M289.1 185.6h.9M289.2 182.6h.9M289.1 180.4h.9M289.7 186.1h.9M290.2 183.6h.9M289.7 184.7h.9M289.9 182.1h.9M289.7 181.5h.9M290.4 184.3h.9M290.4 190.5h.9M290.4 180.7h.9M290.5 184.2h.9M291.1 182.5h.9M291.0 189.5h.9M291.0 186.2h.9M290.9 185.2h.9M291.9 185.9h.9M291.6 185.6h.9M291.5 188.2h.9M291.6 184.4h.9M292.2 189.4h.9M292.2 180.0h.9M292.3 189.3h.9M292.3 188.2h.9M293.2 184.8h.9M293.0 181.3h.9M293.3 179.2h.9M292.9 181.1h.9M293.4 183.7h.9M293.7 184.1h.9M293.8 190.1h.9M293.6 183.4h.9M294.4 179.7h.9M294.1 187.0h.9M293.9 190.6h.9M294.3 183.6h.9M295.1 181.3h.9M294.7 181.6h.9M294.5 181.7h.9M294.9 188.4h.9M295.4 189.3h.9M295.5 180.9h.9M295.5 184.6h.9M295.7 183.9h.9M296.2 190.2h.9M295.7 188.5h.9M295.7 183.4h.9M296.1 182.2h.9M296.7 183.0h.9M296.6 183.0h.9M296.5 182.4h.9M296.7 188.6h.9M297.3 186.7h.9M297.0 183.5h.9M297.3 190.5h.9M297.3 183.7h.9M297.8 188.1h.9M297.5 182.1h.9M297.6 180.9h.9M297.9 192.0h.9M298.6 183.2h.9M298.2 181.2h.9M298.6 184.1h.9M298.4 187.8h.9M299.1 184.6h.9M299.3 181.1h.9M299.3 182.8h.9M298.7 181.2h.9M299.6 182.2h.9M299.3 183.7h.9M299.7 184.6h.9M299.4 185.8h.9M300.2 186.4h.9M300.5 187.6h.9M300.2 187.8h.9M300.4 185.1h.9M300.8 184.1h.9M300.7 182.7h.9M300.8 180.8h.9M301.0 185.9h.9M301.6 185.5h.9M301.1 180.3h.9M301.1 188.3h.9M301.4 183.5h.9M302.0 186.2h.9M302.0 188.1h.9M302.0 188.3h.9M302.1 185.9h.9M302.6 182.2h.9M302.6 182.3h.9M302.8 182.8h.9M302.5 181.1h.9M303.3 190.3h.9M303.2 186.3h.9M303.0 185.5h.9M303.3 182.9h.9M303.7 183.3h.9M303.7 186.7h.9M303.5 188.1h.9M304.1 187.0h.9M304.5 189.0h.9M304.3 189.4h.9M304.6 185.3h.9M304.7 189.7h.9M304.8 190.9h.9M305.2 192.5h.9M305.1 188.8h.9M305.0 187.7h.9M305.5 185.4h.9M305.3 183.0h.9M305.7 189.1h.9M305.8 189.7h.9M306.0 187.1h.9M306.4 190.1h.9M306.0 191.4h.9M306.2 185.9h.9M306.7 182.8h.9M307.1 183.8h.9M306.8 184.2h.9M306.9 184.8h.9M307.3 186.5h.9M307.2 188.7h.9M307.4 183.4h.9M307.7 182.7h.9M308.2 181.9h.9M307.8 183.5h.9M307.8 184.2h.9M307.8 189.4h.9M308.6 184.7h.9M308.5 185.9h.9M308.4 184.8h.9M308.6 188.4h.9M309.3 186.7h.9M309.1 182.2h.9M309.2 180.6h.9M309.4 183.4h.9M310.0 180.2h.9M309.9 184.3h.9M309.7 188.8h.9M309.8 186.2h.9M310.2 181.5h.9M310.5 184.3h.9M310.4 182.5h.9M310.2 186.6h.9M310.8 183.0h.9M310.9 185.2h.9M310.9 186.7h.9M310.9 186.6h.9M311.4 184.4h.9M311.3 190.6h.9M311.6 186.5h.9M311.8 190.0h.9M312.1 186.4h.9M312.4 182.5h.9M312.1 188.8h.9M312.1 185.4h.9M312.5 188.0h.9M313.0 182.6h.9M312.8 184.1h.9M313.1 183.7h.9M313.5 189.0h.9M313.5 191.5h.9M313.4 183.2h.9M313.4 183.4h.9M313.7 183.0h.9M313.8 185.0h.9M313.9 185.1h.9M313.8 182.2h.9M314.8 185.1h.9M314.7 181.9h.9M314.7 185.2h.9M314.5 191.5h.9M315.2 184.7h.9M315.0 182.4h.9M315.1 191.5h.9M315.0 184.1h.9M315.5 181.1h.9M315.8 181.9h.9M315.9 181.7h.9M316.1 183.5h.9M316.5 186.9h.9M316.6 190.1h.9M316.3 188.7h.9M316.2 189.8h.9M317.0 189.5h.9M316.7 184.3h.9M317.3 180.9h.9M317.0 187.8h.9M317.5 186.2h.9M317.6 184.3h.9M317.6 186.4h.9M317.6 190.7h.9M318.4 181.8h.9M318.0 183.1h.9M318.1 184.8h.9M317.9 192.2h.9M318.9 185.4h.9M319.1 180.6h.9M318.6 181.9h.9M319.1 183.8h.9M319.6 180.7h.9M319.6 186.7h.9M319.4 182.2h.9M319.1 184.2h.9M319.7 188.9h.9M320.1 189.8h.9M319.8 189.1h.9M320.3 185.2h.9M320.3 181.2h.9M320.7 189.8h.9M320.5 190.0h.9M320.6 190.4h.9M321.5 189.2h.9M321.2 190.9h.9M321.3 184.1h.9M321.1 186.0h.9M321.5 185.9h.9M321.8 187.6h.9M321.9 187.9h.9M321.7 185.5h.9M322.2 181.6h.9M322.7 186.8h.9M322.2 183.6h.9M322.4 186.0h.9M323.1 192.1h.9M323.2 182.2h.9M322.8 184.7h.9M322.8 185.4h.9M323.7 183.3h.9M323.5 183.2h.9M323.6 187.3h.9M323.6 192.2h.9M324.3 180.9h.9M324.5 182.4h.9M324.5 186.5h.9M324.2 187.8h.9M324.7 191.4h.9M324.9 183.2h.9M324.7 184.8h.9M324.9 187.0h.9M325.2 180.4h.9M325.5 187.6h.9M325.6 183.3h.9M325.4 187.8h.9M326.2 184.7h.9M325.9 185.8h.9M326.2 186.4h.9M326.0 182.4h.9M326.8 184.5h.9M326.8 181.3h.9M326.6 181.0h.9M326.8 188.0h.9M326.9 186.6h.9M327.1 187.4h.9M327.1 181.3h.9M327.4 182.3h.9M328.0 186.7h.9M327.9 190.6h.9M327.6 184.9h.9M327.6 188.0h.9M328.6 181.7h.9M328.1 192.5h.9M328.2 186.7h.9M328.4 188.9h.9M329.2 186.9h.9M328.8 189.0h.9M328.9 182.6h.9M328.9 184.0h.9M329.9 186.4h.9M329.6 184.2h.9M329.4 181.8h.9M329.5 185.5h.9M330.1 189.6h.9M330.1 190.3h.9M330.2 188.7h.9M330.0 187.6h.9M331.1 181.3h.9M331.0 190.0h.9M331.1 189.7h.9M331.0 185.6h.9M331.3 183.2h.9M331.5 188.1h.9M331.2 181.7h.9M331.4 184.6h.9M331.9 182.5h.9M332.2 180.8h.9M332.0 183.2h.9M331.9 184.3h.9M332.8 182.4h.9M332.5 182.4h.9M332.7 187.0h.9M332.6 185.3h.9M333.3 186.8h.9M332.9 187.3h.9M333.4 185.6h.9M333.2 187.2h.9M333.9 183.6h.9M333.9 181.2h.9M334.1 185.2h.9M333.6 184.2h.9M334.2 187.6h.9M334.3 186.3h.9M334.6 181.2h.9M334.5 182.9h.9M334.7 187.0h.9M334.9 184.5h.9M335.0 191.6h.9M335.2 189.2h.9M335.6 181.2h.9M335.4 188.4h.9M335.8 184.8h.9M335.6 188.4h.9M336.4 183.1h.9M336.1 186.7h.9M336.0 190.7h.9M336.3 185.6h.9M336.6 181.4h.9M336.6 187.4h.9M336.5 181.5h.9M336.5 185.1h.9M337.2 184.5h.9M337.4 181.0h.9M337.4 186.1h.9M337.4 186.2h.9M337.8 187.6h.9M338.3 185.2h.9M338.0 180.6h.9M338.3 185.9h.9M338.9 181.9h.9M338.7 184.6h.9M338.8 182.5h.9M338.7 181.9h.9M339.5 190.5h.9M339.3 186.5h.9M338.9 182.2h.9M339.2 181.3h.9M339.6 192.5h.9M339.5 186.1h.9M339.5 184.8h.9M339.7 181.2h.9M340.5 182.8h.9M340.5 183.4h.9M340.3 184.3h.9M340.5 182.2h.9M341.2 183.2h.9M341.2 182.4h.9M341.0 187.7h.9M340.8 187.2h.9M341.5 192.0h.9M341.4 184.0h.9M341.8 192.1h.9M341.8 186.6h.9M342.3 184.0h.9M342.2 187.8h.9M342.4 183.4h.9M342.0 186.7h.9M343.0 191.0h.9M342.7 185.1h.9M342.7 184.7h.9M342.5 182.7h.9M343.2 185.2h.9M343.5 185.2h.9M343.5 187.1h.9M343.5 182.9h.9M343.9 184.6h.9M344.0 180.6h.9M343.8 192.6h.9M344.2 190.8h.9M344.3 189.8h.9M344.6 183.1h.9M344.7 186.9h.9M344.5 184.5h.9M345.4 188.3h.9M345.1 191.5h.9M344.9 190.1h.9M345.5 180.1h.9M345.9 189.1h.9M345.6 181.3h.9M346.0 183.1h.9M345.9 182.4h.9M346.4 182.1h.9M346.2 184.8h.9M346.2 183.8h.9M346.2 184.5h.9M346.7 180.7h.9M346.9 189.3h.9M347.3 185.9h.9M347.2 189.6h.9M347.8 185.1h.9M347.6 189.2h.9M347.6 182.1h.9M347.8 184.4h.9M347.9 187.9h.9M348.0 185.8h.9M348.5 183.4h.9M348.0 184.8h.9M348.9 180.9h.9M348.5 187.2h.9M348.9 182.9h.9M349.1 191.2h.9M349.5 181.5h.9M349.3 184.1h.9M349.7 193.5h.9M349.7 185.1h.9M349.8 184.3h.9M349.9 182.0h.9M349.8 181.5h.9M350.3 181.3h.9M350.5 183.5h.9M350.5 183.6h.9M350.4 185.7h.9M350.4 184.6h.9M351.0 181.7h.9M351.2 185.3h.9M351.0 187.5h.9M351.1 184.8h.9M352.0 181.1h.9M351.7 185.7h.9M351.6 182.0h.9M351.7 183.3h.9M352.3 187.6h.9M352.2 184.2h.9M352.5 186.7h.9M352.6 185.5h.9M352.8 191.1h.9M353.1 183.9h.9M352.8 184.6h.9M353.3 182.2h.9M353.5 183.1h.9M353.9 181.7h.9M353.7 188.5h.9M353.4 181.5h.9M354.4 183.9h.9M354.0 190.6h.9M353.9 185.7h.9M354.0 181.1h.9M354.6 181.4h.9M354.8 184.8h.9M354.6 190.4h.9M354.7 189.3h.9M355.2 184.9h.9M355.7 187.3h.9M355.2 187.1h.9M355.3 185.6h.9M356.1 181.4h.9M356.0 182.3h.9M356.3 189.6h.9M355.7 187.3h.9M356.5 188.1h.9M356.8 183.2h.9M356.4 188.5h.9M356.6 193.0h.9M357.4 187.2h.9M357.1 181.8h.9M357.3 184.5h.9M357.1 189.9h.9M357.7 189.0h.9M358.0 181.5h.9M357.6 181.5h.9M357.5 180.9h.9M358.5 192.9h.9M358.4 188.9h.9M358.3 186.9h.9M358.7 189.8h.9M358.8 185.7h.9M359.1 187.5h.9M359.2 180.7h.9M359.0 188.9h.9M359.5 188.6h.9M359.5 186.8h.9M359.6 184.9h.9M359.3 180.6h.9M360.1 192.7h.9M360.3 184.9h.9M360.1 183.3h.9M360.3 187.9h.9M360.9 190.9h.9M361.0 188.1h.9M361.0 185.1h.9M360.5 182.8h.9M361.6 182.3h.9M361.2 185.8h.9M361.4 191.1h.9M361.7 183.1h.9M362.2 184.6h.9M361.9 184.2h.9M361.8 182.8h.9M361.8 186.0h.9M362.5 183.2h.9M362.7 186.2h.9M362.8 183.6h.9M362.5 185.1h.9M363.2 186.0h.9M363.3 184.2h.9M363.2 183.4h.9M363.3 192.1h.9M363.6 186.3h.9M363.7 182.3h.9M364.0 189.3h.9M363.9 186.0h.9M364.7 181.6h.9M364.3 183.2h.9M364.3 182.1h.9M364.5 182.0h.9M365.2 190.4h.9M364.9 190.4h.9M365.2 182.9h.9M365.0 190.2h.9M365.4 185.6h.9M365.6 189.7h.9M365.7 186.0h.9M365.8 183.4h.9M366.3 181.5h.9M365.9 185.8h.9M366.5 185.8h.9M366.4 180.7h.9M366.6 185.8h.9M366.7 182.1h.9M366.6 183.2h.9M366.7 191.0h.9M367.5 180.7h.9M367.4 184.7h.9M367.4 191.5h.9M367.4 189.6h.9M367.8 182.1h.9M367.8 184.5h.9M368.3 187.7h.9M367.7 188.1h.9M368.7 184.8h.9M368.6 182.0h.9M368.8 190.3h.9M368.8 188.8h.9M369.3 181.1h.9M369.1 186.4h.9M369.2 190.1h.9M369.3 189.4h.9M369.7 189.7h.9M369.6 187.8h.9M369.5 181.7h.9M369.5 186.6h.9M370.4 189.8h.9M370.5 182.6h.9M370.6 185.1h.9M370.1 182.5h.9M371.0 184.2h.9M371.0 189.0h.9M371.3 182.3h.9M371.1 185.2h.9M371.7 192.7h.9M371.4 185.9h.9M371.7 185.0h.9M371.5 185.5h.9M372.0 189.4h.9M372.4 185.0h.9M372.2 185.7h.9M372.1 187.5h.9M372.8 184.8h.9M372.9 185.2h.9M372.9 189.7h.9M373.0 183.2h.9M373.2 184.1h.9M373.3 191.4h.9M373.5 185.1h.9M373.5 190.8h.9M374.0 183.6h.9M374.0 189.7h.9M374.1 188.7h.9M373.9 187.1h.9M374.4 190.7h.9M374.9 189.5h.9M374.7 180.1h.9M374.3 185.7h.9M375.1 184.4h.9M375.0 182.3h.9M375.2 187.3h.9M375.1 180.5h.9M376.1 192.4h.9M375.9 181.4h.9M375.5 187.4h.9M375.7 184.7h.9M376.2 185.2h.9M376.3 192.7h.9M376.2 185.1h.9M376.3 184.8h.9M377.0 189.1h.9M376.9 187.8h.9M377.0 181.9h.9M377.2 189.5h.9M377.7 186.0h.9M377.9 182.1h.9M377.8 183.7h.9M377.9 185.1h.9M378.0 184.5h.9M378.4 187.2h.9M378.0 181.0h.9M378.0 193.3h.9M379.0 181.0h.9M378.5 186.1h.9M378.9 186.0h.9M378.6 184.0h.9M379.6 185.3h.9M379.4 189.5h.9M379.3 182.2h.9M379.1 193.3h.9M379.7 186.3h.9M380.2 182.6h.9M380.2 181.6h.9M379.7 189.4h.9M380.5 181.0h.9M380.5 183.0h.9M380.6 184.2h.9M380.8 189.1h.9M381.1 191.1h.9M380.9 186.6h.9M381.1 191.2h.9M381.4 182.4h.9M382.1 181.8h.9M381.6 190.0h.9M381.7 188.2h.9M381.8 185.4h.9M382.1 181.7h.9M382.4 185.9h.9M382.1 184.4h.9M382.1 181.8h.9M382.8 182.4h.9M382.9 187.9h.9M383.1 187.6h.9M383.1 185.1h.9M383.4 184.0h.9M383.5 183.9h.9M383.7 180.9h.9M383.6 189.6h.9M384.1 192.4h.9M384.1 183.3h.9M384.0 180.7h.9M384.2 186.4h.9M384.9 183.7h.9M384.8 181.3h.9M385.0 187.0h.9M385.1 188.2h.9M385.1 183.5h.9M385.7 184.1h.9M385.4 187.5h.9M385.4 182.7h.9M386.2 191.8h.9M385.9 181.4h.9M385.8 183.8h.9M385.9 186.4h.9M386.5 180.6h.9M386.6 189.1h.9M386.6 192.5h.9M386.6 190.7h.9M387.4 191.4h.9M387.5 189.2h.9M387.0 182.0h.9M387.3 185.7h.9M387.8 188.7h.9M387.5 183.5h.9M388.0 182.7h.9M388.0 183.4h.9M388.2 187.0h.9M388.3 187.0h.9M388.2 189.0h.9M388.5 185.4h.9M388.8 183.8h.9M388.9 188.6h.9M388.7 185.0h.9M389.2 186.0h.9M389.7 188.8h.9M389.9 186.1h.9M389.8 183.8h.9M389.6 181.6h.9M390.2 186.6h.9M390.5 182.2h.9M390.0 189.5h.9M390.1 183.1h.9M390.8 190.1h.9M390.7 183.0h.9M390.6 183.2h.9M390.7 182.8h.9M391.4 185.6h.9M391.6 181.8h.9M391.2 182.3h.9M391.1 184.4h.9M391.8 184.7h.9M391.7 189.2h.9M391.9 184.2h.9M391.9 187.2h.9M392.8 182.3h.9M392.6 182.8h.9M392.8 191.1h.9M392.5 192.3h.9M393.4 183.8h.9M393.1 183.3h.9M392.9 182.0h.9M393.5 186.8h.9M393.7 185.3h.9M393.7 184.3h.9M393.9 186.5h.9M393.8 188.9h.9M394.2 189.2h.9M394.6 180.0h.9M394.2 187.2h.9M394.4 184.2h.9M395.3 185.9h.9M395.2 188.9h.9M394.8 188.1h.9M395.2 187.4h.9M395.9 183.6h.9M395.4 187.8h.9M395.8 180.6h.9M395.5 187.3h.9M396.4 189.2h.9M396.0 183.2h.9M396.3 181.1h.9M396.5 181.9h.9M397.0 187.0h.9M396.6 184.7h.9M397.1 187.1h.9M397.0 189.8h.9M397.2 184.3h.9M397.4 183.6h.9M397.2 190.2h.9M397.3 189.6h.9M398.0 184.2h.9M398.1 183.2h.9M398.0 186.8h.9M398.1 185.0h.9M398.5 185.8h.9M398.5 186.9h.9M398.7 187.2h.9M398.9 186.6h.9M399.5 184.6h.9M398.9 189.8h.9M399.1 184.9h.9M399.4 185.7h.9M399.9 184.0h.9M400.0 184.7h.9M400.0 190.3h.9M399.6 184.4h.9M400.3 186.6h.9M400.3 187.3h.9M400.3 186.2h.9M400.1 185.2h.9M401.2 182.2h.9M401.0 183.0h.9M400.9 185.2h.9M401.2 186.4h.9M401.3 191.8h.9M401.6 190.2h.9M401.7 182.6h.9M401.7 182.3h.9M402.0 183.6h.9M401.9 181.8h.9M402.2 189.4h.9M402.2 190.2h.9M402.8 187.7h.9M402.9 188.6h.9M402.6 183.7h.9M402.8 187.9h.9M403.7 187.2h.9M403.5 190.3h.9M403.4 182.4h.9M403.4 181.4h.9M404.1 188.6h.9M404.1 184.6h.9M403.8 183.2h.9M404.1 184.0h.9M404.7 181.4h.9M404.8 185.1h.9M404.3 192.3h.9M404.4 187.0h.9M405.0 188.5h.9M405.2 187.4h.9M405.1 186.2h.9M405.3 187.6h.9M405.9 183.5h.9M405.5 185.5h.9M405.6 188.2h.9M405.8 183.7h.9M406.7 192.1h.9M406.4 181.9h.9M406.2 189.0h.9M406.4 183.2h.9M406.7 191.1h.9M406.8 186.7h.9M407.1 185.1h.9M407.0 180.8h.9M407.6 183.9h.9M407.9 190.4h.9M407.4 190.6h.9M407.5 190.9h.9M408.4 187.8h.9M408.4 183.1h.9M408.2 182.2h.9M408.3 190.1h.9M408.8 186.3h.9M408.6 185.8h.9M409.0 187.0h.9M408.7 180.3h.9M409.5 185.8h.9M409.7 182.0h.9M409.3 188.8h.9M409.3 184.9h.9M409.8 189.7h.9M409.8 185.5h.9M409.9 188.6h.9M409.9 183.4h.9M410.6 183.7h.9M410.6 188.3h.9M410.6 182.9h.9M410.3 184.6h.9M411.5 182.0h.9M411.3 183.7h.9M411.4 190.1h.9M411.0 183.5h.9M411.7 185.1h.9M411.6 191.0h.9M411.7 186.8h.9M412.0 185.6h.9M412.1 184.7h.9M412.6 186.1h.9M412.3 185.1h.9M412.4 190.4h.9M412.8 192.0h.9M413.3 183.5h.9M413.2 188.5h.9M413.0 182.1h.9M413.9 188.8h.9M413.5 185.0h.9M413.6 186.0h.9M413.7 187.4h.9M414.1 184.6h.9M414.1 187.7h.9M414.2 189.8h.9M414.4 190.9h.9M414.9 187.5h.9M415.0 186.5h.9M414.6 183.3h.9M414.8 188.5h.9M415.4 185.4h.9M415.5 191.0h.9M415.1 182.9h.9M415.4 191.7h.9M416.0 188.1h.9M415.9 189.2h.9M416.2 186.8h.9M416.1 184.8h.9M416.5 187.4h.9M416.7 189.6h.9M416.5 183.0h.9M416.4 181.8h.9M417.5 181.3h.9M417.1 185.5h.9M417.0 189.7h.9M417.3 182.7h.9M418.0 180.7h.9M418.1 185.6h.9M417.5 185.7h.9M417.8 182.4h.9M418.5 181.4h.9M418.6 185.2h.9M418.5 190.5h.9M418.2 185.6h.9M418.9 187.4h.9M418.7 190.2h.9M419.1 188.4h.9M419.1 185.8h.9M419.4 192.4h.9M419.7 180.8h.9M419.6 183.8h.9M419.8 184.5h.9M420.3 188.2h.9M420.0 186.7h.9M420.4 181.9h.9M420.4 182.3h.9M420.8 182.4h.9M420.7 188.8h.9M421.0 190.0h.9M420.6 181.5h.9M421.1 182.9h.9M421.3 185.6h.9M421.5 183.7h.9M421.6 183.2h.9M421.9 191.4h.9M422.0 181.8h.9M422.1 187.7h.9M421.7 187.9h.9M422.3 181.9h.9M422.3 182.4h.9M422.5 187.2h.9M422.3 181.8h.9M423.0 190.3h.9M423.0 183.1h.9M423.5 191.6h.9M423.0 185.1h.9M424.0 185.6h.9M423.9 192.0h.9M423.8 185.8h.9M424.0 189.2h.9M424.5 190.7h.9M424.7 188.9h.9M424.7 182.5h.9M424.4 188.8h.9M425.0 186.5h.9M425.3 188.2h.9M425.0 187.0h.9M425.1 186.2h.9M425.4 183.7h.9M425.3 182.8h.9M425.7 187.8h.9M425.8 185.0h.9M426.5 180.8h.9M425.9 187.2h.9M426.0 187.3h.9M426.2 187.3h.9M426.9 190.9h.9M427.0 184.8h.9M426.7 182.4h.9M427.0 188.3h.9M427.3 186.0h.9M427.1 192.9h.9M427.2 187.4h.9M427.6 186.6h.9M428.0 185.2h.9M428.2 187.9h.9M428.3 189.0h.9M428.0 182.4h.9M428.8 185.7h.9M428.8 188.7h.9M428.7 186.5h.9M428.7 189.9h.9M429.3 193.0h.9M428.9 182.7h.9M429.3 187.6h.9M429.0 185.9h.9M430.0 183.2h.9M429.8 183.9h.9M429.5 181.5h.9M430.1 188.9h.9M430.3 183.0h.9M430.3 186.3h.9M430.7 184.7h.9M430.3 187.9h.9M430.9 192.6h.9M431.3 180.8h.9M431.1 183.6h.9M430.8 188.8h.9M431.3 190.3h.9M431.7 185.1h.9M431.8 182.0h.9M431.9 187.4h.9M432.4 180.7h.9M432.0 189.4h.9M432.2 181.2h.9M432.5 183.0h.9M432.9 182.2h.9M432.9 184.8h.9M432.6 183.5h.9M432.7 182.3h.9M433.5 184.4h.9M433.6 182.3h.9M433.2 186.2h.9M433.5 186.7h.9M433.9 185.8h.9M434.1 185.7h.9M433.7 189.7h.9M434.1 192.6h.9M434.8 183.5h.9M434.4 187.7h.9M434.7 184.7h.9M434.4 181.0h.9M435.2 186.0h.9M434.9 185.2h.9M435.4 191.3h.9M435.3 188.2h.9M435.6 188.9h.9M436.1 182.2h.9M436.0 192.5h.9M435.8 183.5h.9M436.4 186.0h.9M436.6 187.0h.9M436.7 181.5h.9M436.5 187.4h.9M436.8 187.1h.9M436.9 186.6h.9M437.3 192.2h.9M437.3 185.7h.9M437.7 182.6h.9M437.6 183.7h.9M437.8 182.7h.9M437.8 189.0h.9M438.1 187.5h.9M438.0 185.5h.9M438.3 181.5h.9M438.4 188.6h.9M438.6 185.6h.9M438.8 185.9h.9M438.5 186.3h.9M439.0 184.9h.9M439.1 183.9h.9M439.2 180.9h.9M439.6 183.9h.9M439.6 182.9h.9M440.1 191.6h.9M440.3 184.6h.9M439.7 192.9h.9M440.2 189.8h.9M440.3 185.8h.9M440.5 184.3h.9M440.9 185.0h.9M440.8 190.7h.9M441.1 192.2h.9M441.3 190.1h.9M441.3 180.1h.9M441.0 182.3h.9M441.6 183.1h.9M441.6 187.1h.9M441.7 191.2h.9M441.8 183.7h.9M442.3 183.3h.9M442.3 184.1h.9M442.3 189.6h.9M442.2 185.3h.9M443.1 190.0h.9M442.9 185.4h.9M443.1 190.1h.9M442.8 190.5h.9M443.8 187.3h.9M443.7 191.1h.9M443.6 182.5h.9M443.8 187.2h.9M443.9 189.1h.9M444.0 184.2h.9M444.0 186.3h.9M443.9 182.5h.9M445.1 186.8h.9M444.7 184.2h.9M444.8 189.0h.9M444.9 185.1h.9M445.3 181.5h.9M445.7 183.4h.9M445.5 182.1h.9M445.4 185.7h.9M445.8 188.3h.9M445.7 181.7h.9M446.0 182.7h.9M446.1 183.5h.9M446.7 180.6h.9M446.5 184.7h.9M446.7 184.0h.9M446.5 185.3h.9M447.3 189.0h.9M447.4 184.7h.9M447.2 187.3h.9M447.1 182.5h.9M447.9 187.0h.9M447.7 184.7h.9M447.6 185.8h.9M448.0 187.0h.9M448.3 186.6h.9M448.6 189.7h.9M448.4 183.9h.9M448.4 194.4h.9M449.0 187.9h.9M449.2 188.7h.9M449.2 184.0h.9M449.1 182.0h.9M449.8 186.2h.9M449.4 187.0h.9M449.4 181.2h.9M449.8 185.2h.9M450.0 185.1h.9M449.9 186.6h.9M450.4 192.2h.9M450.3 189.1h.9M450.8 191.7h.9M450.5 186.1h.9M451.1 187.9h.9M450.9 184.1h.9M451.5 189.4h.9M451.3 186.5h.9M451.6 182.7h.9M451.2 184.3h.9M452.0 189.3h.9M452.1 185.0h.9M452.1 179.9h.9M451.9 188.2h.9M452.3 181.5h.9M452.4 181.3h.9M452.5 184.7h.9M452.3 188.7h.9M452.9 182.0h.9M453.3 181.9h.9M453.2 189.5h.9M453.1 190.3h.9M453.8 191.2h.9M454.1 184.6h.9M453.9 187.9h.9M453.6 184.9h.9M454.1 188.4h.9M454.3 186.4h.9M454.4 181.0h.9M454.1 186.1h.9M454.7 192.3h.9M454.9 191.1h.9M455.2 187.8h.9M454.7 185.2h.9M455.6 186.2h.9M455.3 187.0h.9M455.8 182.5h.9M455.4 181.5h.9M456.0 185.6h.9M456.1 182.9h.9M456.4 181.0h.9M456.1 190.1h.9M456.8 181.7h.9M456.7 186.2h.9M456.9 187.4h.9M457.0 190.0h.9M457.2 185.9h.9M457.3 187.1h.9M457.4 185.2h.9M457.3 181.7h.9M458.3 181.2h.9M457.8 187.1h.9M457.8 190.7h.9M458.1 184.4h.9M458.7 185.0h.9M458.5 186.4h.9M458.6 186.7h.9M458.9 185.1h.9M459.4 191.1h.9M459.4 189.0h.9M459.4 185.2h.9M459.3 183.3h.9M459.8 186.9h.9M459.9 188.1h.9M459.9 187.2h.9M460.1 182.6h.9M460.1 186.7h.9M460.2 185.1h.9M460.5 183.8h.9M460.4 185.7h.9M460.9 182.1h.9M461.2 194.4h.9M461.2 183.6h.9M460.8 192.0h.9M461.5 180.6h.9M461.6 182.1h.9M461.6 181.4h.9M461.7 181.9h.9" stroke="#8a1722" stroke-width="1" fill="none" opacity=".8"/>
<polygon fill="#6e121c" opacity=".5" points="173.6,159.4 174.2,158.6 174.8,160.8 175.4,158.9 176.0,161.5 176.6,160.2 177.2,161.1 177.8,160.1 178.4,159.7 179.0,162.1 179.6,161.9 180.2,160.2 180.8,162.2 181.4,161.2 182.0,160.7 182.6,161.3 183.2,163.0 183.8,162.1 184.4,160.7 185.0,162.5 185.6,163.2 186.2,162.9 186.8,163.7 187.4,162.0 188.0,162.3 188.6,162.3 189.2,161.9 189.8,164.2 190.4,164.3 191.0,164.0 191.6,163.1 192.2,163.3 192.8,164.1 193.4,163.4 194.0,162.4 194.6,163.9 195.2,162.5 195.8,164.2 196.4,163.4 197.0,163.2 197.6,164.9 198.2,164.4 198.8,163.5 199.4,165.7 200.0,164.6 200.6,165.8 201.2,164.5 201.8,166.5 202.4,165.5 203.0,165.8 203.6,167.0 204.2,166.6 204.8,165.5 205.4,167.1 206.0,165.3 206.6,165.0 207.2,167.7 207.8,165.8 208.4,166.5 209.0,166.8 209.6,166.8 210.2,168.8 210.8,168.9 211.4,167.9 212.0,168.3 212.6,166.8 213.2,168.7 213.8,168.9 214.4,169.3 215.0,167.5 215.6,168.8 216.2,168.8 216.8,169.3 217.4,168.2 218.0,168.8 218.6,169.9 219.2,169.9 219.8,169.4 220.4,170.0 221.0,170.3 221.6,171.2 222.2,170.0 222.8,170.5 223.4,170.3 224.0,172.1 224.6,170.7 225.2,171.0 225.8,171.3 226.4,172.0 227.0,170.3 227.6,171.4 228.2,171.4 228.8,173.7 229.4,173.1 230.0,172.8 230.6,172.7 231.2,173.0 231.8,173.8 232.4,174.4 233.0,173.1 233.6,174.9 234.2,174.9 234.8,173.1 235.4,175.1 236.0,174.3 236.6,174.7 237.2,174.6 237.8,175.6 238.4,173.6 239.0,174.6 239.6,174.3 240.2,173.9 240.8,175.3 241.4,176.6 242.0,174.0 242.6,174.2 243.2,174.6 243.8,176.4 244.4,176.6 245.0,175.9 245.6,175.4 246.2,177.1 246.8,177.3 247.4,175.9 248.0,175.6 248.6,175.7 249.2,177.8 249.8,177.7 250.4,178.9 251.0,177.0 251.6,177.5 252.2,178.9 252.8,177.5 253.4,177.3 254.0,179.8 254.6,178.5 255.2,178.1 255.8,177.7 256.4,177.8 257.0,179.1 257.6,179.2 258.2,180.9 258.8,180.4 259.4,179.3 260.0,179.7 260.6,181.5 261.2,178.7 261.8,179.2 262.4,180.4 263.0,181.9 263.6,180.8 264.2,180.7 264.8,181.0 265.4,181.8 266.0,181.2 266.6,181.2 267.2,180.3 267.8,179.9 268.4,181.3 269.0,182.4 269.6,179.9 270.2,181.7 270.8,180.7 271.4,182.1 272.0,181.4 272.6,180.0 273.2,181.2 273.8,181.7 274.4,182.1 275.0,182.3 275.6,180.8 276.2,180.2 276.8,181.8 277.4,180.6 278.0,181.9 278.6,181.5 279.2,180.6 279.8,182.0 280.4,180.9 281.0,181.9 281.6,181.2 282.2,182.6 282.8,181.1 283.4,183.4 284.0,182.6 284.6,180.8 285.2,182.8 285.8,183.2 286.4,182.6 287.0,180.8 287.6,181.8 288.2,181.9 288.8,181.4 289.4,183.2 290.0,183.4 290.6,181.4 291.2,183.9 291.8,183.4 292.4,181.9 293.0,181.2 293.6,182.3 294.2,182.3 294.8,184.1 295.4,182.5 296.0,184.2 296.6,184.0 297.2,184.0 297.8,182.8 298.4,184.2 299.0,184.2 299.6,182.3 300.2,181.9 300.8,183.7 301.4,184.2 302.0,184.0 302.6,184.1 303.2,183.2 303.8,184.4 304.4,181.7 305.0,182.0 305.6,183.8 306.2,182.7 306.8,181.6 307.4,183.8 308.0,182.9 308.6,182.2 309.2,181.9 309.8,182.9 310.4,183.2 311.0,183.6 311.6,182.7 312.2,183.9 312.8,182.3 313.4,183.7 314.0,183.7 314.6,183.4 315.2,181.7 315.8,181.6 316.4,183.8 317.0,184.5 317.6,183.7 318.2,182.5 318.8,184.0 319.4,183.3 320.0,184.5 320.6,182.7 321.2,181.8 321.8,183.8 322.4,182.0 323.0,183.6 323.6,182.1 324.2,182.8 324.8,183.9 325.4,183.9 326.0,183.5 326.6,183.0 327.2,181.8 327.8,181.9 328.4,182.6 329.0,182.0 329.6,182.2 330.2,183.6 330.8,182.3 331.4,184.5 332.0,184.5 332.6,184.2 333.2,181.6 333.8,182.9 334.4,183.1 335.0,182.7 335.6,184.1 336.2,184.4 336.8,183.4 337.4,183.5 338.0,184.3 338.6,182.7 339.2,184.0 339.8,181.7 340.4,184.3 341.0,182.0 341.6,184.6 342.2,181.9 342.8,181.7 343.4,183.4 344.0,182.9 344.6,182.6 345.2,183.1 345.8,182.2 346.4,183.8 347.0,182.8 347.6,183.3 348.2,183.1 348.8,184.3 349.4,182.0 350.0,182.1 350.6,182.1 351.2,181.7 351.8,184.3 352.4,184.3 353.0,182.5 353.6,183.3 354.2,182.8 354.8,182.7 355.4,183.2 356.0,183.1 356.6,183.3 357.2,183.4 357.8,181.8 358.4,182.3 359.0,184.1 359.6,181.7 360.2,183.5 360.8,183.6 361.4,182.1 362.0,182.5 362.6,184.0 363.2,182.4 363.8,181.7 364.4,183.7 365.0,181.9 365.6,183.2 366.2,184.1 366.8,182.2 367.4,182.0 368.0,182.0 368.6,182.7 369.2,183.6 369.8,183.6 370.4,182.9 371.0,182.9 371.6,182.9 372.2,183.0 372.8,182.4 373.4,181.9 374.0,182.2 374.6,182.5 375.2,181.6 375.8,184.2 376.4,182.1 377.0,182.1 377.6,182.9 378.2,182.5 378.8,182.2 379.4,184.3 380.0,182.3 380.6,183.9 381.2,183.7 381.8,183.6 382.4,184.1 383.0,182.1 383.6,183.9 384.2,184.0 384.8,181.7 385.4,182.9 386.0,184.3 386.6,182.7 387.2,183.1 387.8,182.9 388.4,184.4 389.0,181.8 389.6,183.2 390.2,184.2 390.8,183.6 391.4,184.1 392.0,183.4 392.6,184.6 393.2,183.7 393.8,184.1 394.4,182.6 395.0,184.4 395.6,184.1 396.2,184.0 396.8,184.1 397.4,182.2 398.0,182.0 398.6,182.9 399.2,182.0 399.8,183.2 400.4,183.4 401.0,184.1 401.6,184.1 402.2,183.0 402.8,182.2 403.4,184.0 404.0,184.3 404.6,184.6 405.2,183.3 405.8,182.2 406.4,182.4 407.0,183.7 407.6,181.7 408.2,183.8 408.8,182.4 409.4,182.6 410.0,183.9 410.6,183.1 411.2,183.7 411.8,182.9 412.4,182.5 413.0,181.7 413.6,181.8 414.2,182.4 414.8,183.0 415.4,181.7 416.0,181.9 416.6,182.2 417.2,181.7 417.8,182.4 418.4,183.8 419.0,182.7 419.6,184.6 420.2,183.7 420.8,181.8 421.4,183.3 422.0,182.0 422.6,183.6 423.2,183.8 423.8,183.0 424.4,182.3 425.0,182.1 425.6,184.5 426.2,182.9 426.8,182.0 427.4,182.0 428.0,183.7 428.6,182.2 429.2,182.9 429.8,183.5 430.4,182.4 431.0,183.4 431.6,183.0 432.2,184.3 432.8,182.0 433.4,184.2 434.0,184.2 434.6,183.3 435.2,182.8 435.8,182.8 436.4,182.2 437.0,184.3 437.6,181.7 438.2,183.9 438.8,183.7 439.4,183.3 440.0,184.4 440.6,183.4 441.2,184.5 441.8,183.0 442.4,182.2 443.0,182.8 443.6,183.9 444.2,183.8 444.8,182.7 445.4,181.7 446.0,182.2 446.6,181.6 447.2,183.3 447.8,184.1 448.4,182.1 449.0,182.3 449.6,183.3 450.2,182.5 450.8,184.2 451.4,182.8 452.0,182.3 452.6,184.1 453.2,184.6 453.8,183.8 454.4,181.9 455.0,183.8 455.6,182.6 456.2,184.4 456.8,182.8 457.4,183.4 458.0,182.4 458.6,183.0 459.2,182.9 459.8,183.6 460.4,182.0 461.0,184.5 461.6,183.8 461.6,188.8 461.0,187.9 460.4,187.7 459.8,189.0 459.2,187.8 458.6,190.6 458.0,188.3 457.4,187.6 456.8,188.1 456.2,190.7 455.6,188.2 455.0,187.5 454.4,188.4 453.8,190.0 453.2,191.3 452.6,189.9 452.0,190.5 451.4,188.5 450.8,190.6 450.2,187.6 449.6,187.9 449.0,188.9 448.4,191.8 447.8,191.6 447.2,187.6 446.6,190.7 446.0,191.1 445.4,189.8 444.8,190.5 444.2,190.2 443.6,190.6 443.0,191.5 442.4,190.4 441.8,189.8 441.2,189.8 440.6,189.2 440.0,188.8 439.4,188.2 438.8,190.0 438.2,187.9 437.6,188.9 437.0,187.7 436.4,191.2 435.8,188.8 435.2,189.1 434.6,189.9 434.0,191.3 433.4,187.5 432.8,190.7 432.2,189.6 431.6,190.7 431.0,189.6 430.4,190.3 429.8,191.6 429.2,189.0 428.6,187.6 428.0,191.4 427.4,190.1 426.8,190.1 426.2,190.7 425.6,187.4 425.0,191.2 424.4,190.4 423.8,188.2 423.2,191.3 422.6,187.2 422.0,191.1 421.4,189.5 420.8,190.8 420.2,188.3 419.6,189.1 419.0,190.5 418.4,191.0 417.8,189.5 417.2,187.3 416.6,190.9 416.0,187.5 415.4,189.5 414.8,189.0 414.2,191.0 413.6,187.4 413.0,191.6 412.4,189.5 411.8,188.5 411.2,188.4 410.6,191.5 410.0,188.1 409.4,189.8 408.8,189.7 408.2,190.4 407.6,189.9 407.0,187.6 406.4,190.7 405.8,188.3 405.2,189.3 404.6,189.1 404.0,188.1 403.4,189.2 402.8,187.5 402.2,191.4 401.6,191.5 401.0,187.4 400.4,190.7 399.8,190.6 399.2,191.5 398.6,190.2 398.0,190.6 397.4,190.5 396.8,190.1 396.2,190.9 395.6,188.9 395.0,188.1 394.4,187.8 393.8,190.5 393.2,190.9 392.6,188.3 392.0,190.3 391.4,190.1 390.8,188.8 390.2,188.2 389.6,189.1 389.0,188.7 388.4,188.7 387.8,187.7 387.2,190.7 386.6,189.2 386.0,187.6 385.4,190.9 384.8,190.3 384.2,188.8 383.6,187.8 383.0,187.4 382.4,189.2 381.8,190.4 381.2,189.5 380.6,189.5 380.0,190.1 379.4,189.2 378.8,190.7 378.2,188.2 377.6,189.0 377.0,189.0 376.4,190.8 375.8,190.4 375.2,189.6 374.6,190.2 374.0,189.2 373.4,189.1 372.8,190.7 372.2,190.3 371.6,188.2 371.0,187.7 370.4,190.4 369.8,187.5 369.2,191.2 368.6,188.3 368.0,189.1 367.4,188.5 366.8,187.6 366.2,188.5 365.6,191.0 365.0,187.1 364.4,188.8 363.8,188.3 363.2,190.9 362.6,188.5 362.0,189.7 361.4,190.0 360.8,190.4 360.2,189.4 359.6,190.5 359.0,188.2 358.4,188.3 357.8,187.4 357.2,190.5 356.6,187.8 356.0,189.2 355.4,190.5 354.8,189.1 354.2,189.1 353.6,187.6 353.0,191.4 352.4,187.5 351.8,189.6 351.2,191.4 350.6,187.3 350.0,190.1 349.4,188.7 348.8,190.3 348.2,188.0 347.6,191.3 347.0,189.2 346.4,188.9 345.8,190.8 345.2,191.1 344.6,191.0 344.0,189.1 343.4,191.3 342.8,191.0 342.2,187.5 341.6,188.2 341.0,187.9 340.4,188.4 339.8,187.7 339.2,187.2 338.6,190.5 338.0,190.2 337.4,189.1 336.8,187.8 336.2,190.4 335.6,190.2 335.0,190.7 334.4,191.1 333.8,190.1 333.2,189.0 332.6,187.6 332.0,190.4 331.4,188.8 330.8,190.3 330.2,190.6 329.6,187.1 329.0,188.0 328.4,190.2 327.8,188.8 327.2,190.4 326.6,187.0 326.0,187.2 325.4,188.9 324.8,187.3 324.2,190.8 323.6,186.9 323.0,190.8 322.4,189.6 321.8,191.2 321.2,188.4 320.6,188.3 320.0,188.4 319.4,189.4 318.8,188.3 318.2,187.4 317.6,190.2 317.0,189.1 316.4,190.0 315.8,190.8 315.2,186.9 314.6,187.8 314.0,188.2 313.4,188.2 312.8,188.7 312.2,190.1 311.6,188.3 311.0,190.9 310.4,190.4 309.8,187.9 309.2,187.4 308.6,187.2 308.0,188.2 307.4,191.1 306.8,190.1 306.2,191.2 305.6,189.3 305.0,188.8 304.4,191.1 303.8,187.0 303.2,191.0 302.6,188.3 302.0,188.6 301.4,188.7 300.8,190.1 300.2,187.1 299.6,189.9 299.0,190.8 298.4,186.6 297.8,190.0 297.2,186.7 296.6,186.8 296.0,189.4 295.4,189.7 294.8,190.2 294.2,188.8 293.6,189.5 293.0,186.8 292.4,188.4 291.8,187.5 291.2,189.4 290.6,189.0 290.0,188.7 289.4,188.9 288.8,185.6 288.2,187.8 287.6,189.6 287.0,185.6 286.4,186.5 285.8,188.6 285.2,187.3 284.6,187.1 284.0,187.7 283.4,187.4 282.8,186.2 282.2,188.2 281.6,187.5 281.0,185.4 280.4,186.4 279.8,184.9 279.2,186.1 278.6,184.5 278.0,184.1 277.4,186.6 276.8,184.6 276.2,185.7 275.6,184.2 275.0,188.1 274.4,187.8 273.8,187.7 273.2,184.9 272.6,185.1 272.0,184.8 271.4,184.6 270.8,184.0 270.2,186.1 269.6,186.9 269.0,186.2 268.4,183.9 267.8,186.4 267.2,185.4 266.6,182.9 266.0,186.4 265.4,186.2 264.8,184.8 264.2,184.4 263.6,183.3 263.0,186.5 262.4,185.3 261.8,183.1 261.2,184.6 260.6,183.0 260.0,183.0 259.4,184.2 258.8,183.3 258.2,183.6 257.6,181.6 257.0,185.0 256.4,183.4 255.8,182.6 255.2,181.5 254.6,180.8 254.0,183.9 253.4,182.0 252.8,181.3 252.2,180.0 251.6,183.2 251.0,181.6 250.4,181.4 249.8,180.1 249.2,181.1 248.6,183.5 248.0,179.4 247.4,183.0 246.8,181.7 246.2,179.4 245.6,179.6 245.0,179.4 244.4,178.6 243.8,179.0 243.2,182.0 242.6,181.4 242.0,179.7 241.4,177.9 240.8,180.2 240.2,179.3 239.6,179.2 239.0,178.0 238.4,180.8 237.8,178.9 237.2,178.2 236.6,179.2 236.0,180.2 235.4,179.1 234.8,178.7 234.2,179.4 233.6,180.0 233.0,179.3 232.4,176.2 231.8,179.5 231.2,179.1 230.6,179.7 230.0,177.6 229.4,179.5 228.8,176.7 228.2,176.3 227.6,178.5 227.0,176.3 226.4,177.6 225.8,176.2 225.2,178.4 224.6,174.9 224.0,175.6 223.4,174.7 222.8,174.7 222.2,173.7 221.6,177.1 221.0,177.1 220.4,174.2 219.8,177.1 219.2,173.7 218.6,175.5 218.0,174.3 217.4,173.2 216.8,172.9 216.2,172.1 215.6,174.8 215.0,173.8 214.4,172.2 213.8,171.7 213.2,172.1 212.6,173.5 212.0,173.5 211.4,172.5 210.8,172.5 210.2,173.1 209.6,171.5 209.0,170.7 208.4,173.4 207.8,171.3 207.2,173.1 206.6,171.7 206.0,172.8 205.4,172.9 204.8,171.2 204.2,170.7 203.6,170.8 203.0,173.0 202.4,172.5 201.8,169.0 201.2,172.1 200.6,169.2 200.0,170.7 199.4,168.0 198.8,170.3 198.2,169.4 197.6,169.7 197.0,170.8 196.4,170.2 195.8,170.0 195.2,170.1 194.6,168.0 194.0,169.7 193.4,170.4 192.8,170.7 192.2,170.4 191.6,168.6 191.0,166.6 190.4,169.7 189.8,168.2 189.2,168.9 188.6,167.1 188.0,168.0 187.4,166.9 186.8,166.2 186.2,167.4 185.6,167.2 185.0,165.4 184.4,165.9 183.8,166.5 183.2,164.5 182.6,165.8 182.0,164.4 181.4,166.2 180.8,164.8 180.2,166.5 179.6,166.0 179.0,167.1 178.4,166.8 177.8,164.2 177.2,164.3 176.6,163.7 176.0,162.1 175.4,162.4 174.8,163.4 174.2,161.9 173.6,162.6"/>
<polygon fill="#1c8e20" points="173.6,142.9 174.2,144.2 174.8,144.6 175.4,144.8 176.0,146.5 176.6,146.8 177.2,147.5 177.8,147.7 178.4,148.8 179.0,149.9 179.6,150.3 180.2,151.0 180.8,151.5 181.4,151.2 182.0,151.7 182.6,152.4 183.2,153.9 183.8,152.4 184.4,153.2 185.0,153.6 185.6,154.6 186.2,154.3 186.8,154.5 187.4,154.6 188.0,152.8 188.6,152.6 189.2,152.8 189.8,151.3 190.4,152.3 191.0,152.0 191.6,151.6 192.2,152.0 192.8,151.0 193.4,151.5 194.0,150.3 194.6,151.2 195.2,152.3 195.8,151.8 196.4,151.5 197.0,152.0 197.6,151.7 198.2,153.3 198.8,153.1 199.4,153.7 200.0,153.0 200.6,153.4 201.2,154.3 201.8,154.6 202.4,154.5 203.0,156.1 203.6,157.3 204.2,156.2 204.8,158.0 205.4,156.8 206.0,157.7 206.6,157.0 207.2,158.2 207.8,158.4 208.4,158.3 209.0,157.3 209.6,158.8 210.2,158.0 210.8,157.8 211.4,158.1 212.0,158.5 212.6,157.7 213.2,158.7 213.8,158.1 214.4,157.0 215.0,156.9 215.6,158.1 216.2,158.0 216.8,157.0 217.4,155.3 218.0,154.6 218.6,154.1 219.2,153.2 219.8,153.5 220.4,153.1 221.0,153.7 221.6,154.1 222.2,154.6 222.8,155.7 223.4,156.4 224.0,156.0 224.6,157.1 225.2,158.5 225.8,159.8 226.4,160.7 227.0,160.8 227.6,160.4 228.2,160.5 228.8,160.5 229.4,160.7 230.0,160.7 230.6,160.7 231.2,161.4 231.8,161.4 232.4,161.5 233.0,161.7 233.6,161.1 234.2,160.4 234.8,160.0 235.4,161.1 236.0,162.0 236.6,162.0 237.2,162.3 237.8,162.7 238.4,162.3 239.0,162.6 239.6,162.6 240.2,162.2 240.8,162.9 241.4,165.1 242.0,164.3 242.6,165.0 243.2,164.0 243.8,164.2 244.4,164.8 245.0,166.1 245.6,164.9 246.2,165.6 246.8,166.3 247.4,166.0 248.0,166.2 248.6,166.4 249.2,167.0 249.8,166.9 250.4,167.6 251.0,167.4 251.6,167.2 252.2,167.4 252.8,168.3 253.4,168.0 254.0,169.2 254.6,168.5 255.2,167.7 255.8,168.0 256.4,169.3 257.0,168.4 257.6,169.3 258.2,168.6 258.8,168.8 259.4,169.9 260.0,168.9 260.6,170.4 261.2,169.6 261.8,169.8 262.4,169.3 263.0,169.5 263.6,170.0 264.2,169.8 264.8,169.2 265.4,169.6 266.0,170.8 266.6,170.4 267.2,170.7 267.8,169.9 268.4,170.0 269.0,170.0 269.6,170.0 270.2,170.3 270.8,171.4 271.4,172.1 272.0,171.7 272.6,171.4 273.2,171.6 273.8,172.2 274.4,170.3 275.0,171.3 275.6,171.0 276.2,170.8 276.8,170.3 277.4,170.4 278.0,171.2 278.6,170.6 279.2,169.7 279.8,171.0 280.4,169.9 281.0,171.7 281.6,170.3 282.2,171.6 282.8,170.4 283.4,170.4 284.0,170.7 284.6,170.9 285.2,170.0 285.8,170.8 286.4,169.9 287.0,169.1 287.6,170.2 288.2,169.4 288.8,169.8 289.4,171.3 290.0,170.7 290.6,171.7 291.2,171.6 291.8,172.1 292.4,171.3 293.0,171.3 293.6,172.4 294.2,171.7 294.8,170.9 295.4,170.2 296.0,171.1 296.6,170.2 297.2,169.3 297.8,170.6 298.4,171.9 299.0,171.7 299.6,170.8 300.2,172.2 300.8,171.2 301.4,170.4 302.0,171.1 302.6,170.5 303.2,170.2 303.8,170.0 304.4,170.7 305.0,169.7 305.6,170.9 306.2,171.0 306.8,170.7 307.4,171.3 308.0,170.9 308.6,170.7 309.2,170.6 309.8,172.0 310.4,171.1 311.0,171.3 311.6,172.0 312.2,170.4 312.8,171.2 313.4,170.1 314.0,171.2 314.6,171.1 315.2,171.7 315.8,171.3 316.4,171.6 317.0,171.8 317.6,172.2 318.2,170.8 318.8,170.9 319.4,170.0 320.0,171.1 320.6,171.5 321.2,170.7 321.8,171.0 322.4,170.4 323.0,171.9 323.6,172.5 324.2,171.9 324.8,172.1 325.4,171.2 326.0,170.7 326.6,172.0 327.2,172.3 327.8,172.5 328.4,172.0 329.0,172.6 329.6,172.1 330.2,172.6 330.8,171.2 331.4,171.5 332.0,171.6 332.6,171.7 333.2,172.4 333.8,172.5 334.4,171.4 335.0,171.2 335.6,171.6 336.2,170.7 336.8,171.1 337.4,171.4 338.0,171.8 338.6,171.0 339.2,170.2 339.8,170.3 340.4,170.6 341.0,171.3 341.6,171.9 342.2,170.9 342.8,171.0 343.4,172.3 344.0,172.0 344.6,172.5 345.2,172.6 345.8,172.2 346.4,172.2 347.0,172.2 347.6,171.9 348.2,172.0 348.8,171.0 349.4,171.5 350.0,170.0 350.6,170.4 351.2,170.1 351.8,170.5 352.4,171.6 353.0,171.6 353.6,170.5 354.2,171.9 354.8,171.6 355.4,171.6 356.0,171.1 356.6,172.6 357.2,171.2 357.8,171.1 358.4,171.1 359.0,170.3 359.6,170.9 360.2,170.1 360.8,169.7 361.4,170.6 362.0,170.6 362.6,171.9 363.2,172.2 363.8,172.3 364.4,172.3 365.0,171.3 365.6,171.0 366.2,171.0 366.8,171.4 367.4,172.1 368.0,172.2 368.6,171.4 369.2,170.6 369.8,170.8 370.4,170.9 371.0,170.2 371.6,169.9 372.2,171.4 372.8,170.7 373.4,171.5 374.0,171.5 374.6,172.9 375.2,171.3 375.8,171.1 376.4,171.2 377.0,171.3 377.6,170.8 378.2,171.3 378.8,170.8 379.4,172.0 380.0,170.8 380.6,170.5 381.2,171.2 381.8,170.9 382.4,171.7 383.0,171.1 383.6,171.9 384.2,171.2 384.8,171.9 385.4,170.9 386.0,170.7 386.6,171.6 387.2,170.9 387.8,170.9 388.4,171.0 389.0,171.6 389.6,172.6 390.2,171.4 390.8,172.3 391.4,172.4 392.0,170.9 392.6,171.7 393.2,171.1 393.8,171.3 394.4,170.7 395.0,170.4 395.6,170.7 396.2,170.3 396.8,171.6 397.4,171.6 398.0,172.4 398.6,171.4 399.2,172.3 399.8,172.5 400.4,172.6 401.0,171.9 401.6,171.1 402.2,170.5 402.8,170.2 403.4,171.0 404.0,170.3 404.6,171.5 405.2,171.9 405.8,170.8 406.4,171.0 407.0,172.2 407.6,172.0 408.2,171.3 408.8,171.8 409.4,172.3 410.0,172.0 410.6,172.0 411.2,171.8 411.8,171.8 412.4,172.4 413.0,171.6 413.6,171.7 414.2,171.2 414.8,170.9 415.4,170.7 416.0,171.1 416.6,171.4 417.2,171.5 417.8,170.8 418.4,171.7 419.0,171.1 419.6,170.6 420.2,170.5 420.8,171.0 421.4,169.8 422.0,170.6 422.6,170.5 423.2,170.7 423.8,170.4 424.4,170.5 425.0,171.2 425.6,170.3 426.2,171.1 426.8,172.1 427.4,172.9 428.0,170.7 428.6,170.7 429.2,171.2 429.8,170.0 430.4,169.0 431.0,169.9 431.6,169.9 432.2,170.2 432.8,170.0 433.4,170.0 434.0,171.3 434.6,170.6 435.2,170.5 435.8,171.2 436.4,171.0 437.0,169.9 437.6,171.2 438.2,171.8 438.8,171.6 439.4,171.6 440.0,172.0 440.6,171.5 441.2,172.2 441.8,171.0 442.4,171.4 443.0,171.3 443.6,170.4 444.2,171.8 444.8,171.7 445.4,171.6 446.0,171.9 446.6,171.4 447.2,171.3 447.8,171.5 448.4,170.3 449.0,170.8 449.6,170.6 450.2,170.3 450.8,170.1 451.4,171.0 452.0,170.7 452.6,171.2 453.2,171.6 453.8,171.8 454.4,171.9 455.0,171.3 455.6,170.2 456.2,171.2 456.8,170.5 457.4,171.5 458.0,171.1 458.6,172.0 459.2,171.3 459.8,170.0 460.4,171.3 461.0,171.4 461.6,171.3 461.6,177.0 461.0,178.2 460.4,176.8 459.8,176.7 459.2,177.5 458.6,177.6 458.0,178.5 457.4,178.7 456.8,177.2 456.2,177.6 455.6,177.9 455.0,178.3 454.4,179.0 453.8,179.3 453.2,178.1 452.6,178.4 452.0,178.6 451.4,177.9 450.8,178.3 450.2,176.1 449.6,175.9 449.0,177.9 448.4,178.2 447.8,178.2 447.2,177.4 446.6,177.5 446.0,177.4 445.4,179.3 444.8,176.8 444.2,178.2 443.6,178.3 443.0,178.0 442.4,179.0 441.8,176.6 441.2,179.0 440.6,177.4 440.0,178.6 439.4,177.3 438.8,179.8 438.2,178.3 437.6,177.2 437.0,175.3 436.4,178.6 435.8,177.4 435.2,176.6 434.6,176.4 434.0,176.5 433.4,177.4 432.8,176.2 432.2,174.6 431.6,177.3 431.0,177.3 430.4,174.6 429.8,177.4 429.2,178.4 428.6,178.0 428.0,179.3 427.4,179.2 426.8,177.8 426.2,176.3 425.6,178.4 425.0,176.1 424.4,177.9 423.8,177.6 423.2,175.8 422.6,178.3 422.0,177.1 421.4,176.5 420.8,177.4 420.2,175.8 419.6,177.2 419.0,177.9 418.4,176.7 417.8,175.8 417.2,177.6 416.6,177.9 416.0,178.0 415.4,176.3 414.8,178.8 414.2,178.2 413.6,177.8 413.0,179.3 412.4,179.9 411.8,178.8 411.2,179.6 410.6,178.2 410.0,178.9 409.4,178.2 408.8,178.5 408.2,178.6 407.6,177.4 407.0,179.6 406.4,179.1 405.8,178.4 405.2,176.5 404.6,178.3 404.0,178.0 403.4,178.0 402.8,175.9 402.2,176.2 401.6,177.4 401.0,178.3 400.4,179.4 399.8,177.6 399.2,177.6 398.6,178.4 398.0,178.7 397.4,179.6 396.8,178.3 396.2,177.9 395.6,177.9 395.0,178.0 394.4,176.6 393.8,178.4 393.2,177.1 392.6,178.7 392.0,176.6 391.4,177.9 390.8,177.7 390.2,179.5 389.6,178.3 389.0,178.9 388.4,178.4 387.8,179.2 387.2,177.8 386.6,176.2 386.0,175.8 385.4,176.3 384.8,179.4 384.2,176.4 383.6,177.1 383.0,179.5 382.4,176.4 381.8,176.5 381.2,179.0 380.6,176.4 380.0,176.2 379.4,176.4 378.8,178.8 378.2,176.4 377.6,176.4 377.0,177.7 376.4,176.3 375.8,178.9 375.2,177.0 374.6,178.8 374.0,176.8 373.4,179.1 372.8,177.6 372.2,176.7 371.6,175.0 371.0,178.0 370.4,177.2 369.8,178.4 369.2,176.3 368.6,177.9 368.0,176.9 367.4,177.4 366.8,177.7 366.2,176.9 365.6,178.1 365.0,177.0 364.4,179.0 363.8,178.6 363.2,177.5 362.6,177.8 362.0,178.4 361.4,178.1 360.8,175.6 360.2,177.1 359.6,175.4 359.0,178.0 358.4,179.3 357.8,176.9 357.2,178.9 356.6,177.3 356.0,176.3 355.4,176.2 354.8,175.8 354.2,178.0 353.6,176.6 353.0,178.4 352.4,176.6 351.8,178.5 351.2,175.6 350.6,175.7 350.0,176.2 349.4,178.7 348.8,175.5 348.2,178.1 347.6,177.6 347.0,180.1 346.4,178.2 345.8,177.3 345.2,178.5 344.6,177.0 344.0,179.3 343.4,177.5 342.8,178.4 342.2,178.0 341.6,178.0 341.0,178.8 340.4,177.4 339.8,176.2 339.2,176.5 338.6,176.7 338.0,176.7 337.4,177.9 336.8,178.9 336.2,177.0 335.6,176.6 335.0,178.8 334.4,178.3 333.8,177.1 333.2,178.6 332.6,179.7 332.0,176.8 331.4,178.4 330.8,178.2 330.2,178.9 329.6,178.9 329.0,177.7 328.4,178.0 327.8,177.7 327.2,177.4 326.6,177.0 326.0,176.4 325.4,177.3 324.8,178.9 324.2,177.3 323.6,179.6 323.0,177.0 322.4,176.6 321.8,177.9 321.2,177.5 320.6,177.6 320.0,177.3 319.4,176.7 318.8,178.1 318.2,176.6 317.6,178.8 317.0,177.8 316.4,179.8 315.8,180.0 315.2,179.2 314.6,176.9 314.0,175.9 313.4,177.4 312.8,176.8 312.2,177.7 311.6,177.1 311.0,177.3 310.4,178.0 309.8,176.7 309.2,177.5 308.6,178.5 308.0,178.9 307.4,176.3 306.8,176.3 306.2,178.6 305.6,176.9 305.0,177.6 304.4,175.1 303.8,176.1 303.2,177.2 302.6,177.1 302.0,178.0 301.4,176.3 300.8,178.4 300.2,178.0 299.6,176.6 299.0,178.9 298.4,177.4 297.8,176.7 297.2,176.6 296.6,177.6 296.0,176.4 295.4,176.4 294.8,178.0 294.2,178.6 293.6,179.1 293.0,176.9 292.4,177.4 291.8,179.4 291.2,179.5 290.6,177.1 290.0,179.1 289.4,177.5 288.8,177.8 288.2,176.0 287.6,176.3 287.0,177.1 286.4,175.5 285.8,178.9 285.2,175.9 284.6,177.7 284.0,176.3 283.4,177.9 282.8,176.3 282.2,176.1 281.6,178.8 281.0,176.3 280.4,176.5 279.8,175.9 279.2,177.5 278.6,176.8 278.0,177.8 277.4,177.5 276.8,176.3 276.2,175.8 275.6,176.7 275.0,178.8 274.4,176.8 273.8,176.3 273.2,178.0 272.6,178.3 272.0,179.0 271.4,176.9 270.8,176.6 270.2,177.0 269.6,177.0 269.0,177.7 268.4,175.7 267.8,177.8 267.2,177.3 266.6,178.1 266.0,177.7 265.4,175.4 264.8,175.5 264.2,177.0 263.6,177.3 263.0,175.1 262.4,176.8 261.8,177.6 261.2,175.8 260.6,175.1 260.0,174.7 259.4,176.8 258.8,175.7 258.2,176.9 257.6,175.2 257.0,174.5 256.4,175.7 255.8,175.2 255.2,174.5 254.6,175.0 254.0,174.5 253.4,173.4 252.8,175.1 252.2,174.7 251.6,172.5 251.0,172.4 250.4,174.4 249.8,172.7 249.2,173.5 248.6,174.0 248.0,172.0 247.4,173.7 246.8,173.9 246.2,171.3 245.6,170.7 245.0,171.1 244.4,171.0 243.8,172.2 243.2,171.2 242.6,170.6 242.0,172.1 241.4,169.3 240.8,171.2 240.2,168.1 239.6,169.0 239.0,170.3 238.4,168.4 237.8,170.0 237.2,169.3 236.6,169.3 236.0,168.5 235.4,167.9 234.8,167.9 234.2,168.5 233.6,166.3 233.0,168.5 232.4,166.7 231.8,168.1 231.2,169.1 230.6,169.1 230.0,166.7 229.4,167.8 228.8,168.4 228.2,168.3 227.6,166.5 227.0,165.3 226.4,166.5 225.8,164.5 225.2,164.1 224.6,164.1 224.0,164.5 223.4,164.5 222.8,161.8 222.2,161.1 221.6,160.4 221.0,161.6 220.4,160.9 219.8,159.6 219.2,160.1 218.6,160.6 218.0,162.8 217.4,163.5 216.8,163.6 216.2,162.2 215.6,164.6 215.0,162.5 214.4,165.4 213.8,165.7 213.2,164.1 212.6,162.8 212.0,166.3 211.4,165.2 210.8,163.6 210.2,165.0 209.6,165.3 209.0,163.5 208.4,165.8 207.8,162.8 207.2,163.0 206.6,163.7 206.0,163.2 205.4,163.7 204.8,164.1 204.2,164.5 203.6,162.1 203.0,162.6 202.4,161.7 201.8,159.8 201.2,160.0 200.6,158.6 200.0,158.8 199.4,160.6 198.8,159.0 198.2,159.2 197.6,160.1 197.0,157.8 196.4,156.9 195.8,156.4 195.2,156.7 194.6,157.0 194.0,157.4 193.4,158.0 192.8,158.7 192.2,158.5 191.6,157.4 191.0,159.4 190.4,158.7 189.8,159.8 189.2,158.8 188.6,159.2 188.0,159.1 187.4,158.8 186.8,159.9 186.2,161.6 185.6,160.5 185.0,159.8 184.4,160.2 183.8,159.1 183.2,160.6 182.6,159.9 182.0,157.3 181.4,157.9 180.8,157.9 180.2,157.8 179.6,156.4 179.0,156.2 178.4,155.8 177.8,155.1 177.2,154.6 176.6,155.2 176.0,153.9 175.4,153.0 174.8,151.5 174.2,151.0 173.6,150.4"/>
<path d="M173.6 144.4h.8M173.6 148.5h.8M174.2 147.3h.8M174.2 149.5h.8M174.8 149.0h.8M174.8 146.6h.8M175.4 147.4h.8M175.4 145.9h.8M176.0 148.1h.8M176.0 153.9h.8M176.6 151.3h.8M176.6 153.7h.8M177.2 152.3h.8M177.2 148.5h.8M177.8 150.6h.8M177.8 150.5h.8M178.4 153.7h.8M178.4 151.4h.8M179.0 154.0h.8M179.0 152.2h.8M179.6 155.7h.8M179.6 155.1h.8M180.2 156.5h.8M180.2 153.0h.8M180.8 154.4h.8M180.8 155.2h.8M181.4 156.5h.8M181.4 154.9h.8M182.0 152.1h.8M182.0 158.8h.8M182.6 154.1h.8M182.6 156.4h.8M183.2 154.3h.8M183.2 154.5h.8M183.8 158.8h.8M183.8 157.1h.8M184.4 159.0h.8M184.4 158.2h.8M185.0 155.0h.8M185.0 153.8h.8M185.6 160.8h.8M185.6 159.6h.8M186.2 155.3h.8M186.2 160.3h.8M186.8 159.6h.8M186.8 155.3h.8M187.4 160.4h.8M187.4 154.7h.8M188.0 156.9h.8M188.0 156.4h.8M188.6 157.7h.8M188.6 158.6h.8M189.2 157.6h.8M189.2 155.1h.8M189.8 157.5h.8M189.8 156.3h.8M190.4 156.2h.8M190.4 155.1h.8M191.0 156.9h.8M191.0 153.9h.8M191.6 156.8h.8M191.6 152.0h.8M192.2 154.6h.8M192.2 154.3h.8M192.8 151.7h.8M192.8 156.7h.8M193.4 154.4h.8M193.4 156.4h.8M194.0 154.7h.8M194.0 155.8h.8M194.6 158.2h.8M194.6 154.3h.8M195.2 155.5h.8M195.2 157.0h.8M195.8 156.3h.8M195.8 158.2h.8M196.4 151.8h.8M196.4 153.8h.8M197.0 154.4h.8M197.0 156.4h.8M197.6 153.8h.8M197.6 152.5h.8M198.2 154.4h.8M198.2 154.3h.8M198.8 159.6h.8M198.8 159.6h.8M199.4 155.8h.8M199.4 156.5h.8M200.0 154.2h.8M200.0 156.4h.8M200.6 158.1h.8M200.6 159.8h.8M201.2 158.1h.8M201.2 161.2h.8M201.8 154.8h.8M201.8 160.0h.8M202.4 156.8h.8M202.4 160.6h.8M203.0 158.4h.8M203.0 160.1h.8M203.6 159.0h.8M203.6 162.0h.8M204.2 161.4h.8M204.2 161.5h.8M204.8 161.2h.8M204.8 162.5h.8M205.4 159.3h.8M205.4 159.8h.8M206.0 159.6h.8M206.0 160.8h.8M206.6 161.2h.8M206.6 164.5h.8M207.2 159.7h.8M207.2 164.4h.8M207.8 163.9h.8M207.8 158.4h.8M208.4 162.6h.8M208.4 162.0h.8M209.0 164.7h.8M209.0 162.1h.8M209.6 164.0h.8M209.6 163.4h.8M210.2 165.5h.8M210.2 162.2h.8M210.8 161.5h.8M210.8 160.8h.8M211.4 160.6h.8M211.4 158.7h.8M212.0 165.2h.8M212.0 161.4h.8M212.6 159.8h.8M212.6 162.5h.8M213.2 163.1h.8M213.2 160.5h.8M213.8 164.8h.8M213.8 163.6h.8M214.4 163.7h.8M214.4 159.8h.8M215.0 159.8h.8M215.0 163.5h.8M215.6 159.0h.8M215.6 158.9h.8M216.2 157.5h.8M216.2 158.5h.8M216.8 163.2h.8M216.8 160.6h.8M217.4 157.3h.8M217.4 162.4h.8M218.0 158.6h.8M218.0 160.2h.8M218.6 155.6h.8M218.6 156.3h.8M219.2 157.4h.8M219.2 157.5h.8M219.8 155.3h.8M219.8 156.8h.8M220.4 156.6h.8M220.4 156.1h.8M221.0 155.5h.8M221.0 155.3h.8M221.6 155.9h.8M221.6 160.8h.8M222.2 158.6h.8M222.2 160.8h.8M222.8 162.3h.8M222.8 158.5h.8M223.4 159.6h.8M223.4 161.2h.8M224.0 156.9h.8M224.0 160.1h.8M224.6 164.1h.8M224.6 158.7h.8M225.2 159.6h.8M225.2 164.7h.8M225.8 163.9h.8M225.8 164.2h.8M226.4 166.1h.8M226.4 166.7h.8M227.0 163.8h.8M227.0 166.9h.8M227.6 164.7h.8M227.6 162.8h.8M228.2 162.5h.8M228.2 163.3h.8M228.8 162.2h.8M228.8 166.0h.8M229.4 165.3h.8M229.4 164.6h.8M230.0 162.4h.8M230.0 164.5h.8M230.6 166.5h.8M230.6 162.9h.8M231.2 163.1h.8M231.2 166.8h.8M231.8 168.4h.8M231.8 168.1h.8M232.4 165.5h.8M232.4 163.1h.8M233.0 163.7h.8M233.0 164.6h.8M233.6 161.2h.8M233.6 166.0h.8M234.2 166.8h.8M234.2 164.7h.8M234.8 162.2h.8M234.8 163.4h.8M235.4 163.0h.8M235.4 165.2h.8M236.0 163.7h.8M236.0 168.4h.8M236.6 168.8h.8M236.6 167.7h.8M237.2 165.0h.8M237.2 164.5h.8M237.8 167.2h.8M237.8 164.0h.8M238.4 163.3h.8M238.4 168.1h.8M239.0 169.6h.8M239.0 169.0h.8M239.6 166.8h.8M239.6 163.0h.8M240.2 169.8h.8M240.2 168.2h.8M240.8 163.8h.8M240.8 167.4h.8M241.4 165.3h.8M241.4 166.3h.8M242.0 171.4h.8M242.0 170.0h.8M242.6 168.3h.8M242.6 166.7h.8M243.2 165.4h.8M243.2 166.1h.8M243.8 171.7h.8M243.8 170.6h.8M244.4 167.7h.8M244.4 170.4h.8M245.0 169.0h.8M245.0 171.6h.8M245.6 171.5h.8M245.6 167.8h.8M246.2 167.2h.8M246.2 168.3h.8M246.8 169.7h.8M246.8 166.4h.8M247.4 169.3h.8M247.4 166.9h.8M248.0 169.4h.8M248.0 168.3h.8M248.6 169.6h.8M248.6 173.4h.8M249.2 167.2h.8M249.2 171.0h.8M249.8 171.1h.8M249.8 169.6h.8M250.4 173.7h.8M250.4 173.8h.8M251.0 168.3h.8M251.0 171.1h.8M251.6 174.1h.8M251.6 173.4h.8M252.2 168.3h.8M252.2 171.2h.8M252.8 173.9h.8M252.8 169.0h.8M253.4 169.9h.8M253.4 175.4h.8M254.0 174.2h.8M254.0 175.5h.8M254.6 174.3h.8M254.6 171.3h.8M255.2 171.3h.8M255.2 168.3h.8M255.8 172.2h.8M255.8 173.2h.8M256.4 170.7h.8M256.4 174.3h.8M257.0 174.5h.8M257.0 174.5h.8M257.6 174.5h.8M257.6 173.6h.8M258.2 172.7h.8M258.2 172.8h.8M258.8 176.1h.8M258.8 173.6h.8M259.4 170.3h.8M259.4 173.5h.8M260.0 175.0h.8M260.0 169.8h.8M260.6 175.8h.8M260.6 175.7h.8M261.2 175.9h.8M261.2 172.6h.8M261.8 172.9h.8M261.8 173.9h.8M262.4 176.4h.8M262.4 174.9h.8M263.0 170.9h.8M263.0 176.0h.8M263.6 176.0h.8M263.6 172.1h.8M264.2 176.1h.8M264.2 171.5h.8M264.8 172.3h.8M264.8 172.1h.8M265.4 170.6h.8M265.4 174.6h.8M266.0 170.5h.8M266.0 174.0h.8M266.6 176.4h.8M266.6 176.3h.8M267.2 173.9h.8M267.2 176.3h.8M267.8 176.7h.8M267.8 171.6h.8M268.4 175.8h.8M268.4 173.0h.8M269.0 176.4h.8M269.0 172.4h.8M269.6 173.5h.8M269.6 170.8h.8M270.2 171.4h.8M270.2 177.6h.8M270.8 177.0h.8M270.8 176.4h.8M271.4 176.8h.8M271.4 178.8h.8M272.0 174.4h.8M272.0 177.7h.8M272.6 172.4h.8M272.6 176.3h.8M273.2 175.9h.8M273.2 173.4h.8M273.8 175.1h.8M273.8 177.5h.8M274.4 175.3h.8M274.4 175.6h.8M275.0 177.0h.8M275.0 176.0h.8M275.6 172.0h.8M275.6 173.1h.8M276.2 177.1h.8M276.2 172.3h.8M276.8 172.9h.8M276.8 174.1h.8M277.4 171.0h.8M277.4 172.2h.8M278.0 175.3h.8M278.0 176.0h.8M278.6 177.0h.8M278.6 174.3h.8M279.2 172.4h.8M279.2 173.2h.8M279.8 174.8h.8M279.8 172.5h.8M280.4 172.5h.8M280.4 176.0h.8M281.0 177.8h.8M281.0 175.6h.8M281.6 173.8h.8M281.6 176.9h.8M282.2 176.1h.8M282.2 174.9h.8M282.8 177.0h.8M282.8 170.5h.8M283.4 176.0h.8M283.4 171.7h.8M284.0 177.4h.8M284.0 172.9h.8M284.6 173.3h.8M284.6 171.1h.8M285.2 171.4h.8M285.2 176.8h.8M285.8 172.0h.8M285.8 176.7h.8M286.4 170.7h.8M286.4 176.8h.8M287.0 174.9h.8M287.0 172.1h.8M287.6 174.1h.8M287.6 172.6h.8M288.2 177.1h.8M288.2 173.1h.8M288.8 173.9h.8M288.8 171.7h.8M289.4 172.6h.8M289.4 173.3h.8M290.0 175.8h.8M290.0 174.0h.8M290.6 172.5h.8M290.6 176.7h.8M291.2 173.3h.8M291.2 178.6h.8M291.8 178.1h.8M291.8 178.2h.8M292.4 176.7h.8M292.4 172.5h.8M293.0 175.6h.8M293.0 171.7h.8M293.6 174.1h.8M293.6 175.1h.8M294.2 171.4h.8M294.2 172.9h.8M294.8 172.3h.8M294.8 173.1h.8M295.4 171.6h.8M295.4 176.2h.8M296.0 172.5h.8M296.0 170.8h.8M296.6 170.0h.8M296.6 174.1h.8M297.2 173.0h.8M297.2 172.4h.8M297.8 177.2h.8M297.8 171.6h.8M298.4 172.0h.8M298.4 171.5h.8M299.0 171.9h.8M299.0 176.2h.8M299.6 176.4h.8M299.6 173.7h.8M300.2 175.4h.8M300.2 175.8h.8M300.8 171.3h.8M300.8 171.6h.8M301.4 176.2h.8M301.4 173.9h.8M302.0 177.5h.8M302.0 177.6h.8M302.6 175.8h.8M302.6 173.0h.8M303.2 171.7h.8M303.2 176.6h.8M303.8 173.1h.8M303.8 176.7h.8M304.4 173.7h.8M304.4 173.2h.8M305.0 171.6h.8M305.0 171.8h.8M305.6 177.0h.8M305.6 173.5h.8M306.2 172.1h.8M306.2 176.1h.8M306.8 171.2h.8M306.8 178.1h.8M307.4 174.9h.8M307.4 175.0h.8M308.0 177.3h.8M308.0 174.9h.8M308.6 172.5h.8M308.6 174.8h.8M309.2 173.1h.8M309.2 175.5h.8M309.8 175.6h.8M309.8 175.7h.8M310.4 173.7h.8M310.4 174.6h.8M311.0 174.8h.8M311.0 176.8h.8M311.6 176.2h.8M311.6 175.0h.8M312.2 174.8h.8M312.2 177.0h.8M312.8 172.9h.8M312.8 173.2h.8M313.4 171.7h.8M313.4 173.8h.8M314.0 173.7h.8M314.0 176.4h.8M314.6 173.0h.8M314.6 177.5h.8M315.2 175.8h.8M315.2 178.0h.8M315.8 176.8h.8M315.8 173.2h.8M316.4 176.4h.8M316.4 178.9h.8M317.0 173.3h.8M317.0 175.6h.8M317.6 174.6h.8M317.6 173.9h.8M318.2 171.4h.8M318.2 172.2h.8M318.8 176.2h.8M318.8 173.4h.8M319.4 173.9h.8M319.4 172.7h.8M320.0 175.2h.8M320.0 173.6h.8M320.6 176.1h.8M320.6 176.2h.8M321.2 172.7h.8M321.2 177.9h.8M321.8 172.8h.8M321.8 174.7h.8M322.4 176.2h.8M322.4 174.1h.8M323.0 171.7h.8M323.0 174.4h.8M323.6 175.4h.8M323.6 178.1h.8M324.2 176.3h.8M324.2 178.4h.8M324.8 177.2h.8M324.8 175.3h.8M325.4 174.4h.8M325.4 172.9h.8M326.0 176.9h.8M326.0 177.1h.8M326.6 173.0h.8M326.6 176.9h.8M327.2 175.4h.8M327.2 175.3h.8M327.8 175.8h.8M327.8 172.3h.8M328.4 174.2h.8M328.4 178.3h.8M329.0 176.0h.8M329.0 177.7h.8M329.6 175.1h.8M329.6 178.2h.8M330.2 178.7h.8M330.2 174.3h.8M330.8 177.9h.8M330.8 176.5h.8M331.4 174.0h.8M331.4 172.3h.8M332.0 178.1h.8M332.0 175.9h.8M332.6 173.1h.8M332.6 178.5h.8M333.2 177.0h.8M333.2 178.4h.8M333.8 179.2h.8M333.8 179.0h.8M334.4 172.5h.8M334.4 173.8h.8M335.0 174.1h.8M335.0 177.1h.8M335.6 176.4h.8M335.6 175.5h.8M336.2 176.4h.8M336.2 173.4h.8M336.8 173.2h.8M336.8 172.1h.8M337.4 174.2h.8M337.4 176.5h.8M338.0 177.5h.8M338.0 177.8h.8M338.6 174.7h.8M338.6 171.2h.8M339.2 173.2h.8M339.2 171.1h.8M339.8 170.7h.8M339.8 172.7h.8M340.4 175.5h.8M340.4 177.0h.8M341.0 173.0h.8M341.0 177.4h.8M341.6 177.3h.8M341.6 174.7h.8M342.2 177.1h.8M342.2 173.0h.8M342.8 174.2h.8M342.8 178.1h.8M343.4 176.7h.8M343.4 178.1h.8M344.0 178.5h.8M344.0 173.2h.8M344.6 175.7h.8M344.6 177.9h.8M345.2 178.9h.8M345.2 174.6h.8M345.8 176.2h.8M345.8 178.2h.8M346.4 176.5h.8M346.4 178.5h.8M347.0 178.3h.8M347.0 173.2h.8M347.6 178.2h.8M347.6 178.0h.8M348.2 176.7h.8M348.2 174.6h.8M348.8 174.3h.8M348.8 173.6h.8M349.4 176.1h.8M349.4 173.3h.8M350.0 176.3h.8M350.0 172.9h.8M350.6 173.7h.8M350.6 176.4h.8M351.2 176.8h.8M351.2 176.1h.8M351.8 174.0h.8M351.8 174.3h.8M352.4 175.4h.8M352.4 172.0h.8M353.0 177.1h.8M353.0 172.0h.8M353.6 176.3h.8M353.6 177.7h.8M354.2 177.9h.8M354.2 172.4h.8M354.8 173.7h.8M354.8 176.7h.8M355.4 176.0h.8M355.4 172.2h.8M356.0 178.1h.8M356.0 176.2h.8M356.6 177.5h.8M356.6 178.5h.8M357.2 175.7h.8M357.2 175.0h.8M357.8 176.5h.8M357.8 173.1h.8M358.4 173.7h.8M358.4 177.0h.8M359.0 171.9h.8M359.0 173.0h.8M359.6 174.3h.8M359.6 171.0h.8M360.2 173.3h.8M360.2 175.8h.8M360.8 172.6h.8M360.8 173.6h.8M361.4 171.2h.8M361.4 175.7h.8M362.0 172.2h.8M362.0 172.5h.8M362.6 176.5h.8M362.6 171.4h.8M363.2 175.7h.8M363.2 175.2h.8M363.8 176.2h.8M363.8 173.0h.8M364.4 173.4h.8M364.4 172.2h.8M365.0 178.3h.8M365.0 177.5h.8M365.6 176.4h.8M365.6 177.4h.8M366.2 176.8h.8M366.2 177.6h.8M366.8 173.0h.8M366.8 173.6h.8M367.4 177.9h.8M367.4 172.6h.8M368.0 173.1h.8M368.0 175.8h.8M368.6 172.4h.8M368.6 173.8h.8M369.2 178.2h.8M369.2 177.8h.8M369.8 177.3h.8M369.8 175.6h.8M370.4 176.9h.8M370.4 177.1h.8M371.0 172.3h.8M371.0 170.6h.8M371.6 170.6h.8M371.6 170.7h.8M372.2 177.0h.8M372.2 177.0h.8M372.8 171.5h.8M372.8 178.0h.8M373.4 173.0h.8M373.4 176.3h.8M374.0 173.0h.8M374.0 176.4h.8M374.6 175.4h.8M374.6 179.1h.8M375.2 176.2h.8M375.2 177.4h.8M375.8 172.2h.8M375.8 172.9h.8M376.4 175.9h.8M376.4 174.8h.8M377.0 175.1h.8M377.0 177.5h.8M377.6 171.5h.8M377.6 177.2h.8M378.2 171.8h.8M378.2 174.9h.8M378.8 175.9h.8M378.8 173.5h.8M379.4 173.3h.8M379.4 175.6h.8M380.0 172.8h.8M380.0 177.8h.8M380.6 176.3h.8M380.6 174.6h.8M381.2 176.6h.8M381.2 177.0h.8M381.8 173.1h.8M381.8 172.1h.8M382.4 174.6h.8M382.4 178.1h.8M383.0 175.1h.8M383.0 178.1h.8M383.6 175.8h.8M383.6 177.8h.8M384.2 172.7h.8M384.2 177.2h.8M384.8 172.2h.8M384.8 171.9h.8M385.4 174.9h.8M385.4 173.6h.8M386.0 177.5h.8M386.0 175.4h.8M386.6 173.7h.8M386.6 176.8h.8M387.2 178.7h.8M387.2 177.9h.8M387.8 175.2h.8M387.8 173.9h.8M388.4 178.2h.8M388.4 177.5h.8M389.0 175.1h.8M389.0 179.1h.8M389.6 173.1h.8M389.6 177.8h.8M390.2 173.0h.8M390.2 176.5h.8M390.8 172.1h.8M390.8 176.6h.8M391.4 178.1h.8M391.4 172.7h.8M392.0 173.9h.8M392.0 177.5h.8M392.6 174.1h.8M392.6 177.6h.8M393.2 171.5h.8M393.2 173.6h.8M393.8 175.1h.8M393.8 172.6h.8M394.4 177.1h.8M394.4 173.3h.8M395.0 177.1h.8M395.0 171.2h.8M395.6 175.3h.8M395.6 172.7h.8M396.2 171.7h.8M396.2 173.0h.8M396.8 178.6h.8M396.8 175.9h.8M397.4 176.3h.8M397.4 173.0h.8M398.0 175.4h.8M398.0 177.8h.8M398.6 175.4h.8M398.6 178.5h.8M399.2 173.1h.8M399.2 176.1h.8M399.8 173.5h.8M399.8 174.0h.8M400.4 174.7h.8M400.4 174.3h.8M401.0 173.3h.8M401.0 173.7h.8M401.6 178.2h.8M401.6 175.9h.8M402.2 170.7h.8M402.2 171.0h.8M402.8 171.2h.8M402.8 176.7h.8M403.4 177.6h.8M403.4 173.4h.8M404.0 177.3h.8M404.0 172.5h.8M404.6 171.1h.8M404.6 175.1h.8M405.2 173.6h.8M405.2 175.3h.8M405.8 176.5h.8M405.8 175.0h.8M406.4 172.9h.8M406.4 176.4h.8M407.0 178.5h.8M407.0 172.0h.8M407.6 177.8h.8M407.6 176.7h.8M408.2 178.3h.8M408.2 174.9h.8M408.8 178.7h.8M408.8 177.1h.8M409.4 173.4h.8M409.4 172.1h.8M410.0 174.5h.8M410.0 177.1h.8M410.6 174.2h.8M410.6 178.6h.8M411.2 172.8h.8M411.2 174.3h.8M411.8 176.4h.8M411.8 175.7h.8M412.4 172.4h.8M412.4 177.6h.8M413.0 176.8h.8M413.0 175.4h.8M413.6 174.4h.8M413.6 174.1h.8M414.2 174.9h.8M414.2 173.7h.8M414.8 173.0h.8M414.8 172.8h.8M415.4 175.6h.8M415.4 176.8h.8M416.0 172.4h.8M416.0 172.1h.8M416.6 173.3h.8M416.6 175.3h.8M417.2 172.5h.8M417.2 173.8h.8M417.8 175.0h.8M417.8 177.2h.8M418.4 175.4h.8M418.4 176.7h.8M419.0 176.1h.8M419.0 176.3h.8M419.6 174.7h.8M419.6 175.6h.8M420.2 171.5h.8M420.2 176.2h.8M420.8 173.2h.8M420.8 172.8h.8M421.4 171.1h.8M421.4 172.6h.8M422.0 175.8h.8M422.0 176.7h.8M422.6 174.3h.8M422.6 175.9h.8M423.2 170.9h.8M423.2 173.9h.8M423.8 175.7h.8M423.8 175.6h.8M424.4 177.4h.8M424.4 178.1h.8M425.0 171.7h.8M425.0 176.7h.8M425.6 177.8h.8M425.6 175.2h.8M426.2 172.6h.8M426.2 177.4h.8M426.8 172.9h.8M426.8 177.1h.8M427.4 177.9h.8M427.4 173.0h.8M428.0 177.7h.8M428.0 178.5h.8M428.6 177.7h.8M428.6 175.3h.8M429.2 171.3h.8M429.2 177.7h.8M429.8 176.5h.8M429.8 176.8h.8M430.4 171.1h.8M430.4 171.2h.8M431.0 174.7h.8M431.0 174.3h.8M431.6 170.7h.8M431.6 173.0h.8M432.2 172.8h.8M432.2 170.5h.8M432.8 177.0h.8M432.8 170.6h.8M433.4 176.7h.8M433.4 175.7h.8M434.0 174.6h.8M434.0 172.0h.8M434.6 174.7h.8M434.6 178.3h.8M435.2 175.4h.8M435.2 173.6h.8M435.8 172.1h.8M435.8 172.3h.8M436.4 174.4h.8M436.4 171.5h.8M437.0 174.7h.8M437.0 172.1h.8M437.6 177.4h.8M437.6 172.9h.8M438.2 178.0h.8M438.2 177.4h.8M438.8 175.0h.8M438.8 174.7h.8M439.4 174.4h.8M439.4 178.0h.8M440.0 176.5h.8M440.0 179.0h.8M440.6 176.8h.8M440.6 174.6h.8M441.2 178.6h.8M441.2 176.3h.8M441.8 176.9h.8M441.8 177.7h.8M442.4 172.9h.8M442.4 175.6h.8M443.0 178.4h.8M443.0 175.9h.8M443.6 175.3h.8M443.6 171.3h.8M444.2 177.5h.8M444.2 175.4h.8M444.8 177.2h.8M444.8 172.9h.8M445.4 171.6h.8M445.4 175.6h.8M446.0 176.8h.8M446.0 177.3h.8M446.6 175.0h.8M446.6 173.8h.8M447.2 177.4h.8M447.2 174.6h.8M447.8 174.5h.8M447.8 177.4h.8M448.4 171.4h.8M448.4 175.8h.8M449.0 174.7h.8M449.0 176.1h.8M449.6 175.4h.8M449.6 174.4h.8M450.2 177.2h.8M450.2 175.6h.8M450.8 171.2h.8M450.8 175.1h.8M451.4 177.1h.8M451.4 176.1h.8M452.0 172.3h.8M452.0 175.5h.8M452.6 176.0h.8M452.6 172.9h.8M453.2 172.6h.8M453.2 172.4h.8M453.8 176.9h.8M453.8 173.1h.8M454.4 177.0h.8M454.4 176.3h.8M455.0 176.3h.8M455.0 177.2h.8M455.6 176.7h.8M455.6 175.7h.8M456.2 176.2h.8M456.2 173.5h.8M456.8 171.5h.8M456.8 177.9h.8M457.4 176.4h.8M457.4 178.1h.8M458.0 172.2h.8M458.0 176.7h.8M458.6 178.5h.8M458.6 177.9h.8M459.2 174.1h.8M459.2 171.4h.8M459.8 176.9h.8M459.8 171.6h.8M460.4 175.1h.8M460.4 175.3h.8M461.0 171.5h.8M461.0 175.5h.8M461.6 173.0h.8M461.6 174.2h.8" stroke="#0a4a0e" stroke-width="1" fill="none" opacity=".75"/>
<path d="M173.6 147.7h.8M174.8 148.6h.8M176.0 152.1h.8M177.2 152.1h.8M178.4 149.8h.8M179.6 152.0h.8M180.8 152.7h.8M182.0 154.5h.8M183.2 156.4h.8M184.4 157.4h.8M185.6 157.2h.8M186.8 157.5h.8M188.0 159.5h.8M189.2 156.8h.8M190.4 156.8h.8M191.6 157.4h.8M192.8 151.9h.8M194.0 154.8h.8M195.2 154.0h.8M196.4 152.2h.8M197.6 155.1h.8M198.8 154.6h.8M200.0 157.3h.8M201.2 158.6h.8M202.4 156.4h.8M203.6 159.3h.8M204.8 161.2h.8M206.0 158.1h.8M207.2 161.5h.8M208.4 158.5h.8M209.6 161.3h.8M210.8 164.0h.8M212.0 164.1h.8M213.2 159.5h.8M214.4 160.9h.8M215.6 162.3h.8M216.8 162.3h.8M218.0 158.5h.8M219.2 155.0h.8M220.4 157.9h.8M221.6 160.7h.8M222.8 161.2h.8M224.0 160.7h.8M225.2 160.3h.8M226.4 166.1h.8M227.6 164.4h.8M228.8 163.0h.8M230.0 162.9h.8M231.2 166.3h.8M232.4 164.3h.8M233.6 166.8h.8M234.8 162.3h.8M236.0 166.2h.8M237.2 168.7h.8M238.4 166.1h.8M239.6 163.6h.8M240.8 166.4h.8M242.0 165.3h.8M243.2 166.8h.8M244.4 168.7h.8M245.6 170.2h.8M246.8 172.1h.8M248.0 169.4h.8M249.2 169.8h.8M250.4 170.7h.8M251.6 169.0h.8M252.8 174.1h.8M254.0 174.2h.8M255.2 172.4h.8M256.4 169.7h.8M257.6 171.7h.8M258.8 172.3h.8M260.0 174.8h.8M261.2 171.0h.8M262.4 174.0h.8M263.6 171.8h.8M264.8 172.6h.8M266.0 170.9h.8M267.2 171.8h.8M268.4 173.6h.8M269.6 173.7h.8M270.8 172.6h.8M272.0 174.9h.8M273.2 176.5h.8M274.4 172.5h.8M275.6 173.5h.8M276.8 176.1h.8M278.0 172.3h.8M279.2 172.1h.8M280.4 173.9h.8M281.6 174.8h.8M282.8 172.7h.8M284.0 172.6h.8M285.2 174.6h.8M286.4 173.2h.8M287.6 175.2h.8M288.8 171.9h.8M290.0 176.3h.8M291.2 177.0h.8M292.4 173.6h.8M293.6 176.4h.8M294.8 171.7h.8M296.0 172.7h.8M297.2 173.9h.8M298.4 176.1h.8M299.6 176.2h.8M300.8 173.2h.8M302.0 175.7h.8M303.2 174.7h.8M304.4 171.2h.8M305.6 175.5h.8M306.8 176.6h.8M308.0 177.3h.8M309.2 173.0h.8M310.4 176.6h.8M311.6 176.6h.8M312.8 176.0h.8M314.0 175.5h.8M315.2 176.9h.8M316.4 175.8h.8M317.6 176.7h.8M318.8 175.5h.8M320.0 173.3h.8M321.2 174.1h.8M322.4 174.9h.8M323.6 172.6h.8M324.8 177.5h.8M326.0 176.0h.8M327.2 176.1h.8M328.4 173.7h.8M329.6 174.2h.8M330.8 173.6h.8M332.0 174.7h.8M333.2 173.6h.8M334.4 174.5h.8M335.6 174.4h.8M336.8 173.9h.8M338.0 176.5h.8M339.2 175.3h.8M340.4 171.7h.8M341.6 175.9h.8M342.8 177.3h.8M344.0 175.0h.8M345.2 177.2h.8M346.4 173.0h.8M347.6 174.3h.8M348.8 174.8h.8M350.0 173.0h.8M351.2 173.2h.8M352.4 174.6h.8M353.6 176.2h.8M354.8 172.5h.8M356.0 173.9h.8M357.2 174.7h.8M358.4 177.2h.8M359.6 171.2h.8M360.8 175.0h.8M362.0 172.5h.8M363.2 176.4h.8M364.4 173.9h.8M365.6 174.1h.8M366.8 174.2h.8M368.0 173.1h.8M369.2 173.0h.8M370.4 173.3h.8M371.6 174.9h.8M372.8 173.1h.8M374.0 174.9h.8M375.2 172.7h.8M376.4 176.5h.8M377.6 174.7h.8M378.8 172.8h.8M380.0 171.9h.8M381.2 172.3h.8M382.4 173.4h.8M383.6 172.5h.8M384.8 177.3h.8M386.0 176.1h.8M387.2 177.2h.8M388.4 175.9h.8M389.6 176.6h.8M390.8 172.7h.8M392.0 176.5h.8M393.2 172.2h.8M394.4 173.4h.8M395.6 171.6h.8M396.8 174.7h.8M398.0 176.5h.8M399.2 172.9h.8M400.4 175.2h.8M401.6 177.3h.8M402.8 174.2h.8M404.0 172.6h.8M405.2 173.6h.8M406.4 176.4h.8M407.6 173.2h.8M408.8 174.8h.8M410.0 176.3h.8M411.2 175.7h.8M412.4 176.3h.8M413.6 177.1h.8M414.8 173.5h.8M416.0 174.2h.8M417.2 175.4h.8M418.4 173.9h.8M419.6 172.4h.8M420.8 174.2h.8M422.0 171.4h.8M423.2 173.2h.8M424.4 175.5h.8M425.6 172.1h.8M426.8 176.9h.8M428.0 173.9h.8M429.2 173.6h.8M430.4 171.7h.8M431.6 175.6h.8M432.8 171.6h.8M434.0 177.4h.8M435.2 175.8h.8M436.4 174.0h.8M437.6 175.4h.8M438.8 177.6h.8M440.0 177.3h.8M441.2 175.3h.8M442.4 174.6h.8M443.6 175.6h.8M444.8 173.4h.8M446.0 177.1h.8M447.2 172.9h.8M448.4 174.1h.8M449.6 175.2h.8M450.8 174.7h.8M452.0 173.1h.8M453.2 178.0h.8M454.4 177.5h.8M455.6 174.1h.8M456.8 174.9h.8M458.0 176.5h.8M459.2 172.2h.8M460.4 177.1h.8M461.6 174.3h.8" stroke="#5fd45a" stroke-width=".8" fill="none" opacity=".7"/>
<polygon fill="#cfc636" points="173.6,138.4 174.2,139.9 174.8,140.4 175.4,141.7 176.0,141.9 176.6,142.1 177.2,143.9 177.8,144.9 178.4,143.9 179.0,144.8 179.6,146.3 180.2,145.5 180.8,146.9 181.4,147.6 182.0,146.8 182.6,148.6 183.2,149.2 183.8,149.3 184.4,149.3 185.0,148.6 185.6,149.9 186.2,150.4 186.8,149.3 187.4,150.2 188.0,150.2 188.6,149.2 189.2,147.7 189.8,147.2 190.4,147.1 191.0,146.4 191.6,146.4 192.2,147.8 192.8,147.0 193.4,146.2 194.0,147.5 194.6,146.5 195.2,147.0 195.8,146.5 196.4,146.5 197.0,147.6 197.6,147.6 198.2,148.8 198.8,148.4 199.4,150.1 200.0,148.9 200.6,149.5 201.2,149.8 201.8,149.6 202.4,150.4 203.0,151.8 203.6,152.4 204.2,152.0 204.8,152.2 205.4,152.8 206.0,153.5 206.6,154.0 207.2,153.9 207.8,153.6 208.4,154.5 209.0,154.4 209.6,154.1 210.2,153.3 210.8,152.9 211.4,153.6 212.0,154.2 212.6,153.9 213.2,152.8 213.8,153.1 214.4,154.2 215.0,153.6 215.6,153.6 216.2,153.8 216.8,152.9 217.4,151.5 218.0,151.4 218.6,150.3 219.2,150.1 219.8,148.9 220.4,148.9 221.0,150.4 221.6,149.8 222.2,151.1 222.8,152.1 223.4,152.9 224.0,151.9 224.6,153.9 225.2,154.5 225.8,154.7 226.4,156.2 227.0,155.1 227.6,155.3 228.2,156.7 228.8,157.4 229.4,155.9 230.0,156.1 230.6,156.7 231.2,157.6 231.8,156.9 232.4,157.3 233.0,156.8 233.6,157.5 234.2,156.5 234.8,155.4 235.4,157.9 236.0,157.8 236.6,158.3 237.2,159.1 237.8,159.3 238.4,159.1 239.0,157.6 239.6,158.0 240.2,157.9 240.8,158.8 241.4,159.6 242.0,160.3 242.6,160.0 243.2,161.0 243.8,160.7 244.4,161.7 245.0,160.7 245.6,161.1 246.2,161.9 246.8,161.7 247.4,162.6 248.0,162.4 248.6,162.0 249.2,163.1 249.8,163.1 250.4,164.1 251.0,163.2 251.6,163.2 252.2,164.5 252.8,163.4 253.4,164.0 254.0,164.7 254.6,165.3 255.2,163.3 255.8,163.8 256.4,164.6 257.0,164.8 257.6,164.6 258.2,165.1 258.8,164.6 259.4,165.9 260.0,165.4 260.6,166.0 261.2,166.7 261.8,165.8 262.4,166.0 263.0,165.3 263.6,165.6 264.2,165.8 264.8,166.3 265.4,165.3 266.0,166.6 266.6,165.2 267.2,165.2 267.8,164.8 268.4,166.2 269.0,166.5 269.6,165.7 270.2,167.0 270.8,166.9 271.4,167.1 272.0,168.0 272.6,168.0 273.2,167.9 273.8,166.6 274.4,166.4 275.0,166.1 275.6,166.2 276.2,166.3 276.8,165.7 277.4,167.1 278.0,166.8 278.6,166.8 279.2,167.0 279.8,167.2 280.4,165.9 281.0,167.4 281.6,166.0 282.2,165.7 282.8,165.8 283.4,165.7 284.0,165.4 284.6,166.0 285.2,166.3 285.8,166.2 286.4,166.5 287.0,166.0 287.6,164.8 288.2,165.8 288.8,165.1 289.4,167.0 290.0,166.9 290.6,166.9 291.2,167.3 291.8,167.6 292.4,167.1 293.0,168.1 293.6,166.9 294.2,166.4 294.8,166.2 295.4,166.1 296.0,165.3 296.6,165.3 297.2,166.0 297.8,166.8 298.4,167.8 299.0,166.9 299.6,166.9 300.2,167.0 300.8,166.0 301.4,166.4 302.0,166.5 302.6,166.3 303.2,167.2 303.8,166.9 304.4,165.5 305.0,165.2 305.6,167.3 306.2,167.4 306.8,167.4 307.4,166.5 308.0,167.0 308.6,166.6 309.2,167.0 309.8,167.2 310.4,166.4 311.0,166.3 311.6,166.3 312.2,166.2 312.8,167.6 313.4,165.7 314.0,167.3 314.6,167.9 315.2,167.0 315.8,168.2 316.4,168.8 317.0,167.8 317.6,167.5 318.2,167.8 318.8,166.0 319.4,166.1 320.0,166.3 320.6,166.8 321.2,166.4 321.8,167.1 322.4,166.8 323.0,168.0 323.6,167.3 324.2,166.9 324.8,167.5 325.4,167.4 326.0,167.8 326.6,166.9 327.2,166.7 327.8,167.1 328.4,168.6 329.0,168.0 329.6,167.1 330.2,166.9 330.8,168.4 331.4,166.9 332.0,167.6 332.6,167.3 333.2,167.3 333.8,168.1 334.4,166.9 335.0,167.1 335.6,167.2 336.2,166.1 336.8,166.8 337.4,167.6 338.0,167.5 338.6,166.3 339.2,165.4 339.8,166.6 340.4,166.9 341.0,166.8 341.6,167.0 342.2,166.8 342.8,167.6 343.4,167.6 344.0,167.5 344.6,167.0 345.2,167.0 345.8,168.7 346.4,168.1 347.0,167.0 347.6,167.2 348.2,167.8 348.8,165.5 349.4,167.3 350.0,167.3 350.6,165.6 351.2,166.0 351.8,167.0 352.4,167.3 353.0,167.3 353.6,166.0 354.2,167.5 354.8,167.5 355.4,166.7 356.0,167.1 356.6,167.9 357.2,168.2 357.8,167.6 358.4,167.4 359.0,166.1 359.6,165.9 360.2,165.3 360.8,165.3 361.4,166.1 362.0,166.5 362.6,166.0 363.2,167.1 363.8,166.6 364.4,168.3 365.0,167.4 365.6,167.8 366.2,165.8 366.8,167.4 367.4,168.0 368.0,168.4 368.6,166.9 369.2,166.3 369.8,165.9 370.4,166.1 371.0,166.4 371.6,165.0 372.2,166.2 372.8,167.4 373.4,166.9 374.0,167.6 374.6,168.7 375.2,167.0 375.8,167.9 376.4,167.4 377.0,166.2 377.6,167.0 378.2,166.4 378.8,167.1 379.4,167.5 380.0,166.5 380.6,166.3 381.2,166.4 381.8,167.3 382.4,166.9 383.0,168.3 383.6,167.6 384.2,166.8 384.8,167.5 385.4,166.7 386.0,166.5 386.6,166.9 387.2,168.2 387.8,167.0 388.4,166.3 389.0,167.1 389.6,168.1 390.2,166.8 390.8,166.5 391.4,167.3 392.0,166.9 392.6,167.3 393.2,167.7 393.8,167.2 394.4,167.0 395.0,167.2 395.6,166.6 396.2,166.6 396.8,166.8 397.4,167.1 398.0,166.9 398.6,167.0 399.2,168.0 399.8,167.1 400.4,168.1 401.0,167.2 401.6,167.5 402.2,165.8 402.8,167.1 403.4,166.0 404.0,167.2 404.6,166.6 405.2,168.1 405.8,166.5 406.4,167.5 407.0,168.2 407.6,167.5 408.2,167.7 408.8,166.9 409.4,166.9 410.0,168.2 410.6,168.6 411.2,167.0 411.8,168.2 412.4,167.4 413.0,166.8 413.6,167.4 414.2,167.8 414.8,167.0 415.4,167.0 416.0,168.0 416.6,167.9 417.2,168.0 417.8,166.0 418.4,167.0 419.0,167.5 419.6,167.7 420.2,166.9 420.8,166.6 421.4,166.5 422.0,166.3 422.6,166.1 423.2,167.4 423.8,166.2 424.4,167.4 425.0,167.5 425.6,166.5 426.2,166.4 426.8,166.7 427.4,167.6 428.0,167.1 428.6,167.0 429.2,166.9 429.8,166.2 430.4,165.6 431.0,164.6 431.6,165.3 432.2,166.3 432.8,165.1 433.4,166.3 434.0,167.9 434.6,167.3 435.2,166.8 435.8,166.0 436.4,167.2 437.0,166.2 437.6,166.1 438.2,166.7 438.8,167.1 439.4,166.9 440.0,168.3 440.6,168.6 441.2,167.4 441.8,166.7 442.4,167.1 443.0,168.1 443.6,166.1 444.2,166.1 444.8,167.3 445.4,167.0 446.0,167.3 446.6,168.4 447.2,167.1 447.8,166.2 448.4,167.1 449.0,165.8 449.6,166.1 450.2,166.1 450.8,166.0 451.4,167.9 452.0,166.6 452.6,167.5 453.2,167.7 453.8,167.1 454.4,166.6 455.0,167.0 455.6,166.9 456.2,166.6 456.8,166.7 457.4,166.7 458.0,166.8 458.6,166.5 459.2,167.6 459.8,166.0 460.4,167.8 461.0,167.5 461.6,167.7 461.6,170.2 461.0,170.3 460.4,170.8 459.8,170.7 459.2,170.2 458.6,171.4 458.0,170.6 457.4,170.0 456.8,170.2 456.2,171.5 455.6,170.8 455.0,170.5 454.4,171.4 453.8,171.3 453.2,171.7 452.6,170.8 452.0,170.7 451.4,170.9 450.8,169.8 450.2,170.2 449.6,170.4 449.0,169.5 448.4,169.8 447.8,170.0 447.2,170.4 446.6,170.8 446.0,170.8 445.4,170.8 444.8,171.4 444.2,171.2 443.6,169.9 443.0,170.4 442.4,171.6 441.8,170.8 441.2,170.4 440.6,171.4 440.0,171.0 439.4,170.8 438.8,171.4 438.2,171.6 437.6,171.0 437.0,170.1 436.4,169.6 435.8,169.8 435.2,171.1 434.6,170.4 434.0,170.7 433.4,169.9 432.8,168.9 432.2,168.8 431.6,168.3 431.0,169.2 430.4,169.6 429.8,170.4 429.2,169.6 428.6,171.2 428.0,170.1 427.4,171.3 426.8,171.6 426.2,170.2 425.6,170.1 425.0,170.7 424.4,170.2 423.8,170.0 423.2,170.4 422.6,168.9 422.0,168.9 421.4,168.9 420.8,169.8 420.2,169.6 419.6,169.8 419.0,170.6 418.4,171.2 417.8,169.8 417.2,170.4 416.6,171.5 416.0,170.9 415.4,170.3 414.8,169.7 414.2,171.2 413.6,171.9 413.0,171.7 412.4,171.0 411.8,170.5 411.2,171.7 410.6,171.5 410.0,170.8 409.4,170.7 408.8,171.7 408.2,171.6 407.6,170.6 407.0,170.8 406.4,170.2 405.8,171.1 405.2,170.7 404.6,170.1 404.0,171.2 403.4,170.5 402.8,169.9 402.2,170.6 401.6,170.4 401.0,171.4 400.4,171.0 399.8,171.0 399.2,171.2 398.6,171.4 398.0,172.0 397.4,171.8 396.8,171.3 396.2,170.1 395.6,171.1 395.0,169.3 394.4,169.9 393.8,171.1 393.2,170.5 392.6,170.9 392.0,171.1 391.4,171.2 390.8,170.7 390.2,171.0 389.6,170.6 389.0,170.8 388.4,171.0 387.8,171.2 387.2,170.9 386.6,170.2 386.0,169.7 385.4,170.3 384.8,171.3 384.2,171.1 383.6,170.6 383.0,171.2 382.4,170.5 381.8,171.3 381.2,171.0 380.6,169.4 380.0,170.7 379.4,170.5 378.8,170.8 378.2,170.0 377.6,171.4 377.0,170.5 376.4,170.1 375.8,171.8 375.2,170.8 374.6,171.5 374.0,170.2 373.4,170.3 372.8,169.7 372.2,170.6 371.6,169.1 371.0,170.0 370.4,169.6 369.8,169.3 369.2,171.2 368.6,171.6 368.0,171.5 367.4,171.1 366.8,170.9 366.2,169.8 365.6,171.3 365.0,171.4 364.4,170.9 363.8,171.7 363.2,170.4 362.6,170.6 362.0,169.6 361.4,169.1 360.8,169.2 360.2,170.2 359.6,169.2 359.0,170.9 358.4,171.7 357.8,170.3 357.2,171.1 356.6,170.4 356.0,169.8 355.4,170.9 354.8,169.6 354.2,170.6 353.6,169.9 353.0,170.7 352.4,169.7 351.8,170.4 351.2,169.5 350.6,170.1 350.0,169.1 349.4,170.8 348.8,170.2 348.2,171.4 347.6,170.5 347.0,172.1 346.4,170.6 345.8,172.3 345.2,171.3 344.6,172.0 344.0,170.1 343.4,171.3 342.8,170.2 342.2,170.5 341.6,170.9 341.0,169.6 340.4,170.0 339.8,169.6 339.2,169.4 338.6,169.9 338.0,170.0 337.4,170.1 336.8,169.9 336.2,170.7 335.6,170.2 335.0,170.2 334.4,172.2 333.8,172.2 333.2,170.8 332.6,171.7 332.0,171.7 331.4,170.7 330.8,171.1 330.2,171.2 329.6,172.0 329.0,171.4 328.4,172.3 327.8,172.1 327.2,170.5 326.6,170.1 326.0,170.6 325.4,171.4 324.8,170.5 324.2,170.9 323.6,172.0 323.0,171.7 322.4,169.9 321.8,169.6 321.2,170.2 320.6,170.7 320.0,170.2 319.4,169.5 318.8,170.3 318.2,170.0 317.6,170.6 317.0,171.1 316.4,172.3 315.8,171.5 315.2,171.1 314.6,170.4 314.0,170.5 313.4,169.9 312.8,170.7 312.2,169.7 311.6,169.8 311.0,170.2 310.4,171.5 309.8,170.5 309.2,169.6 308.6,169.8 308.0,170.8 307.4,171.4 306.8,169.8 306.2,170.4 305.6,170.2 305.0,169.9 304.4,168.9 303.8,170.4 303.2,171.0 302.6,169.9 302.0,170.4 301.4,171.0 300.8,171.1 300.2,171.5 299.6,171.3 299.0,171.6 298.4,171.1 297.8,169.9 297.2,168.9 296.6,168.4 296.0,169.2 295.4,170.2 294.8,169.4 294.2,169.9 293.6,171.2 293.0,170.9 292.4,171.5 291.8,171.3 291.2,170.6 290.6,170.2 290.0,171.1 289.4,170.7 288.8,169.4 288.2,169.0 287.6,168.6 287.0,169.1 286.4,170.5 285.8,170.4 285.2,169.1 284.6,169.1 284.0,170.6 283.4,169.2 282.8,169.2 282.2,170.8 281.6,170.2 281.0,169.9 280.4,169.7 279.8,170.0 279.2,169.1 278.6,170.7 278.0,170.4 277.4,170.5 276.8,169.9 276.2,170.7 275.6,170.1 275.0,169.9 274.4,171.0 273.8,170.2 273.2,170.9 272.6,172.2 272.0,172.1 271.4,170.6 270.8,171.0 270.2,169.5 269.6,170.4 269.0,170.2 268.4,168.7 267.8,170.0 267.2,168.8 266.6,169.9 266.0,169.1 265.4,169.7 264.8,170.1 264.2,169.4 263.6,168.3 263.0,169.8 262.4,169.8 261.8,169.1 261.2,170.0 260.6,168.5 260.0,169.2 259.4,168.7 258.8,169.0 258.2,167.7 257.6,168.0 257.0,168.2 256.4,167.6 255.8,168.1 255.2,167.3 254.6,167.6 254.0,168.7 253.4,167.7 252.8,167.8 252.2,166.6 251.6,167.6 251.0,167.5 250.4,167.6 249.8,166.6 249.2,165.9 248.6,166.5 248.0,165.2 247.4,164.8 246.8,165.1 246.2,166.2 245.6,165.5 245.0,164.3 244.4,164.9 243.8,164.4 243.2,164.3 242.6,163.9 242.0,163.8 241.4,162.9 240.8,163.6 240.2,161.8 239.6,161.5 239.0,162.0 238.4,161.0 237.8,162.4 237.2,162.8 236.6,162.1 236.0,161.8 235.4,160.9 234.8,160.7 234.2,159.7 233.6,161.3 233.0,160.3 232.4,161.2 231.8,160.0 231.2,160.5 230.6,161.5 230.0,161.1 229.4,160.6 228.8,160.1 228.2,159.2 227.6,160.3 227.0,159.0 226.4,159.6 225.8,159.1 225.2,157.1 224.6,157.7 224.0,155.8 223.4,156.6 222.8,154.4 222.2,153.6 221.6,154.5 221.0,153.8 220.4,152.8 219.8,152.8 219.2,153.6 218.6,152.9 218.0,155.5 217.4,155.5 216.8,155.4 216.2,156.7 215.6,157.5 215.0,157.2 214.4,157.0 213.8,157.4 213.2,157.8 212.6,156.8 212.0,157.1 211.4,157.3 210.8,156.6 210.2,158.5 209.6,157.9 209.0,157.5 208.4,156.5 207.8,156.7 207.2,156.7 206.6,156.6 206.0,156.3 205.4,155.7 204.8,156.2 204.2,155.9 203.6,156.8 203.0,156.1 202.4,153.9 201.8,153.4 201.2,152.9 200.6,152.5 200.0,152.2 199.4,152.8 198.8,152.6 198.2,152.7 197.6,152.2 197.0,150.9 196.4,151.5 195.8,150.6 195.2,151.1 194.6,150.1 194.0,150.0 193.4,150.1 192.8,149.9 192.2,150.6 191.6,150.4 191.0,150.9 190.4,151.2 189.8,150.9 189.2,152.0 188.6,151.6 188.0,153.6 187.4,152.4 186.8,152.7 186.2,152.7 185.6,153.2 185.0,152.3 184.4,152.8 183.8,153.0 183.2,151.9 182.6,152.1 182.0,151.8 181.4,151.8 180.8,150.5 180.2,150.3 179.6,148.7 179.0,149.3 178.4,148.8 177.8,148.3 177.2,146.7 176.6,146.0 176.0,146.4 175.4,144.2 174.8,144.5 174.2,142.4 173.6,142.9"/>
<rect x="173.6" y="146.3" width="288.5" height="1.6" fill="#3a4fb4"/>
<rect x="172.6" y="145.9" width="2.6" height="2.6" fill="#f0f0f0"/>
<rect x="460.6" y="145.9" width="2.6" height="2.6" fill="#f0f0f0"/>
<rect x="464.5" y="93.2" width="1" height="109.4" fill="#808080"/>
<rect x="171.8" y="201.2" width="293.7" height="1" fill="#9a9a9a"/>
<rect x="465" y="93.9" width="3.4" height=".9" fill="#8a8a8a"/>
<rect x="465" y="101.4" width="2" height=".9" fill="#8a8a8a"/>
<rect x="465" y="108.9" width="3.4" height=".9" fill="#8a8a8a"/>
<rect x="465" y="116.4" width="2" height=".9" fill="#8a8a8a"/>
<rect x="465" y="123.9" width="3.4" height=".9" fill="#8a8a8a"/>
<rect x="465" y="131.4" width="2" height=".9" fill="#8a8a8a"/>
<rect x="465" y="138.9" width="3.4" height=".9" fill="#8a8a8a"/>
<rect x="465" y="146.4" width="2" height=".9" fill="#8a8a8a"/>
<rect x="465" y="153.9" width="3.4" height=".9" fill="#8a8a8a"/>
<rect x="465" y="161.4" width="2" height=".9" fill="#8a8a8a"/>
<rect x="465" y="168.9" width="3.4" height=".9" fill="#8a8a8a"/>
<rect x="465" y="176.4" width="2" height=".9" fill="#8a8a8a"/>
<rect x="465" y="183.9" width="3.4" height=".9" fill="#8a8a8a"/>
<rect x="465" y="191.4" width="2" height=".9" fill="#8a8a8a"/>
<rect x="465" y="198.9" width="3.4" height=".9" fill="#8a8a8a"/>
<rect x="173.2" y="201.5" width=".9" height="3.6" fill="#8a8a8a"/>
<rect x="185.2" y="201.5" width=".9" height="2" fill="#8a8a8a"/>
<rect x="197.2" y="201.5" width=".9" height="3.6" fill="#8a8a8a"/>
<rect x="209.2" y="201.5" width=".9" height="2" fill="#8a8a8a"/>
<rect x="221.2" y="201.5" width=".9" height="3.6" fill="#8a8a8a"/>
<rect x="233.2" y="201.5" width=".9" height="2" fill="#8a8a8a"/>
<rect x="245.2" y="201.5" width=".9" height="3.6" fill="#8a8a8a"/>
<rect x="257.2" y="201.5" width=".9" height="2" fill="#8a8a8a"/>
<rect x="269.2" y="201.5" width=".9" height="3.6" fill="#8a8a8a"/>
<rect x="281.2" y="201.5" width=".9" height="2" fill="#8a8a8a"/>
<rect x="293.2" y="201.5" width=".9" height="3.6" fill="#8a8a8a"/>
<rect x="305.2" y="201.5" width=".9" height="2" fill="#8a8a8a"/>
<rect x="317.2" y="201.5" width=".9" height="3.6" fill="#8a8a8a"/>
<rect x="329.2" y="201.5" width=".9" height="2" fill="#8a8a8a"/>
<rect x="341.2" y="201.5" width=".9" height="3.6" fill="#8a8a8a"/>
<rect x="353.2" y="201.5" width=".9" height="2" fill="#8a8a8a"/>
<rect x="365.2" y="201.5" width=".9" height="3.6" fill="#8a8a8a"/>
<rect x="377.2" y="201.5" width=".9" height="2" fill="#8a8a8a"/>
<rect x="389.2" y="201.5" width=".9" height="3.6" fill="#8a8a8a"/>
<rect x="401.2" y="201.5" width=".9" height="2" fill="#8a8a8a"/>
<rect x="413.2" y="201.5" width=".9" height="3.6" fill="#8a8a8a"/>
<rect x="425.2" y="201.5" width=".9" height="2" fill="#8a8a8a"/>
<rect x="437.2" y="201.5" width=".9" height="3.6" fill="#8a8a8a"/>
<rect x="449.2" y="201.5" width=".9" height="2" fill="#8a8a8a"/>
<rect x="461.2" y="201.5" width=".9" height="3.6" fill="#8a8a8a"/>
</svg>
<span class="t" style="left:315.5px;top:66.9px;font-size:4.9px;color:#8a8a8a">dB</span>
<span class="t" style="left:315.5px;top:82.1px;font-size:4.9px;color:#8a8a8a">-20</span>
<span class="t" style="left:315.5px;top:97.1px;font-size:4.9px;color:#8a8a8a">-40</span>
<span class="t" style="left:315.5px;top:112.1px;font-size:4.9px;color:#8a8a8a">-60</span>
<span class="t" style="left:315.5px;top:127.1px;font-size:4.9px;color:#8a8a8a">-80</span>
<span class="t" style="left:315.5px;top:142.1px;font-size:4.9px;color:#8a8a8a">-100</span>
<span class="t" style="left:315.5px;top:157.1px;font-size:4.9px;color:#8a8a8a">-120</span>
<span class="t" style="left:315.5px;top:172.1px;font-size:4.9px;color:#8a8a8a">-140</span>
<span class="t tick" style="left:17.1px;top:183.7px">Hz</span>
<span class="t tick" style="left:41.1px;top:183.7px">2k</span>
<span class="t tick" style="left:65.1px;top:183.7px">4k</span>
<span class="t tick" style="left:89.1px;top:183.7px">6k</span>
<span class="t tick" style="left:113.1px;top:183.7px">8k</span>
<span class="t tick" style="left:137.1px;top:183.7px">10k</span>
<span class="t tick" style="left:161.1px;top:183.7px">12k</span>
<span class="t tick" style="left:185.1px;top:183.7px">14k</span>
<span class="t tick" style="left:209.1px;top:183.7px">16k</span>
<span class="t tick" style="left:233.1px;top:183.7px">18k</span>
<span class="t tick" style="left:257.1px;top:183.7px">20k</span>
<span class="t tick" style="left:281.1px;top:183.7px">22k</span>
<span class="t tick" style="left:305.1px;top:183.7px">24k</span>
<span class="t lab" style="left:13.2px;top:194.2px">Noise Floor:</span>
<div class="abs" style="left:47.9px;top:194.2px;width:6px;height:6px;background:#f2c81c"></div>
<span class="t lab" style="left:56.5px;top:194.2px">High</span>
<div class="abs" style="left:84.3px;top:194.2px;width:5.8px;height:6px;background:#d81828;color:#ff9aa0;font-size:5px;line-height:6px;text-align:center">&#215;</div>
<span class="t lab" style="left:92.6px;top:194.2px">Low</span>
<div class="abs" style="left:125.7px;top:194.2px;width:5.8px;height:5.8px;background:#1e962a"></div>
<span class="t lab" style="left:135.0px;top:194.2px">Threshold</span>
<span class="t lab" style="left:13.2px;top:211.3px">Scale:</span>
<div class="dd" style="left:30.7px;top:210.2px;width:49.5px;height:8.6px"></div>
<span class="t val" style="left:32.9px;top:211.3px">Linear</span>
<span class="t lab" style="left:87.3px;top:211.3px">Channel:</span>
<div class="dd" style="left:112.9px;top:210.2px;width:49.5px;height:8.6px"></div>
<span class="t val" style="left:115.0px;top:211.3px">Channel 1</span>
<div class="pill" style="left:170.0px;top:209.1px;width:53px;height:9.8px;line-height:8px;color:#454545;border-color:#303030;background:#2b2b2b;font-size:6px"><span>Select Entire File</span></div>
<div class="sep" style="left:15.0px;top:222.0px;width:320.5px"></div>
<span class="t lab" style="left:13.6px;top:230.2px">Noise Reduction:</span>
<span class="t tick" style="left:65.6px;top:229.8px;color:#8c8c8c">0</span>
<span class="t tick" style="left:83.4px;top:229.8px;color:#8c8c8c">10</span>
<span class="t tick" style="left:101.2px;top:229.8px;color:#8c8c8c">20</span>
<span class="t tick" style="left:119.0px;top:229.8px;color:#8c8c8c">30</span>
<span class="t tick" style="left:136.8px;top:229.8px;color:#8c8c8c">40</span>
<span class="t tick" style="left:154.6px;top:229.8px;color:#8c8c8c">50</span>
<span class="t tick" style="left:172.4px;top:229.8px;color:#8c8c8c">60</span>
<span class="t tick" style="left:190.2px;top:229.8px;color:#8c8c8c">70</span>
<span class="t tick" style="left:208.0px;top:229.8px;color:#8c8c8c">80</span>
<span class="t tick" style="left:225.8px;top:229.8px;color:#8c8c8c">90</span>
<span class="t tick" style="left:243.6px;top:229.8px;color:#8c8c8c">100</span>
<span class="t tick" style="left:61.5px;top:229.8px;color:#8c8c8c">0</span>
<span class="t lab" style="left:28.9px;top:246.4px">Reduce by:</span>
<span class="t tick" style="left:62.1px;top:247.4px;color:#8c8c8c">1</span>
<span class="t tick" style="left:92.4px;top:247.4px;color:#3c3c3c">2</span>
<span class="t tick" style="left:108.1px;top:247.4px;color:#383838">3</span>
<span class="t tick" style="left:119.2px;top:247.4px;color:#383838">4</span>
<span class="t tick" style="left:127.8px;top:247.4px;color:#383838">5</span>
<span class="t tick" style="left:134.9px;top:247.4px;color:#383838">6</span>
<span class="t tick" style="left:140.8px;top:247.4px;color:#383838">7</span>
<span class="t tick" style="left:146.0px;top:247.4px;color:#383838">8</span>
<span class="t tick" style="left:154.6px;top:247.4px;color:#9a9a9a">10</span>
<span class="t tick" style="left:181.4px;top:247.4px;color:#3c3c3c">20</span>
<span class="t tick" style="left:197.1px;top:247.4px;color:#3a3a3a">30</span>
<span class="t tick" style="left:208.2px;top:247.4px;color:#383838">40</span>
<span class="t tick" style="left:216.8px;top:247.4px;color:#383838">50</span>
<span class="t tick" style="left:229.8px;top:247.4px;color:#3a3a3a">70</span>
<span class="t tick" style="left:243.6px;top:247.4px;color:#8c8c8c">100</span>
<span class="t" style="left:261.7px;top:231.3px;font-size:6.4px;color:#8e8e8e"><b style="color:#3a86dc;font-weight:normal">50</b> %</span>
<span class="t" style="left:262.1px;top:249.5px;font-size:6.4px;color:#8e8e8e"><b style="color:#3a86dc;font-weight:normal">16</b> dB</span>
<div class="abs" style="left:13.2px;top:262.0px;width:7.6px;height:7.6px;box-sizing:border-box;border:1px solid #9c9c9c;border-radius:1px"></div>
<span class="t lab" style="left:23.6px;top:263.5px;color:#a0a0a0">Output Noise Only</span>
<div class="sep" style="left:12.9px;top:272.0px;width:322.5px"></div>
<span class="t" style="left:15.5px;top:278.5px;font-size:6.4px;color:#b0b0b0">&#8250;</span>
<span class="t val" style="left:26.0px;top:278.6px;font-weight:normal;color:#ececec">Advanced</span>
<div class="sep" style="left:9.3px;top:294.9px;width:326px"></div>
<span class="t lab" style="left:7.9px;top:302.9px;color:#a6a6a6">In: 1 | Out: 1</span>
<div class="abs" style="left:7.9px;top:313.5px;width:9.4px;height:9px;background:#4ea987;border-radius:1px"></div>
<div class="pill" style="left:247.2px;top:313.1px;width:41.6px;height:9.8px;line-height:8px;color:#2c2c2c;background:#8f8f8f;border-color:#8f8f8f"><span>Apply</span></div>
<div class="pill" style="left:294.0px;top:312.7px;width:42.6px;height:10.6px;line-height:9.4px;color:#d0d0d0"><span>Close</span></div>
<div class="abs" style="left:246.9px;top:307.9px;width:40px;height:20.6px;box-sizing:border-box;border:1.6px solid #e00008"></div>
<svg width="343.5" height="330.3" viewBox="155.7 24.7 343.5 330.3">
<path d="M286.3 52.7l1.9 1.9l1.9-1.9" stroke="#a8a8a8" stroke-width=".9" fill="none"/>
<path d="M230.9 237.7l1.9 1.9l1.9-1.9" stroke="#a8a8a8" stroke-width=".9" fill="none"/>
<path d="M312.6 237.7l1.9 1.9l1.9-1.9" stroke="#a8a8a8" stroke-width=".9" fill="none"/>
<path d="M303.09999999999997 50h1.5v2.6h1.7l-2.45 2.3l-2.45-2.3h1.7zM299.7 54.6h8.3v2.1h-8.3z" fill="#c8c8c8"/>
<path d="M240.9 75.1h1.5v2.6h1.7l-2.45 2.3l-2.45-2.3h1.7zM237.5 79.69999999999999h8.3v2.1h-8.3z" fill="#c8c8c8"/>
<path d="M313.4 51.2h5.8v7.4h-5.8zM315.2 49.8h2.2v1h-2.2z" fill="none" stroke="#9a9a9a" stroke-width=".9"/><path d="M315.3 52.6v4.6M317.3 52.6v4.6" stroke="#9a9a9a" stroke-width=".7"/>
<rect x="324.2" y="49.2" width=".8" height="10" fill="#383838"/>
<polygon points="333.00,50.40 333.91,52.85 336.52,52.96 334.47,54.58 335.17,57.09 333.00,55.65 330.83,57.09 331.53,54.58 329.48,52.96 332.09,52.85" fill="#e6e6e6"/>
<path d="M472.2 51.4h2.6l2.2 2.2M478.3 50.6v6.4M476.3 55.2h2" stroke="#dcdcdc" stroke-width="1.1" fill="none"/>
<circle cx="488.1" cy="54" r="4" fill="none" stroke="#d0d0d0" stroke-width=".9"/><path d="M488.1 53.2v3M488.1 51.4v.9" stroke="#d0d0d0" stroke-width="1"/>
<path d="M251.2 76.2h2.6l.9.9h4v1h-6.2l-1.3 3.6zM252.6 78.8h7.2l-1.2 3.2h-7.2z" fill="#c8c8c8"/>
<path d="M475.2 77.8h2.4l-1.2 1.5zM478.4 76.8h5.8v4.2h-5.8z" fill="#c4c4c4"/><path d="M479 78.2h4.6M479 79.6h4.6" stroke="#555" stroke-width=".6"/>
<path d="M477 236.6a3.3 3.3 0 1 1 -0.6 4.6" fill="none" stroke="#dcdcdc" stroke-width="1.1"/><path d="M475.2 235.4l2.4 0l0 2.4z" fill="#dcdcdc"/>
<rect x="220.7" y="260.40000000000003" width="178" height=".8" fill="#6a6a6a"/>
<rect x="220.95" y="258.6" width=".7" height="2.2" fill="#8a8a8a"/>
<rect x="224.51" y="259.7" width=".7" height="1.1" fill="#5c5c5c"/>
<rect x="228.07" y="259.7" width=".7" height="1.1" fill="#5c5c5c"/>
<rect x="231.63" y="259.7" width=".7" height="1.1" fill="#5c5c5c"/>
<rect x="235.19" y="259.7" width=".7" height="1.1" fill="#5c5c5c"/>
<rect x="238.75" y="258.6" width=".7" height="2.2" fill="#8a8a8a"/>
<rect x="242.31" y="259.7" width=".7" height="1.1" fill="#5c5c5c"/>
<rect x="245.87" y="259.7" width=".7" height="1.1" fill="#5c5c5c"/>
<rect x="249.43" y="259.7" width=".7" height="1.1" fill="#5c5c5c"/>
<rect x="252.99" y="259.7" width=".7" height="1.1" fill="#5c5c5c"/>
<rect x="256.55" y="258.6" width=".7" height="2.2" fill="#8a8a8a"/>
<rect x="260.11" y="259.7" width=".7" height="1.1" fill="#5c5c5c"/>
<rect x="263.67" y="259.7" width=".7" height="1.1" fill="#5c5c5c"/>
<rect x="267.23" y="259.7" width=".7" height="1.1" fill="#5c5c5c"/>
<rect x="270.79" y="259.7" width=".7" height="1.1" fill="#5c5c5c"/>
<rect x="274.35" y="258.6" width=".7" height="2.2" fill="#8a8a8a"/>
<rect x="277.91" y="259.7" width=".7" height="1.1" fill="#5c5c5c"/>
<rect x="281.47" y="259.7" width=".7" height="1.1" fill="#5c5c5c"/>
<rect x="285.03" y="259.7" width=".7" height="1.1" fill="#5c5c5c"/>
<rect x="288.59" y="259.7" width=".7" height="1.1" fill="#5c5c5c"/>
<rect x="292.15" y="258.6" width=".7" height="2.2" fill="#8a8a8a"/>
<rect x="295.71" y="259.7" width=".7" height="1.1" fill="#5c5c5c"/>
<rect x="299.27" y="259.7" width=".7" height="1.1" fill="#5c5c5c"/>
<rect x="302.83" y="259.7" width=".7" height="1.1" fill="#5c5c5c"/>
<rect x="306.39" y="259.7" width=".7" height="1.1" fill="#5c5c5c"/>
<rect x="309.95" y="258.6" width=".7" height="2.2" fill="#8a8a8a"/>
<rect x="313.51" y="259.7" width=".7" height="1.1" fill="#5c5c5c"/>
<rect x="317.07" y="259.7" width=".7" height="1.1" fill="#5c5c5c"/>
<rect x="320.63" y="259.7" width=".7" height="1.1" fill="#5c5c5c"/>
<rect x="324.19" y="259.7" width=".7" height="1.1" fill="#5c5c5c"/>
<rect x="327.75" y="258.6" width=".7" height="2.2" fill="#8a8a8a"/>
<rect x="331.31" y="259.7" width=".7" height="1.1" fill="#5c5c5c"/>
<rect x="334.87" y="259.7" width=".7" height="1.1" fill="#5c5c5c"/>
<rect x="338.43" y="259.7" width=".7" height="1.1" fill="#5c5c5c"/>
<rect x="341.99" y="259.7" width=".7" height="1.1" fill="#5c5c5c"/>
<rect x="345.55" y="258.6" width=".7" height="2.2" fill="#8a8a8a"/>
<rect x="349.11" y="259.7" width=".7" height="1.1" fill="#5c5c5c"/>
<rect x="352.67" y="259.7" width=".7" height="1.1" fill="#5c5c5c"/>
<rect x="356.23" y="259.7" width=".7" height="1.1" fill="#5c5c5c"/>
<rect x="359.79" y="259.7" width=".7" height="1.1" fill="#5c5c5c"/>
<rect x="363.35" y="258.6" width=".7" height="2.2" fill="#8a8a8a"/>
<rect x="366.91" y="259.7" width=".7" height="1.1" fill="#5c5c5c"/>
<rect x="370.47" y="259.7" width=".7" height="1.1" fill="#5c5c5c"/>
<rect x="374.03" y="259.7" width=".7" height="1.1" fill="#5c5c5c"/>
<rect x="377.59" y="259.7" width=".7" height="1.1" fill="#5c5c5c"/>
<rect x="381.15" y="258.6" width=".7" height="2.2" fill="#8a8a8a"/>
<rect x="384.71" y="259.7" width=".7" height="1.1" fill="#5c5c5c"/>
<rect x="388.27" y="259.7" width=".7" height="1.1" fill="#5c5c5c"/>
<rect x="391.83" y="259.7" width=".7" height="1.1" fill="#5c5c5c"/>
<rect x="395.39" y="259.7" width=".7" height="1.1" fill="#5c5c5c"/>
<rect x="398.95" y="258.6" width=".7" height="2.2" fill="#8a8a8a"/>
<circle cx="310.2" cy="261.6" r="2.5" fill="#232323" stroke="#b8b8b8" stroke-width="1"/>
<rect x="220.7" y="278.20000000000005" width="178" height=".8" fill="#6a6a6a"/>
<rect x="220.95" y="276.4" width=".7" height="2.2" fill="#8a8a8a"/>
<rect x="247.74" y="277.3" width=".7" height="1.3" fill="#8a8a8a"/>
<rect x="263.41" y="277.3" width=".7" height="1.3" fill="#8a8a8a"/>
<rect x="274.53" y="277.3" width=".7" height="1.3" fill="#8a8a8a"/>
<rect x="283.16" y="277.3" width=".7" height="1.3" fill="#8a8a8a"/>
<rect x="290.21" y="277.3" width=".7" height="1.3" fill="#8a8a8a"/>
<rect x="296.16" y="277.3" width=".7" height="1.3" fill="#8a8a8a"/>
<rect x="301.33" y="277.3" width=".7" height="1.3" fill="#8a8a8a"/>
<rect x="305.88" y="277.3" width=".7" height="1.3" fill="#8a8a8a"/>
<rect x="309.95" y="276.4" width=".7" height="2.2" fill="#8a8a8a"/>
<rect x="336.74" y="277.3" width=".7" height="1.3" fill="#8a8a8a"/>
<rect x="352.41" y="277.3" width=".7" height="1.3" fill="#8a8a8a"/>
<rect x="363.53" y="277.3" width=".7" height="1.3" fill="#8a8a8a"/>
<rect x="372.16" y="277.3" width=".7" height="1.3" fill="#8a8a8a"/>
<rect x="379.21" y="277.3" width=".7" height="1.3" fill="#8a8a8a"/>
<rect x="385.16" y="277.3" width=".7" height="1.3" fill="#8a8a8a"/>
<rect x="390.33" y="277.3" width=".7" height="1.3" fill="#8a8a8a"/>
<rect x="394.88" y="277.3" width=".7" height="1.3" fill="#8a8a8a"/>
<rect x="398.95" y="276.4" width=".7" height="2.2" fill="#8a8a8a"/>
<circle cx="328.3" cy="279.40000000000003" r="2.5" fill="#232323" stroke="#b8b8b8" stroke-width="1"/>
<path d="M181.8 339.8l5.4 2.8l-5.4 2.8z" fill="#e8e8e8"/>
<path d="M197.2 342.2h2v2.4h4.8v-2.4h2v4.2h-8.8z" fill="#3a86dc"/><path d="M199.4 343.4c.2-2.4 1.8-3.4 3.6-3.3v-1.3l2.6 2.2l-2.6 2.2v-1.3c-1.4-.1-2.6.3-3.6 1.5z" fill="#3a86dc"/>
</svg>
</div>
</body></html>
